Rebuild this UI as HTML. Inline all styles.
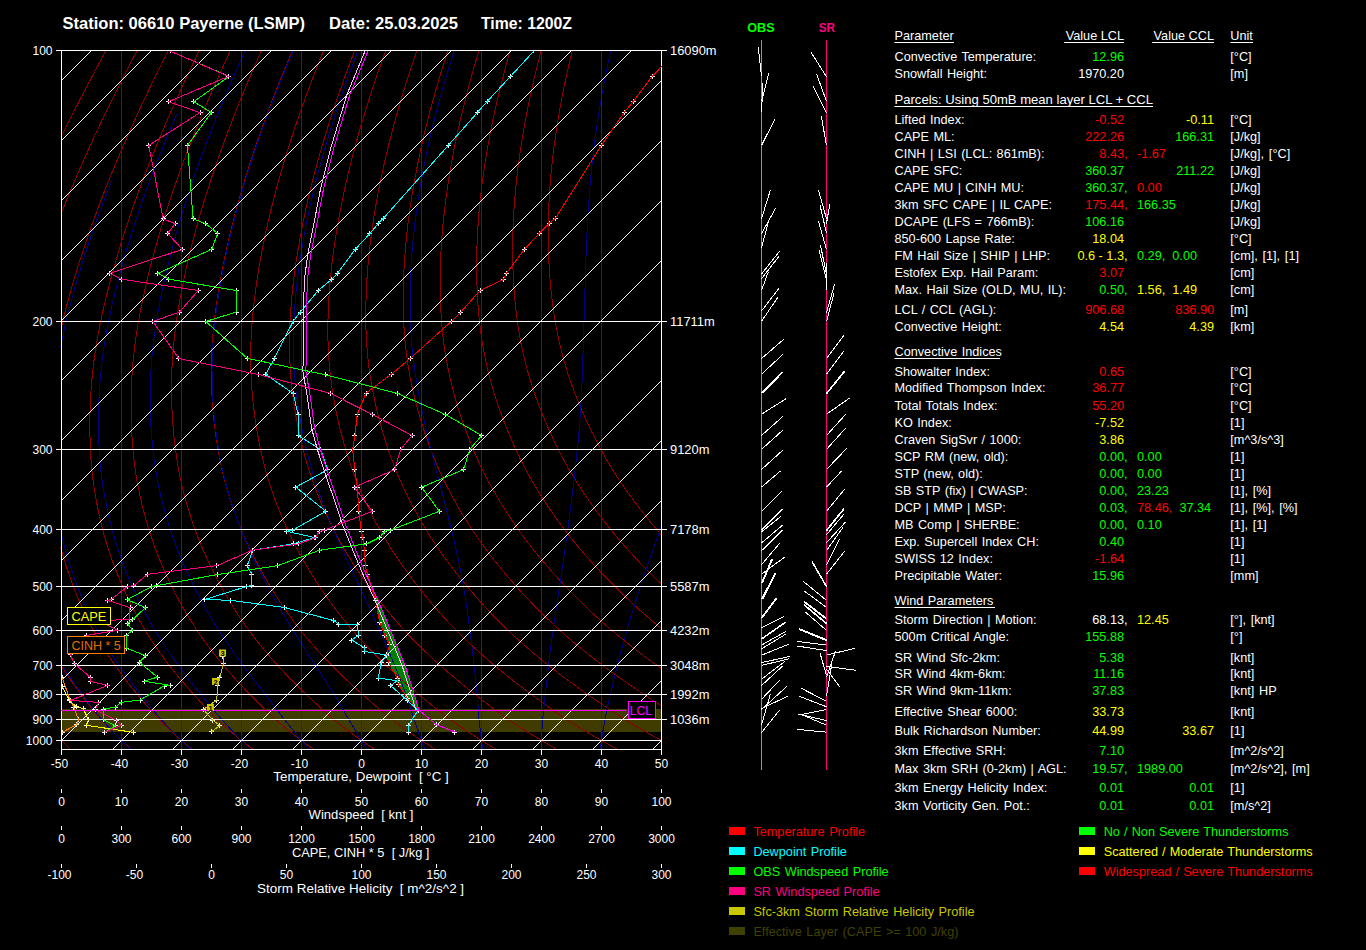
<!DOCTYPE html><html><head><meta charset="utf-8"><style>html,body{margin:0;padding:0;background:#000;width:1366px;height:950px;overflow:hidden}</style></head><body><svg width="1366" height="950" viewBox="0 0 1366 950" style="display:block;font-family:'Liberation Sans', sans-serif"><rect x="62" y="709" width="599" height="23" fill="#403c00"/><polygon points="365.5,571 366.8,576.3 377.9,600 390.6,630.6 404.8,664.7 413.3,691.2 419,710.2 407.7,698.8 398.2,684.6 397.2,678 388.7,662.8 386.8,654.3 389.7,644.8 384.9,635.3 379.6,622 375.5,600.3 366,573.8" fill="#008000"/><g shape-rendering="crispEdges"><polyline points="106.10,50.50 101.38,59.15 96.83,67.59 92.44,75.80 88.20,83.82 84.11,91.64 80.15,99.27 76.33,106.72 72.64,114.00 69.07,121.12 65.61,128.07 62.27,134.87" fill="none" stroke="#8b0000" stroke-width="1" /><polyline points="60.74,739.72 61.12,740.11 61.50,740.50 61.88,740.89 62.26,741.27 62.64,741.65 63.02,742.04 63.39,742.42 63.77,742.80 64.15,743.17 64.53,743.55 64.91,743.93 65.29,744.30 65.67,744.68 66.05,745.05 66.43,745.42 66.81,745.79 67.19,746.16 67.57,746.53 67.96,746.90 68.34,747.26 68.72,747.63 69.10,747.99 69.48,748.35 69.86,748.71 70.24,749.07 70.62,749.43" fill="none" stroke="#8b0000" stroke-width="1" /><polyline points="137.18,50.50 132.64,59.15 128.26,67.59 124.04,75.80 119.97,83.82 116.04,91.64 112.25,99.27 108.60,106.72 105.06,114.00 101.65,121.12 98.35,128.07 95.16,134.87 92.08,141.53 89.10,148.04 86.21,154.42 83.42,160.66 80.72,166.78 78.10,172.77 75.57,178.64 73.12,184.40 70.74,190.05 68.44,195.60 66.20,201.03 64.04,206.37 61.94,211.61" fill="none" stroke="#8b0000" stroke-width="1" /><polyline points="60.57,664.86 60.97,665.50 61.37,666.13 61.77,666.76 62.17,667.39 62.57,668.01 62.96,668.64 63.36,669.26 63.77,669.87 64.17,670.49 64.57,671.10 64.97,671.71 65.37,672.32 65.77,672.93 66.17,673.53 66.58,674.13 66.98,674.73 67.38,675.33 67.79,675.92 68.19,676.51 68.59,677.10 69.00,677.69 69.40,678.28 69.81,678.86 70.21,679.44 70.61,680.03 71.02,680.60 71.42,681.18 71.83,681.75 72.23,682.33 72.64,682.90 73.04,683.47 73.44,684.03 73.85,684.60 74.25,685.16 74.66,685.73 75.06,686.29 75.46,686.84 75.87,687.40 76.27,687.96 76.68,688.51 77.08,689.06 77.48,689.61 77.89,690.16 78.29,690.71 78.69,691.26 79.09,691.80 79.49,692.34 79.90,692.88 80.30,693.42 80.70,693.96 81.10,694.50 81.50,695.04 81.90,695.57 82.30,696.10 82.70,696.64 83.10,697.17 83.50,697.70 83.89,698.23 84.29,698.75 84.69,699.28 85.09,699.81 85.48,700.33 85.88,700.85 86.28,701.37 86.67,701.89 87.07,702.41 87.46,702.93 87.86,703.44 88.26,703.95 88.65,704.47 89.05,704.98 89.44,705.49 89.84,705.99 90.24,706.50 90.63,707.00 91.03,707.50 91.42,708.01 91.82,708.50 92.22,709.00 92.61,709.50 93.01,709.99 93.41,710.48 93.80,710.98 94.20,711.46 94.60,711.95 95.00,712.44 95.40,712.92 95.79,713.40 96.19,713.88 96.59,714.36 96.99,714.84 97.39,715.31 97.79,715.79 98.20,716.26 98.60,716.73 99.00,717.19 99.40,717.66 99.81,718.12 100.21,718.58 100.61,719.04 101.02,719.50 101.42,719.96 101.83,720.41 102.24,720.86 102.64,721.31 103.05,721.76 103.45,722.21 103.86,722.66 104.27,723.10 104.67,723.55 105.08,723.99 105.49,724.43 105.90,724.87 106.30,725.30 106.71,725.74 107.12,726.17 107.53,726.61 107.94,727.04 108.35,727.47 108.75,727.90 109.16,728.32 109.57,728.75 109.98,729.17 110.39,729.60 110.80,730.02 111.21,730.44 111.62,730.86 112.03,731.27 112.44,731.69 112.85,732.10 113.26,732.52 113.67,732.93 114.08,733.34 114.50,733.75 114.91,734.16 115.32,734.56 115.73,734.97 116.14,735.37 116.55,735.77 116.96,736.17 117.38,736.57 117.79,736.97 118.20,737.37 118.61,737.76 119.02,738.16 119.44,738.55 119.85,738.94 120.26,739.34 120.67,739.72 121.09,740.11 121.50,740.50 121.91,740.89 122.33,741.27 122.74,741.65 123.15,742.04 123.57,742.42 123.98,742.80 124.39,743.17 124.81,743.55 125.22,743.93 125.63,744.30 126.05,744.68 126.46,745.05 126.87,745.42 127.29,745.79 127.70,746.16 128.12,746.53 128.53,746.90 128.95,747.26 129.36,747.63 129.77,747.99 130.19,748.35 130.60,748.71 131.02,749.07 131.43,749.43" fill="none" stroke="#8b0000" stroke-width="1" /><polyline points="168.26,50.50 163.89,59.15 159.69,67.59 155.64,75.80 151.74,83.82 147.98,91.64 144.36,99.27 140.86,106.72 137.49,114.00 134.23,121.12 131.09,128.07 128.06,134.87 125.13,141.53 122.30,148.04 119.56,154.42 116.92,160.66 114.36,166.78 111.89,172.77 109.50,178.64 107.19,184.40 104.95,190.05 102.79,195.60 100.69,201.03 98.67,206.37 96.71,211.61 94.81,216.76 92.97,221.81 91.19,226.78 89.47,231.66 87.80,236.46 86.18,241.17 84.62,245.81 83.10,250.37 81.63,254.86 80.21,259.27 78.84,263.62 77.50,267.90 76.21,272.10 74.96,276.25 73.75,280.33 72.58,284.35 71.45,288.31 70.35,292.21 69.29,296.06 68.26,299.85 67.26,303.59 66.30,307.27 65.37,310.90 64.46,314.48 63.59,318.02 62.75,321.50 61.94,324.93 61.16,328.32" fill="none" stroke="#8b0000" stroke-width="1" /><polyline points="60.67,547.23 60.99,548.43 61.31,549.63 61.64,550.82 61.97,552.00 62.30,553.18 62.63,554.35 62.97,555.51 63.31,556.66 63.65,557.81 63.99,558.95 64.33,560.08 64.68,561.21 65.02,562.33 65.37,563.44 65.72,564.55 66.08,565.65 66.43,566.74 66.79,567.83 67.14,568.92 67.50,569.99 67.86,571.07 68.22,572.13 68.59,573.19 68.95,574.25 69.32,575.30 69.68,576.34 70.05,577.38 70.42,578.41 70.79,579.44 71.16,580.46 71.53,581.48 71.90,582.50 72.27,583.50 72.65,584.51 73.02,585.51 73.40,586.50 73.78,587.49 74.15,588.47 74.53,589.45 74.91,590.43 75.29,591.40 75.67,592.36 76.06,593.32 76.44,594.28 76.82,595.23 77.21,596.18 77.60,597.12 77.98,598.05 78.37,598.99 78.76,599.91 79.15,600.84 79.54,601.76 79.94,602.67 80.33,603.58 80.73,604.48 81.12,605.39 81.52,606.28 81.91,607.17 82.31,608.06 82.71,608.95 83.11,609.82 83.51,610.70 83.91,611.57 84.32,612.44 84.72,613.30 85.12,614.16 85.53,615.01 85.94,615.86 86.34,616.71 86.75,617.55 87.16,618.39 87.57,619.22 87.98,620.05 88.39,620.88 88.80,621.70 89.22,622.52 89.63,623.34 90.05,624.15 90.46,624.96 90.88,625.76 91.29,626.56 91.71,627.35 92.13,628.15 92.55,628.93 92.97,629.72 93.39,630.50 93.81,631.28 94.24,632.05 94.66,632.82 95.08,633.59 95.51,634.35 95.94,635.11 96.36,635.86 96.79,636.62 97.22,637.36 97.65,638.11 98.08,638.85 98.51,639.59 98.94,640.33 99.37,641.06 99.80,641.79 100.24,642.51 100.67,643.23 101.10,643.95 101.54,644.67 101.97,645.38 102.41,646.09 102.84,646.80 103.28,647.50 103.72,648.20 104.15,648.90 104.59,649.60 105.03,650.29 105.47,650.98 105.91,651.67 106.35,652.35 106.78,653.03 107.22,653.71 107.66,654.39 108.10,655.06 108.54,655.73 108.98,656.40 109.42,657.06 109.86,657.73 110.30,658.39 110.75,659.05 111.19,659.70 111.63,660.36 112.07,661.01 112.51,661.66 112.95,662.30 113.39,662.95 113.83,663.59 114.28,664.23 114.72,664.86 115.16,665.50 115.60,666.13 116.04,666.76 116.49,667.39 116.93,668.01 117.37,668.64 117.82,669.26 118.26,669.87 118.70,670.49 119.15,671.10 119.59,671.71 120.04,672.32 120.48,672.93 120.93,673.53 121.37,674.13 121.82,674.73 122.27,675.33 122.71,675.92 123.16,676.51 123.61,677.10 124.05,677.69 124.50,678.28 124.94,678.86 125.39,679.44 125.84,680.03 126.28,680.60 126.73,681.18 127.18,681.75 127.62,682.33 128.07,682.90 128.52,683.47 128.96,684.03 129.41,684.60 129.85,685.16 130.30,685.73 130.74,686.29 131.19,686.84 131.63,687.40 132.08,687.96 132.52,688.51 132.97,689.06 133.41,689.61 133.86,690.16 134.30,690.71 134.74,691.26 135.19,691.80 135.63,692.34 136.07,692.88 136.51,693.42 136.95,693.96 137.39,694.50 137.84,695.04 138.28,695.57 138.72,696.10 139.15,696.64 139.59,697.17 140.03,697.70 140.47,698.23 140.91,698.75 141.34,699.28 141.78,699.81 142.22,700.33 142.65,700.85 143.09,701.37 143.52,701.89 143.96,702.41 144.39,702.93 144.83,703.44 145.26,703.95 145.70,704.47 146.13,704.98 146.57,705.49 147.00,705.99 147.44,706.50 147.87,707.00 148.30,707.50 148.74,708.01 149.17,708.50 149.61,709.00 150.04,709.50 150.48,709.99 150.91,710.48 151.35,710.98 151.78,711.46 152.22,711.95 152.66,712.44 153.09,712.92 153.53,713.40 153.97,713.88 154.40,714.36 154.84,714.84 155.28,715.31 155.72,715.79 156.16,716.26 156.60,716.73 157.03,717.19 157.47,717.66 157.92,718.12 158.36,718.58 158.80,719.04 159.24,719.50 159.68,719.96 160.12,720.41 160.57,720.86 161.01,721.31 161.45,721.76 161.90,722.21 162.34,722.66 162.78,723.10 163.23,723.55 163.67,723.99 164.11,724.43 164.56,724.87 165.00,725.30 165.45,725.74 165.89,726.17 166.33,726.61 166.78,727.04 167.22,727.47 167.67,727.90 168.11,728.32 168.56,728.75 169.00,729.17 169.45,729.60 169.89,730.02 170.34,730.44 170.78,730.86 171.23,731.27 171.68,731.69 172.12,732.10 172.57,732.52 173.01,732.93 173.46,733.34 173.91,733.75 174.35,734.16 174.80,734.56 175.24,734.97 175.69,735.37 176.14,735.77 176.58,736.17 177.03,736.57 177.48,736.97 177.92,737.37 178.37,737.76 178.82,738.16 179.26,738.55 179.71,738.94 180.16,739.34 180.61,739.72 181.05,740.11 181.50,740.50 181.95,740.89 182.39,741.27 182.84,741.65 183.29,742.04 183.74,742.42 184.18,742.80 184.63,743.17 185.08,743.55 185.53,743.93 185.97,744.30 186.42,744.68 186.87,745.05 187.32,745.42 187.76,745.79 188.21,746.16 188.66,746.53 189.11,746.90 189.55,747.26 190.00,747.63 190.45,747.99 190.90,748.35 191.35,748.71 191.79,749.07 192.24,749.43" fill="none" stroke="#8b0000" stroke-width="1" /><polyline points="199.34,50.50 195.15,59.15 191.12,67.59 187.24,75.80 183.51,83.82 179.92,91.64 176.46,99.27 173.12,106.72 169.91,114.00 166.82,121.12 163.83,128.07 160.95,134.87 158.18,141.53 155.50,148.04 152.91,154.42 150.42,160.66 148.01,166.78 145.68,172.77 143.43,178.64 141.26,184.40 139.17,190.05 137.14,195.60 135.18,201.03 133.29,206.37 131.47,211.61 129.70,216.76 128.00,221.81 126.35,226.78 124.75,231.66 123.21,236.46 121.73,241.17 120.29,245.81 118.90,250.37 117.55,254.86 116.26,259.27 115.00,263.62 113.79,267.90 112.62,272.10 111.49,276.25 110.40,280.33 109.34,284.35 108.32,288.31 107.34,292.21 106.39,296.06 105.48,299.85 104.59,303.59 103.74,307.27 102.92,310.90 102.13,314.48 101.37,318.02 100.63,321.50 99.93,324.93 99.26,328.32 98.62,331.65 98.01,334.93 97.44,338.16 96.89,341.35 96.37,344.49 95.87,347.58 95.40,350.63 94.96,353.64 94.54,356.62 94.15,359.55 93.77,362.44 93.42,365.29 93.09,368.11 92.78,370.89 92.49,373.64 92.22,376.36 91.96,379.04 91.73,381.69 91.51,384.30 91.30,386.89 91.12,389.45 90.94,391.98 90.79,394.48 90.64,396.95 90.51,399.40 90.40,401.82 90.29,404.21 90.20,406.58 90.12,408.92 90.06,411.25 90.00,413.54 89.95,415.82 89.92,418.07 89.89,420.30 89.88,422.51 89.87,424.70 89.87,426.87 89.89,429.02 89.91,431.15 89.93,433.26 89.97,435.35 90.01,437.42 90.06,439.48 90.12,441.51 90.19,443.54 90.26,445.54 90.34,447.53 90.42,449.50 90.51,451.45 90.61,453.39 90.72,455.31 90.84,457.20 90.97,459.09 91.11,460.95 91.25,462.79 91.40,464.62 91.56,466.43 91.73,468.23 91.91,470.01 92.09,471.77 92.28,473.52 92.47,475.25 92.67,476.97 92.88,478.67 93.10,480.36 93.32,482.04 93.55,483.70 93.78,485.34 94.01,486.98 94.26,488.60 94.50,490.21 94.76,491.80 95.02,493.39 95.28,494.96 95.54,496.52 95.82,498.06 96.09,499.60 96.37,501.13 96.65,502.64 96.94,504.14 97.23,505.63 97.53,507.11 97.83,508.58 98.13,510.04 98.43,511.49 98.74,512.93 99.05,514.36 99.37,515.79 99.69,517.20 100.01,518.60 100.33,519.99 100.66,521.38 100.99,522.75 101.32,524.12 101.65,525.48 101.98,526.83 102.32,528.17 102.66,529.50 103.01,530.82 103.35,532.14 103.70,533.44 104.05,534.74 104.41,536.03 104.77,537.31 105.13,538.58 105.50,539.84 105.87,541.09 106.24,542.33 106.61,543.57 106.99,544.80 107.37,546.02 107.75,547.23 108.13,548.43 108.52,549.63 108.91,550.82 109.30,552.00 109.69,553.18 110.09,554.35 110.49,555.51 110.88,556.66 111.29,557.81 111.69,558.95 112.09,560.08 112.50,561.21 112.91,562.33 113.32,563.44 113.73,564.55 114.14,565.65 114.55,566.74 114.97,567.83 115.38,568.92 115.80,569.99 116.22,571.07 116.64,572.13 117.06,573.19 117.48,574.25 117.91,575.30 118.33,576.34 118.76,577.38 119.18,578.41 119.61,579.44 120.04,580.46 120.47,581.48 120.90,582.50 121.33,583.50 121.76,584.51 122.19,585.51 122.62,586.50 123.05,587.49 123.49,588.47 123.92,589.45 124.36,590.43 124.79,591.40 125.23,592.36 125.67,593.32 126.11,594.28 126.54,595.23 126.99,596.18 127.43,597.12 127.87,598.05 128.31,598.99 128.76,599.91 129.20,600.84 129.65,601.76 130.09,602.67 130.54,603.58 130.99,604.48 131.44,605.39 131.88,606.28 132.33,607.17 132.79,608.06 133.24,608.95 133.69,609.82 134.14,610.70 134.60,611.57 135.05,612.44 135.51,613.30 135.96,614.16 136.42,615.01 136.88,615.86 137.34,616.71 137.80,617.55 138.26,618.39 138.72,619.22 139.18,620.05 139.64,620.88 140.11,621.70 140.57,622.52 141.03,623.34 141.50,624.15 141.96,624.96 142.43,625.76 142.90,626.56 143.37,627.35 143.83,628.15 144.30,628.93 144.77,629.72 145.24,630.50 145.72,631.28 146.19,632.05 146.66,632.82 147.13,633.59 147.61,634.35 148.08,635.11 148.56,635.86 149.03,636.62 149.51,637.36 149.99,638.11 150.47,638.85 150.95,639.59 151.42,640.33 151.90,641.06 152.38,641.79 152.86,642.51 153.35,643.23 153.83,643.95 154.31,644.67 154.79,645.38 155.27,646.09 155.76,646.80 156.24,647.50 156.72,648.20 157.21,648.90 157.69,649.60 158.17,650.29 158.66,650.98 159.14,651.67 159.63,652.35 160.11,653.03 160.60,653.71 161.08,654.39 161.57,655.06 162.06,655.73 162.54,656.40 163.03,657.06 163.51,657.73 164.00,658.39 164.49,659.05 164.97,659.70 165.46,660.36 165.94,661.01 166.43,661.66 166.92,662.30 167.40,662.95 167.89,663.59 168.37,664.23 168.86,664.86 169.35,665.50 169.83,666.13 170.32,666.76 170.80,667.39 171.29,668.01 171.78,668.64 172.27,669.26 172.75,669.87 173.24,670.49 173.73,671.10 174.22,671.71 174.71,672.32 175.20,672.93 175.68,673.53 176.17,674.13 176.66,674.73 177.15,675.33 177.64,675.92 178.13,676.51 178.62,677.10 179.11,677.69 179.59,678.28 180.08,678.86 180.57,679.44 181.06,680.03 181.55,680.60 182.04,681.18 182.53,681.75 183.01,682.33 183.50,682.90 183.99,683.47 184.48,684.03 184.97,684.60 185.45,685.16 185.94,685.73 186.43,686.29 186.91,686.84 187.40,687.40 187.89,687.96 188.37,688.51 188.86,689.06 189.34,689.61 189.83,690.16 190.31,690.71 190.79,691.26 191.28,691.80 191.76,692.34 192.24,692.88 192.73,693.42 193.21,693.96 193.69,694.50 194.17,695.04 194.65,695.57 195.13,696.10 195.61,696.64 196.09,697.17 196.57,697.70 197.04,698.23 197.52,698.75 198.00,699.28 198.47,699.81 198.95,700.33 199.42,700.85 199.90,701.37 200.37,701.89 200.85,702.41 201.32,702.93 201.80,703.44 202.27,703.95 202.74,704.47 203.22,704.98 203.69,705.49 204.16,705.99 204.64,706.50 205.11,707.00 205.58,707.50 206.06,708.01 206.53,708.50 207.00,709.00 207.47,709.50 207.95,709.99 208.42,710.48 208.89,710.98 209.37,711.46 209.84,711.95 210.32,712.44 210.79,712.92 211.26,713.40 211.74,713.88 212.21,714.36 212.69,714.84 213.16,715.31 213.64,715.79 214.12,716.26 214.59,716.73 215.07,717.19 215.55,717.66 216.02,718.12 216.50,718.58 216.98,719.04 217.46,719.50 217.94,719.96 218.42,720.41 218.90,720.86 219.38,721.31 219.86,721.76 220.34,722.21 220.82,722.66 221.30,723.10 221.78,723.55 222.26,723.99 222.74,724.43 223.22,724.87 223.70,725.30 224.18,725.74 224.66,726.17 225.14,726.61 225.62,727.04 226.10,727.47 226.58,727.90 227.06,728.32 227.54,728.75 228.02,729.17 228.50,729.60 228.98,730.02 229.47,730.44 229.95,730.86 230.43,731.27 230.91,731.69 231.39,732.10 231.87,732.52 232.35,732.93 232.83,733.34 233.32,733.75 233.80,734.16 234.28,734.56 234.76,734.97 235.24,735.37 235.72,735.77 236.20,736.17 236.69,736.57 237.17,736.97 237.65,737.37 238.13,737.76 238.61,738.16 239.09,738.55 239.57,738.94 240.06,739.34 240.54,739.72 241.02,740.11 241.50,740.50 241.98,740.89 242.46,741.27 242.94,741.65 243.43,742.04 243.91,742.42 244.39,742.80 244.87,743.17 245.35,743.55 245.83,743.93 246.31,744.30 246.80,744.68 247.28,745.05 247.76,745.42 248.24,745.79 248.72,746.16 249.20,746.53 249.68,746.90 250.16,747.26 250.65,747.63 251.13,747.99 251.61,748.35 252.09,748.71 252.57,749.07 253.05,749.43" fill="none" stroke="#8b0000" stroke-width="1" /><polyline points="230.41,50.50 226.40,59.15 222.54,67.59 218.84,75.80 215.28,83.82 211.85,91.64 208.56,99.27 205.39,106.72 202.34,114.00 199.40,121.12 196.57,128.07 193.85,134.87 191.22,141.53 188.70,148.04 186.26,154.42 183.91,160.66 181.65,166.78 179.47,172.77 177.36,178.64 175.34,184.40 173.38,190.05 171.49,195.60 169.67,201.03 167.92,206.37 166.23,211.61 164.60,216.76 163.02,221.81 161.51,226.78 160.04,231.66 158.63,236.46 157.27,241.17 155.96,245.81 154.69,250.37 153.47,254.86 152.30,259.27 151.17,263.62 150.08,267.90 149.03,272.10 148.01,276.25 147.04,280.33 146.10,284.35 145.20,288.31 144.33,292.21 143.50,296.06 142.70,299.85 141.93,303.59 141.19,307.27 140.48,310.90 139.80,314.48 139.14,318.02 138.52,321.50 137.92,324.93 137.36,328.32 136.83,331.65 136.32,334.93 135.85,338.16 135.41,341.35 134.99,344.49 134.60,347.58 134.23,350.63 133.89,353.64 133.57,356.62 133.28,359.55 133.00,362.44 132.75,365.29 132.52,368.11 132.31,370.89 132.11,373.64 131.94,376.36 131.78,379.04 131.64,381.69 131.51,384.30 131.40,386.89 131.31,389.45 131.23,391.98 131.16,394.48 131.11,396.95 131.07,399.40 131.05,401.82 131.04,404.21 131.04,406.58 131.05,408.92 131.07,411.25 131.10,413.54 131.14,415.82 131.19,418.07 131.26,420.30 131.33,422.51 131.41,424.70 131.49,426.87 131.59,429.02 131.70,431.15 131.81,433.26 131.93,435.35 132.06,437.42 132.19,439.48 132.33,441.51 132.48,443.54 132.63,445.54 132.79,447.53 132.96,449.50 133.13,451.45 133.31,453.39 133.50,455.31 133.70,457.20 133.91,459.09 134.12,460.95 134.34,462.79 134.58,464.62 134.81,466.43 135.06,468.23 135.31,470.01 135.57,471.77 135.84,473.52 136.11,475.25 136.39,476.97 136.67,478.67 136.96,480.36 137.26,482.04 137.56,483.70 137.86,485.34 138.17,486.98 138.49,488.60 138.81,490.21 139.14,491.80 139.47,493.39 139.80,494.96 140.14,496.52 140.48,498.06 140.83,499.60 141.18,501.13 141.54,502.64 141.90,504.14 142.26,505.63 142.62,507.11 142.99,508.58 143.36,510.04 143.74,511.49 144.11,512.93 144.50,514.36 144.88,515.79 145.26,517.20 145.65,518.60 146.04,519.99 146.44,521.38 146.83,522.75 147.23,524.12 147.63,525.48 148.03,526.83 148.44,528.17 148.84,529.50 149.25,530.82 149.66,532.14 150.08,533.44 150.50,534.74 150.92,536.03 151.34,537.31 151.77,538.58 152.20,539.84 152.63,541.09 153.07,542.33 153.50,543.57 153.94,544.80 154.39,546.02 154.83,547.23 155.28,548.43 155.73,549.63 156.18,550.82 156.63,552.00 157.09,553.18 157.54,554.35 158.00,555.51 158.46,556.66 158.92,557.81 159.39,558.95 159.85,560.08 160.32,561.21 160.79,562.33 161.26,563.44 161.73,564.55 162.20,565.65 162.67,566.74 163.15,567.83 163.62,568.92 164.10,569.99 164.58,571.07 165.06,572.13 165.54,573.19 166.02,574.25 166.50,575.30 166.98,576.34 167.47,577.38 167.95,578.41 168.43,579.44 168.92,580.46 169.40,581.48 169.89,582.50 170.38,583.50 170.86,584.51 171.35,585.51 171.84,586.50 172.33,587.49 172.82,588.47 173.31,589.45 173.80,590.43 174.29,591.40 174.78,592.36 175.28,593.32 175.77,594.28 176.27,595.23 176.76,596.18 177.26,597.12 177.75,598.05 178.25,598.99 178.75,599.91 179.25,600.84 179.75,601.76 180.25,602.67 180.75,603.58 181.25,604.48 181.75,605.39 182.25,606.28 182.76,607.17 183.26,608.06 183.76,608.95 184.27,609.82 184.78,610.70 185.28,611.57 185.79,612.44 186.30,613.30 186.81,614.16 187.31,615.01 187.82,615.86 188.33,616.71 188.84,617.55 189.36,618.39 189.87,619.22 190.38,620.05 190.89,620.88 191.41,621.70 191.92,622.52 192.44,623.34 192.95,624.15 193.47,624.96 193.99,625.76 194.50,626.56 195.02,627.35 195.54,628.15 196.06,628.93 196.58,629.72 197.10,630.50 197.62,631.28 198.14,632.05 198.66,632.82 199.18,633.59 199.71,634.35 200.23,635.11 200.75,635.86 201.28,636.62 201.80,637.36 202.33,638.11 202.86,638.85 203.38,639.59 203.91,640.33 204.44,641.06 204.96,641.79 205.49,642.51 206.02,643.23 206.55,643.95 207.08,644.67 207.61,645.38 208.14,646.09 208.67,646.80 209.20,647.50 209.73,648.20 210.26,648.90 210.79,649.60 211.32,650.29 211.85,650.98 212.38,651.67 212.91,652.35 213.44,653.03 213.98,653.71 214.51,654.39 215.04,655.06 215.57,655.73 216.10,656.40 216.63,657.06 217.16,657.73 217.69,658.39 218.23,659.05 218.76,659.70 219.29,660.36 219.82,661.01 220.35,661.66 220.88,662.30 221.41,662.95 221.94,663.59 222.47,664.23 223.00,664.86 223.53,665.50 224.06,666.13 224.59,666.76 225.12,667.39 225.66,668.01 226.19,668.64 226.72,669.26 227.25,669.87 227.78,670.49 228.31,671.10 228.84,671.71 229.37,672.32 229.91,672.93 230.44,673.53 230.97,674.13 231.50,674.73 232.03,675.33 232.57,675.92 233.10,676.51 233.63,677.10 234.16,677.69 234.69,678.28 235.22,678.86 235.75,679.44 236.28,680.03 236.82,680.60 237.35,681.18 237.88,681.75 238.41,682.33 238.94,682.90 239.47,683.47 240.00,684.03 240.52,684.60 241.05,685.16 241.58,685.73 242.11,686.29 242.64,686.84 243.16,687.40 243.69,687.96 244.22,688.51 244.74,689.06 245.27,689.61 245.80,690.16 246.32,690.71 246.85,691.26 247.37,691.80 247.89,692.34 248.42,692.88 248.94,693.42 249.46,693.96 249.98,694.50 250.50,695.04 251.02,695.57 251.54,696.10 252.06,696.64 252.58,697.17 253.10,697.70 253.62,698.23 254.13,698.75 254.65,699.28 255.17,699.81 255.68,700.33 256.20,700.85 256.71,701.37 257.22,701.89 257.74,702.41 258.25,702.93 258.76,703.44 259.28,703.95 259.79,704.47 260.30,704.98 260.81,705.49 261.33,705.99 261.84,706.50 262.35,707.00 262.86,707.50 263.37,708.01 263.88,708.50 264.39,709.00 264.91,709.50 265.42,709.99 265.93,710.48 266.44,710.98 266.95,711.46 267.46,711.95 267.98,712.44 268.49,712.92 269.00,713.40 269.51,713.88 270.02,714.36 270.54,714.84 271.05,715.31 271.56,715.79 272.08,716.26 272.59,716.73 273.11,717.19 273.62,717.66 274.13,718.12 274.65,718.58 275.17,719.04 275.68,719.50 276.20,719.96 276.71,720.41 277.23,720.86 277.75,721.31 278.26,721.76 278.78,722.21 279.29,722.66 279.81,723.10 280.33,723.55 280.84,723.99 281.36,724.43 281.88,724.87 282.39,725.30 282.91,725.74 283.43,726.17 283.94,726.61 284.46,727.04 284.98,727.47 285.49,727.90 286.01,728.32 286.53,728.75 287.04,729.17 287.56,729.60 288.08,730.02 288.59,730.44 289.11,730.86 289.63,731.27 290.14,731.69 290.66,732.10 291.18,732.52 291.69,732.93 292.21,733.34 292.73,733.75 293.24,734.16 293.76,734.56 294.27,734.97 294.79,735.37 295.31,735.77 295.82,736.17 296.34,736.57 296.86,736.97 297.37,737.37 297.89,737.76 298.40,738.16 298.92,738.55 299.44,738.94 299.95,739.34 300.47,739.72 300.98,740.11 301.50,740.50 302.02,740.89 302.53,741.27 303.05,741.65 303.56,742.04 304.08,742.42 304.59,742.80 305.11,743.17 305.62,743.55 306.14,743.93 306.65,744.30 307.17,744.68 307.68,745.05 308.20,745.42 308.71,745.79 309.23,746.16 309.74,746.53 310.26,746.90 310.77,747.26 311.29,747.63 311.80,747.99 312.32,748.35 312.83,748.71 313.35,749.07 313.86,749.43" fill="none" stroke="#8b0000" stroke-width="1" /><polyline points="261.49,50.50 257.65,59.15 253.97,67.59 250.44,75.80 247.04,83.82 243.79,91.64 240.66,99.27 237.65,106.72 234.76,114.00 231.98,121.12 229.31,128.07 226.74,134.87 224.27,141.53 221.89,148.04 219.61,154.42 217.41,160.66 215.29,166.78 213.26,172.77 211.30,178.64 209.41,184.40 207.59,190.05 205.85,195.60 204.16,201.03 202.55,206.37 200.99,211.61 199.49,216.76 198.05,221.81 196.66,226.78 195.33,231.66 194.05,236.46 192.81,241.17 191.63,245.81 190.49,250.37 189.39,254.86 188.34,259.27 187.33,263.62 186.36,267.90 185.43,272.10 184.54,276.25 183.68,280.33 182.86,284.35 182.08,288.31 181.33,292.21 180.61,296.06 179.92,299.85 179.26,303.59 178.63,307.27 178.03,310.90 177.46,314.48 176.92,318.02 176.40,321.50 175.91,324.93 175.46,328.32 175.03,331.65 174.63,334.93 174.27,338.16 173.93,341.35 173.61,344.49 173.32,347.58 173.06,350.63 172.82,353.64 172.60,356.62 172.41,359.55 172.23,362.44 172.08,365.29 171.95,368.11 171.83,370.89 171.73,373.64 171.65,376.36 171.59,379.04 171.55,381.69 171.52,384.30 171.50,386.89 171.50,389.45 171.51,391.98 171.54,394.48 171.58,396.95 171.64,399.40 171.70,401.82 171.78,404.21 171.87,406.58 171.97,408.92 172.08,411.25 172.20,413.54 172.33,415.82 172.47,418.07 172.62,420.30 172.78,422.51 172.94,424.70 173.12,426.87 173.30,429.02 173.49,431.15 173.69,433.26 173.89,435.35 174.10,437.42 174.32,439.48 174.54,441.51 174.77,443.54 175.01,445.54 175.25,447.53 175.49,449.50 175.75,451.45 176.01,453.39 176.28,455.31 176.56,457.20 176.84,459.09 177.14,460.95 177.44,462.79 177.75,464.62 178.06,466.43 178.39,468.23 178.72,470.01 179.05,471.77 179.39,473.52 179.74,475.25 180.10,476.97 180.46,478.67 180.82,480.36 181.19,482.04 181.57,483.70 181.95,485.34 182.33,486.98 182.72,488.60 183.12,490.21 183.52,491.80 183.92,493.39 184.33,494.96 184.74,496.52 185.15,498.06 185.57,499.60 185.99,501.13 186.42,502.64 186.85,504.14 187.28,505.63 187.72,507.11 188.15,508.58 188.60,510.04 189.04,511.49 189.49,512.93 189.94,514.36 190.39,515.79 190.84,517.20 191.30,518.60 191.76,519.99 192.22,521.38 192.68,522.75 193.15,524.12 193.61,525.48 194.08,526.83 194.55,528.17 195.02,529.50 195.50,530.82 195.98,532.14 196.46,533.44 196.94,534.74 197.43,536.03 197.91,537.31 198.41,538.58 198.90,539.84 199.40,541.09 199.90,542.33 200.40,543.57 200.90,544.80 201.41,546.02 201.91,547.23 202.42,548.43 202.94,549.63 203.45,550.82 203.96,552.00 204.48,553.18 205.00,554.35 205.52,555.51 206.04,556.66 206.56,557.81 207.09,558.95 207.61,560.08 208.14,561.21 208.67,562.33 209.20,563.44 209.73,564.55 210.26,565.65 210.80,566.74 211.33,567.83 211.87,568.92 212.40,569.99 212.94,571.07 213.47,572.13 214.01,573.19 214.55,574.25 215.09,575.30 215.63,576.34 216.17,577.38 216.71,578.41 217.26,579.44 217.80,580.46 218.34,581.48 218.88,582.50 219.43,583.50 219.97,584.51 220.52,585.51 221.06,586.50 221.61,587.49 222.15,588.47 222.70,589.45 223.24,590.43 223.79,591.40 224.34,592.36 224.89,593.32 225.44,594.28 225.99,595.23 226.54,596.18 227.09,597.12 227.64,598.05 228.19,598.99 228.74,599.91 229.29,600.84 229.85,601.76 230.40,602.67 230.95,603.58 231.51,604.48 232.06,605.39 232.62,606.28 233.18,607.17 233.73,608.06 234.29,608.95 234.85,609.82 235.41,610.70 235.97,611.57 236.53,612.44 237.09,613.30 237.65,614.16 238.21,615.01 238.77,615.86 239.33,616.71 239.89,617.55 240.45,618.39 241.02,619.22 241.58,620.05 242.15,620.88 242.71,621.70 243.27,622.52 243.84,623.34 244.41,624.15 244.97,624.96 245.54,625.76 246.11,626.56 246.67,627.35 247.24,628.15 247.81,628.93 248.38,629.72 248.95,630.50 249.52,631.28 250.09,632.05 250.66,632.82 251.23,633.59 251.80,634.35 252.38,635.11 252.95,635.86 253.52,636.62 254.10,637.36 254.67,638.11 255.24,638.85 255.82,639.59 256.39,640.33 256.97,641.06 257.54,641.79 258.12,642.51 258.70,643.23 259.27,643.95 259.85,644.67 260.43,645.38 261.00,646.09 261.58,646.80 262.16,647.50 262.73,648.20 263.31,648.90 263.89,649.60 264.46,650.29 265.04,650.98 265.62,651.67 266.20,652.35 266.77,653.03 267.35,653.71 267.93,654.39 268.51,655.06 269.08,655.73 269.66,656.40 270.24,657.06 270.81,657.73 271.39,658.39 271.97,659.05 272.54,659.70 273.12,660.36 273.69,661.01 274.27,661.66 274.85,662.30 275.42,662.95 276.00,663.59 276.57,664.23 277.15,664.86 277.72,665.50 278.29,666.13 278.87,666.76 279.44,667.39 280.02,668.01 280.59,668.64 281.17,669.26 281.74,669.87 282.32,670.49 282.89,671.10 283.47,671.71 284.04,672.32 284.62,672.93 285.19,673.53 285.77,674.13 286.34,674.73 286.92,675.33 287.49,675.92 288.07,676.51 288.64,677.10 289.21,677.69 289.79,678.28 290.36,678.86 290.94,679.44 291.51,680.03 292.08,680.60 292.65,681.18 293.23,681.75 293.80,682.33 294.37,682.90 294.94,683.47 295.51,684.03 296.08,684.60 296.65,685.16 297.22,685.73 297.79,686.29 298.36,686.84 298.93,687.40 299.50,687.96 300.07,688.51 300.63,689.06 301.20,689.61 301.77,690.16 302.33,690.71 302.90,691.26 303.46,691.80 304.03,692.34 304.59,692.88 305.15,693.42 305.72,693.96 306.28,694.50 306.84,695.04 307.40,695.57 307.96,696.10 308.52,696.64 309.08,697.17 309.63,697.70 310.19,698.23 310.75,698.75 311.30,699.28 311.86,699.81 312.41,700.33 312.97,700.85 313.52,701.37 314.07,701.89 314.63,702.41 315.18,702.93 315.73,703.44 316.28,703.95 316.83,704.47 317.39,704.98 317.94,705.49 318.49,705.99 319.04,706.50 319.59,707.00 320.14,707.50 320.69,708.01 321.24,708.50 321.79,709.00 322.34,709.50 322.89,709.99 323.44,710.48 323.99,710.98 324.54,711.46 325.09,711.95 325.64,712.44 326.19,712.92 326.74,713.40 327.29,713.88 327.84,714.36 328.39,714.84 328.94,715.31 329.49,715.79 330.04,716.26 330.59,716.73 331.14,717.19 331.69,717.66 332.24,718.12 332.80,718.58 333.35,719.04 333.90,719.50 334.45,719.96 335.01,720.41 335.56,720.86 336.11,721.31 336.67,721.76 337.22,722.21 337.77,722.66 338.33,723.10 338.88,723.55 339.43,723.99 339.98,724.43 340.54,724.87 341.09,725.30 341.64,725.74 342.20,726.17 342.75,726.61 343.30,727.04 343.85,727.47 344.41,727.90 344.96,728.32 345.51,728.75 346.06,729.17 346.62,729.60 347.17,730.02 347.72,730.44 348.27,730.86 348.82,731.27 349.38,731.69 349.93,732.10 350.48,732.52 351.03,732.93 351.58,733.34 352.14,733.75 352.69,734.16 353.24,734.56 353.79,734.97 354.34,735.37 354.89,735.77 355.44,736.17 355.99,736.57 356.55,736.97 357.10,737.37 357.65,737.76 358.20,738.16 358.75,738.55 359.30,738.94 359.85,739.34 360.40,739.72 360.95,740.11 361.50,740.50 362.05,740.89 362.60,741.27 363.15,741.65 363.70,742.04 364.25,742.42 364.80,742.80 365.35,743.17 365.90,743.55 366.45,743.93 367.00,744.30 367.54,744.68 368.09,745.05 368.64,745.42 369.19,745.79 369.74,746.16 370.29,746.53 370.83,746.90 371.38,747.26 371.93,747.63 372.48,747.99 373.03,748.35 373.57,748.71 374.12,749.07 374.67,749.43" fill="none" stroke="#8b0000" stroke-width="1" /><polyline points="292.57,50.50 288.91,59.15 285.40,67.59 282.04,75.80 278.81,83.82 275.72,91.64 272.76,99.27 269.91,106.72 267.18,114.00 264.56,121.12 262.05,128.07 259.64,134.87 257.32,141.53 255.09,148.04 252.96,154.42 250.91,160.66 248.94,166.78 247.04,172.77 245.23,178.64 243.48,184.40 241.81,190.05 240.20,195.60 238.66,201.03 237.17,206.37 235.75,211.61 234.39,216.76 233.08,221.81 231.82,226.78 230.62,231.66 229.46,236.46 228.36,241.17 227.30,245.81 226.28,250.37 225.31,254.86 224.39,259.27 223.50,263.62 222.65,267.90 221.84,272.10 221.07,276.25 220.33,280.33 219.62,284.35 218.96,288.31 218.32,292.21 217.71,296.06 217.14,299.85 216.59,303.59 216.08,307.27 215.59,310.90 215.13,314.48 214.69,318.02 214.28,321.50 213.90,324.93 213.56,328.32 213.24,331.65 212.95,334.93 212.68,338.16 212.45,341.35 212.24,344.49 212.05,347.58 211.89,350.63 211.75,353.64 211.63,356.62 211.54,359.55 211.46,362.44 211.41,365.29 211.37,368.11 211.36,370.89 211.36,373.64 211.37,376.36 211.41,379.04 211.46,381.69 211.52,384.30 211.60,386.89 211.69,389.45 211.80,391.98 211.92,394.48 212.05,396.95 212.20,399.40 212.35,401.82 212.52,404.21 212.70,406.58 212.89,408.92 213.09,411.25 213.30,413.54 213.52,415.82 213.74,418.07 213.98,420.30 214.22,422.51 214.48,424.70 214.74,426.87 215.00,429.02 215.28,431.15 215.56,433.26 215.85,435.35 216.14,437.42 216.44,439.48 216.75,441.51 217.06,443.54 217.38,445.54 217.70,447.53 218.03,449.50 218.36,451.45 218.71,453.39 219.06,455.31 219.41,457.20 219.78,459.09 220.15,460.95 220.53,462.79 220.92,464.62 221.32,466.43 221.72,468.23 222.12,470.01 222.54,471.77 222.95,473.52 223.38,475.25 223.81,476.97 224.24,478.67 224.68,480.36 225.13,482.04 225.58,483.70 226.03,485.34 226.49,486.98 226.96,488.60 227.42,490.21 227.90,491.80 228.37,493.39 228.85,494.96 229.33,496.52 229.82,498.06 230.31,499.60 230.80,501.13 231.30,502.64 231.80,504.14 232.30,505.63 232.81,507.11 233.32,508.58 233.83,510.04 234.34,511.49 234.86,512.93 235.38,514.36 235.90,515.79 236.42,517.20 236.94,518.60 237.47,519.99 238.00,521.38 238.53,522.75 239.06,524.12 239.59,525.48 240.13,526.83 240.67,528.17 241.20,529.50 241.74,530.82 242.29,532.14 242.83,533.44 243.38,534.74 243.93,536.03 244.49,537.31 245.04,538.58 245.60,539.84 246.16,541.09 246.72,542.33 247.29,543.57 247.86,544.80 248.43,546.02 249.00,547.23 249.57,548.43 250.14,549.63 250.72,550.82 251.30,552.00 251.87,553.18 252.45,554.35 253.04,555.51 253.62,556.66 254.20,557.81 254.79,558.95 255.38,560.08 255.96,561.21 256.55,562.33 257.14,563.44 257.73,564.55 258.33,565.65 258.92,566.74 259.51,567.83 260.11,568.92 260.70,569.99 261.30,571.07 261.89,572.13 262.49,573.19 263.09,574.25 263.68,575.30 264.28,576.34 264.88,577.38 265.48,578.41 266.08,579.44 266.68,580.46 267.28,581.48 267.88,582.50 268.48,583.50 269.08,584.51 269.68,585.51 270.28,586.50 270.88,587.49 271.48,588.47 272.09,589.45 272.69,590.43 273.29,591.40 273.89,592.36 274.50,593.32 275.10,594.28 275.71,595.23 276.31,596.18 276.92,597.12 277.52,598.05 278.13,598.99 278.73,599.91 279.34,600.84 279.95,601.76 280.56,602.67 281.16,603.58 281.77,604.48 282.38,605.39 282.99,606.28 283.60,607.17 284.21,608.06 284.82,608.95 285.43,609.82 286.04,610.70 286.65,611.57 287.26,612.44 287.87,613.30 288.49,614.16 289.10,615.01 289.71,615.86 290.32,616.71 290.94,617.55 291.55,618.39 292.17,619.22 292.78,620.05 293.40,620.88 294.01,621.70 294.63,622.52 295.24,623.34 295.86,624.15 296.48,624.96 297.09,625.76 297.71,626.56 298.33,627.35 298.95,628.15 299.56,628.93 300.18,629.72 300.80,630.50 301.42,631.28 302.04,632.05 302.66,632.82 303.28,633.59 303.90,634.35 304.52,635.11 305.14,635.86 305.77,636.62 306.39,637.36 307.01,638.11 307.63,638.85 308.26,639.59 308.88,640.33 309.50,641.06 310.12,641.79 310.75,642.51 311.37,643.23 312.00,643.95 312.62,644.67 313.24,645.38 313.87,646.09 314.49,646.80 315.11,647.50 315.74,648.20 316.36,648.90 316.99,649.60 317.61,650.29 318.23,650.98 318.86,651.67 319.48,652.35 320.10,653.03 320.73,653.71 321.35,654.39 321.97,655.06 322.60,655.73 323.22,656.40 323.84,657.06 324.46,657.73 325.08,658.39 325.71,659.05 326.33,659.70 326.95,660.36 327.57,661.01 328.19,661.66 328.81,662.30 329.43,662.95 330.05,663.59 330.67,664.23 331.29,664.86 331.91,665.50 332.53,666.13 333.14,666.76 333.76,667.39 334.38,668.01 335.00,668.64 335.62,669.26 336.24,669.87 336.86,670.49 337.47,671.10 338.09,671.71 338.71,672.32 339.33,672.93 339.95,673.53 340.57,674.13 341.18,674.73 341.80,675.33 342.42,675.92 343.04,676.51 343.65,677.10 344.27,677.69 344.88,678.28 345.50,678.86 346.12,679.44 346.73,680.03 347.35,680.60 347.96,681.18 348.58,681.75 349.19,682.33 349.80,682.90 350.42,683.47 351.03,684.03 351.64,684.60 352.25,685.16 352.86,685.73 353.48,686.29 354.09,686.84 354.70,687.40 355.30,687.96 355.91,688.51 356.52,689.06 357.13,689.61 357.74,690.16 358.34,690.71 358.95,691.26 359.55,691.80 360.16,692.34 360.76,692.88 361.37,693.42 361.97,693.96 362.57,694.50 363.17,695.04 363.77,695.57 364.37,696.10 364.97,696.64 365.57,697.17 366.17,697.70 366.76,698.23 367.36,698.75 367.96,699.28 368.55,699.81 369.14,700.33 369.74,700.85 370.33,701.37 370.92,701.89 371.52,702.41 372.11,702.93 372.70,703.44 373.29,703.95 373.88,704.47 374.47,704.98 375.06,705.49 375.65,705.99 376.24,706.50 376.83,707.00 377.42,707.50 378.00,708.01 378.59,708.50 379.18,709.00 379.77,709.50 380.36,709.99 380.94,710.48 381.53,710.98 382.12,711.46 382.71,711.95 383.30,712.44 383.88,712.92 384.47,713.40 385.06,713.88 385.65,714.36 386.23,714.84 386.82,715.31 387.41,715.79 388.00,716.26 388.59,716.73 389.18,717.19 389.76,717.66 390.35,718.12 390.94,718.58 391.53,719.04 392.12,719.50 392.71,719.96 393.30,720.41 393.89,720.86 394.48,721.31 395.07,721.76 395.66,722.21 396.25,722.66 396.84,723.10 397.43,723.55 398.02,723.99 398.61,724.43 399.20,724.87 399.79,725.30 400.38,725.74 400.96,726.17 401.55,726.61 402.14,727.04 402.73,727.47 403.32,727.90 403.91,728.32 404.50,728.75 405.08,729.17 405.67,729.60 406.26,730.02 406.85,730.44 407.43,730.86 408.02,731.27 408.61,731.69 409.20,732.10 409.78,732.52 410.37,732.93 410.96,733.34 411.55,733.75 412.13,734.16 412.72,734.56 413.30,734.97 413.89,735.37 414.48,735.77 415.06,736.17 415.65,736.57 416.23,736.97 416.82,737.37 417.41,737.76 417.99,738.16 418.58,738.55 419.16,738.94 419.75,739.34 420.33,739.72 420.92,740.11 421.50,740.50 422.08,740.89 422.67,741.27 423.25,741.65 423.84,742.04 424.42,742.42 425.00,742.80 425.59,743.17 426.17,743.55 426.75,743.93 427.34,744.30 427.92,744.68 428.50,745.05 429.08,745.42 429.67,745.79 430.25,746.16 430.83,746.53 431.41,746.90 431.99,747.26 432.57,747.63 433.15,747.99 433.74,748.35 434.32,748.71 434.90,749.07 435.48,749.43" fill="none" stroke="#8b0000" stroke-width="1" /><polyline points="323.65,50.50 320.16,59.15 316.83,67.59 313.64,75.80 310.58,83.82 307.66,91.64 304.86,99.27 302.18,106.72 299.61,114.00 297.15,121.12 294.79,128.07 292.53,134.87 290.37,141.53 288.29,148.04 286.31,154.42 284.40,160.66 282.58,166.78 280.83,172.77 279.16,178.64 277.56,184.40 276.02,190.05 274.55,195.60 273.15,201.03 271.80,206.37 270.51,211.61 269.28,216.76 268.10,221.81 266.98,226.78 265.91,231.66 264.88,236.46 263.90,241.17 262.97,245.81 262.08,250.37 261.23,254.86 260.43,259.27 259.66,263.62 258.94,267.90 258.25,272.10 257.59,276.25 256.97,280.33 256.39,284.35 255.83,288.31 255.31,292.21 254.82,296.06 254.36,299.85 253.93,303.59 253.52,307.27 253.14,310.90 252.79,314.48 252.47,318.02 252.17,321.50 251.90,324.93 251.65,328.32 251.44,331.65 251.26,334.93 251.10,338.16 250.97,341.35 250.86,344.49 250.78,347.58 250.72,350.63 250.68,353.64 250.66,356.62 250.67,359.55 250.69,362.44 250.74,365.29 250.80,368.11 250.88,370.89 250.98,373.64 251.09,376.36 251.22,379.04 251.36,381.69 251.52,384.30 251.70,386.89 251.88,389.45 252.08,391.98 252.30,394.48 252.52,396.95 252.76,399.40 253.01,401.82 253.26,404.21 253.53,406.58 253.81,408.92 254.10,411.25 254.40,413.54 254.70,415.82 255.02,418.07 255.34,420.30 255.67,422.51 256.01,424.70 256.36,426.87 256.71,429.02 257.07,431.15 257.44,433.26 257.81,435.35 258.19,437.42 258.57,439.48 258.96,441.51 259.35,443.54 259.75,445.54 260.16,447.53 260.57,449.50 260.98,451.45 261.40,453.39 261.83,455.31 262.27,457.20 262.72,459.09 263.17,460.95 263.63,462.79 264.09,464.62 264.57,466.43 265.04,468.23 265.53,470.01 266.02,471.77 266.51,473.52 267.01,475.25 267.52,476.97 268.03,478.67 268.54,480.36 269.06,482.04 269.59,483.70 270.12,485.34 270.65,486.98 271.19,488.60 271.73,490.21 272.27,491.80 272.82,493.39 273.38,494.96 273.93,496.52 274.49,498.06 275.05,499.60 275.62,501.13 276.18,502.64 276.75,504.14 277.33,505.63 277.90,507.11 278.48,508.58 279.06,510.04 279.64,511.49 280.23,512.93 280.82,514.36 281.40,515.79 282.00,517.20 282.59,518.60 283.18,519.99 283.78,521.38 284.38,522.75 284.98,524.12 285.58,525.48 286.18,526.83 286.78,528.17 287.38,529.50 287.99,530.82 288.60,532.14 289.21,533.44 289.83,534.74 290.44,536.03 291.06,537.31 291.68,538.58 292.30,539.84 292.93,541.09 293.55,542.33 294.18,543.57 294.81,544.80 295.44,546.02 296.08,547.23 296.71,548.43 297.35,549.63 297.99,550.82 298.63,552.00 299.27,553.18 299.91,554.35 300.55,555.51 301.20,556.66 301.84,557.81 302.49,558.95 303.14,560.08 303.79,561.21 304.43,562.33 305.08,563.44 305.74,564.55 306.39,565.65 307.04,566.74 307.69,567.83 308.35,568.92 309.00,569.99 309.65,571.07 310.31,572.13 310.96,573.19 311.62,574.25 312.28,575.30 312.93,576.34 313.59,577.38 314.24,578.41 314.90,579.44 315.56,580.46 316.22,581.48 316.87,582.50 317.53,583.50 318.19,584.51 318.84,585.51 319.50,586.50 320.16,587.49 320.82,588.47 321.47,589.45 322.13,590.43 322.79,591.40 323.45,592.36 324.11,593.32 324.77,594.28 325.43,595.23 326.09,596.18 326.75,597.12 327.41,598.05 328.07,598.99 328.73,599.91 329.39,600.84 330.05,601.76 330.71,602.67 331.37,603.58 332.03,604.48 332.69,605.39 333.36,606.28 334.02,607.17 334.68,608.06 335.34,608.95 336.01,609.82 336.67,610.70 337.33,611.57 338.00,612.44 338.66,613.30 339.33,614.16 339.99,615.01 340.66,615.86 341.32,616.71 341.99,617.55 342.65,618.39 343.32,619.22 343.98,620.05 344.65,620.88 345.31,621.70 345.98,622.52 346.65,623.34 347.31,624.15 347.98,624.96 348.65,625.76 349.31,626.56 349.98,627.35 350.65,628.15 351.32,628.93 351.99,629.72 352.65,630.50 353.32,631.28 353.99,632.05 354.66,632.82 355.33,633.59 356.00,634.35 356.67,635.11 357.34,635.86 358.01,636.62 358.68,637.36 359.35,638.11 360.02,638.85 360.69,639.59 361.36,640.33 362.03,641.06 362.71,641.79 363.38,642.51 364.05,643.23 364.72,643.95 365.39,644.67 366.06,645.38 366.73,646.09 367.40,646.80 368.07,647.50 368.74,648.20 369.41,648.90 370.08,649.60 370.75,650.29 371.42,650.98 372.09,651.67 372.76,652.35 373.43,653.03 374.10,653.71 374.77,654.39 375.44,655.06 376.11,655.73 376.78,656.40 377.44,657.06 378.11,657.73 378.78,658.39 379.45,659.05 380.11,659.70 380.78,660.36 381.44,661.01 382.11,661.66 382.78,662.30 383.44,662.95 384.10,663.59 384.77,664.23 385.43,664.86 386.09,665.50 386.76,666.13 387.42,666.76 388.08,667.39 388.74,668.01 389.41,668.64 390.07,669.26 390.73,669.87 391.39,670.49 392.06,671.10 392.72,671.71 393.38,672.32 394.04,672.93 394.70,673.53 395.36,674.13 396.02,674.73 396.68,675.33 397.34,675.92 398.00,676.51 398.66,677.10 399.32,677.69 399.98,678.28 400.64,678.86 401.30,679.44 401.96,680.03 402.61,680.60 403.27,681.18 403.93,681.75 404.58,682.33 405.24,682.90 405.89,683.47 406.55,684.03 407.20,684.60 407.85,685.16 408.51,685.73 409.16,686.29 409.81,686.84 410.46,687.40 411.11,687.96 411.76,688.51 412.41,689.06 413.06,689.61 413.71,690.16 414.35,690.71 415.00,691.26 415.65,691.80 416.29,692.34 416.94,692.88 417.58,693.42 418.22,693.96 418.87,694.50 419.51,695.04 420.15,695.57 420.79,696.10 421.43,696.64 422.07,697.17 422.70,697.70 423.34,698.23 423.97,698.75 424.61,699.28 425.24,699.81 425.88,700.33 426.51,700.85 427.14,701.37 427.77,701.89 428.41,702.41 429.04,702.93 429.67,703.44 430.30,703.95 430.93,704.47 431.55,704.98 432.18,705.49 432.81,705.99 433.44,706.50 434.07,707.00 434.69,707.50 435.32,708.01 435.95,708.50 436.57,709.00 437.20,709.50 437.83,709.99 438.45,710.48 439.08,710.98 439.70,711.46 440.33,711.95 440.95,712.44 441.58,712.92 442.21,713.40 442.83,713.88 443.46,714.36 444.08,714.84 444.71,715.31 445.33,715.79 445.96,716.26 446.58,716.73 447.21,717.19 447.84,717.66 448.46,718.12 449.09,718.58 449.72,719.04 450.34,719.50 450.97,719.96 451.60,720.41 452.22,720.86 452.85,721.31 453.48,721.76 454.10,722.21 454.73,722.66 455.36,723.10 455.98,723.55 456.61,723.99 457.23,724.43 457.86,724.87 458.48,725.30 459.11,725.74 459.73,726.17 460.36,726.61 460.98,727.04 461.61,727.47 462.23,727.90 462.86,728.32 463.48,728.75 464.10,729.17 464.73,729.60 465.35,730.02 465.97,730.44 466.60,730.86 467.22,731.27 467.84,731.69 468.47,732.10 469.09,732.52 469.71,732.93 470.33,733.34 470.96,733.75 471.58,734.16 472.20,734.56 472.82,734.97 473.44,735.37 474.06,735.77 474.68,736.17 475.30,736.57 475.92,736.97 476.54,737.37 477.16,737.76 477.78,738.16 478.40,738.55 479.02,738.94 479.64,739.34 480.26,739.72 480.88,740.11 481.50,740.50 482.12,740.89 482.74,741.27 483.35,741.65 483.97,742.04 484.59,742.42 485.21,742.80 485.83,743.17 486.44,743.55 487.06,743.93 487.68,744.30 488.29,744.68 488.91,745.05 489.52,745.42 490.14,745.79 490.76,746.16 491.37,746.53 491.99,746.90 492.60,747.26 493.22,747.63 493.83,747.99 494.44,748.35 495.06,748.71 495.67,749.07 496.29,749.43" fill="none" stroke="#8b0000" stroke-width="1" /><polyline points="354.73,50.50 351.42,59.15 348.26,67.59 345.24,75.80 342.35,83.82 339.59,91.64 336.96,99.27 334.44,106.72 332.03,114.00 329.73,121.12 327.53,128.07 325.43,134.87 323.41,141.53 321.49,148.04 319.66,154.42 317.90,160.66 316.22,166.78 314.62,172.77 313.09,178.64 311.63,184.40 310.23,190.05 308.90,195.60 307.64,201.03 306.43,206.37 305.27,211.61 304.18,216.76 303.13,221.81 302.14,226.78 301.19,231.66 300.30,236.46 299.45,241.17 298.64,245.81 297.88,250.37 297.15,254.86 296.47,259.27 295.83,263.62 295.22,267.90 294.65,272.10 294.12,276.25 293.61,280.33 293.15,284.35 292.71,288.31 292.30,292.21 291.93,296.06 291.58,299.85 291.26,303.59 290.97,307.27 290.70,310.90 290.46,314.48 290.24,318.02 290.05,321.50 289.89,324.93 289.75,328.32 289.65,331.65 289.57,334.93 289.51,338.16 289.49,341.35 289.48,344.49 289.50,347.58 289.55,350.63 289.61,353.64 289.69,356.62 289.80,359.55 289.92,362.44 290.07,365.29 290.23,368.11 290.41,370.89 290.60,373.64 290.81,376.36 291.03,379.04 291.27,381.69 291.53,384.30 291.80,386.89 292.08,389.45 292.37,391.98 292.68,394.48 292.99,396.95 293.32,399.40 293.66,401.82 294.01,404.21 294.37,406.58 294.73,408.92 295.11,411.25 295.50,413.54 295.89,415.82 296.30,418.07 296.71,420.30 297.12,422.51 297.55,424.70 297.98,426.87 298.42,429.02 298.86,431.15 299.31,433.26 299.77,435.35 300.23,437.42 300.70,439.48 301.17,441.51 301.65,443.54 302.13,445.54 302.61,447.53 303.10,449.50 303.60,451.45 304.10,453.39 304.61,455.31 305.13,457.20 305.65,459.09 306.19,460.95 306.72,462.79 307.27,464.62 307.82,466.43 308.37,468.23 308.93,470.01 309.50,471.77 310.07,473.52 310.65,475.25 311.23,476.97 311.82,478.67 312.41,480.36 313.00,482.04 313.60,483.70 314.20,485.34 314.81,486.98 315.42,488.60 316.04,490.21 316.65,491.80 317.28,493.39 317.90,494.96 318.53,496.52 319.16,498.06 319.79,499.60 320.43,501.13 321.07,502.64 321.71,504.14 322.35,505.63 323.00,507.11 323.64,508.58 324.29,510.04 324.95,511.49 325.60,512.93 326.26,514.36 326.91,515.79 327.57,517.20 328.23,518.60 328.90,519.99 329.56,521.38 330.22,522.75 330.89,524.12 331.56,525.48 332.23,526.83 332.90,528.17 333.57,529.50 334.24,530.82 334.91,532.14 335.59,533.44 336.27,534.74 336.95,536.03 337.63,537.31 338.32,538.58 339.00,539.84 339.69,541.09 340.38,542.33 341.07,543.57 341.77,544.80 342.46,546.02 343.16,547.23 343.86,548.43 344.56,549.63 345.26,550.82 345.96,552.00 346.66,553.18 347.37,554.35 348.07,555.51 348.78,556.66 349.48,557.81 350.19,558.95 350.90,560.08 351.61,561.21 352.32,562.33 353.03,563.44 353.74,564.55 354.45,565.65 355.16,566.74 355.87,567.83 356.59,568.92 357.30,569.99 358.01,571.07 358.73,572.13 359.44,573.19 360.15,574.25 360.87,575.30 361.58,576.34 362.30,577.38 363.01,578.41 363.72,579.44 364.44,580.46 365.15,581.48 365.87,582.50 366.58,583.50 367.30,584.51 368.01,585.51 368.72,586.50 369.44,587.49 370.15,588.47 370.86,589.45 371.58,590.43 372.29,591.40 373.00,592.36 373.72,593.32 374.43,594.28 375.15,595.23 375.86,596.18 376.58,597.12 377.29,598.05 378.00,598.99 378.72,599.91 379.43,600.84 380.15,601.76 380.86,602.67 381.58,603.58 382.29,604.48 383.01,605.39 383.72,606.28 384.44,607.17 385.16,608.06 385.87,608.95 386.59,609.82 387.30,610.70 388.02,611.57 388.73,612.44 389.45,613.30 390.17,614.16 390.88,615.01 391.60,615.86 392.32,616.71 393.03,617.55 393.75,618.39 394.47,619.22 395.18,620.05 395.90,620.88 396.62,621.70 397.33,622.52 398.05,623.34 398.77,624.15 399.48,624.96 400.20,625.76 400.92,626.56 401.64,627.35 402.35,628.15 403.07,628.93 403.79,629.72 404.51,630.50 405.22,631.28 405.94,632.05 406.66,632.82 407.38,633.59 408.10,634.35 408.82,635.11 409.53,635.86 410.25,636.62 410.97,637.36 411.69,638.11 412.41,638.85 413.13,639.59 413.85,640.33 414.57,641.06 415.29,641.79 416.00,642.51 416.72,643.23 417.44,643.95 418.16,644.67 418.88,645.38 419.60,646.09 420.31,646.80 421.03,647.50 421.75,648.20 422.47,648.90 423.18,649.60 423.90,650.29 424.62,650.98 425.33,651.67 426.05,652.35 426.76,653.03 427.48,653.71 428.19,654.39 428.91,655.06 429.62,655.73 430.34,656.40 431.05,657.06 431.76,657.73 432.47,658.39 433.19,659.05 433.90,659.70 434.61,660.36 435.32,661.01 436.03,661.66 436.74,662.30 437.45,662.95 438.16,663.59 438.87,664.23 439.57,664.86 440.28,665.50 440.99,666.13 441.70,666.76 442.40,667.39 443.11,668.01 443.81,668.64 444.52,669.26 445.23,669.87 445.93,670.49 446.64,671.10 447.34,671.71 448.05,672.32 448.75,672.93 449.46,673.53 450.16,674.13 450.86,674.73 451.57,675.33 452.27,675.92 452.97,676.51 453.68,677.10 454.38,677.69 455.08,678.28 455.78,678.86 456.48,679.44 457.18,680.03 457.88,680.60 458.58,681.18 459.28,681.75 459.97,682.33 460.67,682.90 461.37,683.47 462.06,684.03 462.76,684.60 463.45,685.16 464.15,685.73 464.84,686.29 465.53,686.84 466.23,687.40 466.92,687.96 467.61,688.51 468.30,689.06 468.99,689.61 469.68,690.16 470.36,690.71 471.05,691.26 471.74,691.80 472.42,692.34 473.11,692.88 473.79,693.42 474.48,693.96 475.16,694.50 475.84,695.04 476.52,695.57 477.20,696.10 477.88,696.64 478.56,697.17 479.24,697.70 479.91,698.23 480.59,698.75 481.26,699.28 481.94,699.81 482.61,700.33 483.28,700.85 483.95,701.37 484.62,701.89 485.30,702.41 485.96,702.93 486.63,703.44 487.30,703.95 487.97,704.47 488.64,704.98 489.31,705.49 489.97,705.99 490.64,706.50 491.31,707.00 491.97,707.50 492.64,708.01 493.30,708.50 493.97,709.00 494.63,709.50 495.30,709.99 495.96,710.48 496.62,710.98 497.29,711.46 497.95,711.95 498.61,712.44 499.28,712.92 499.94,713.40 500.60,713.88 501.27,714.36 501.93,714.84 502.59,715.31 503.26,715.79 503.92,716.26 504.58,716.73 505.25,717.19 505.91,717.66 506.57,718.12 507.24,718.58 507.90,719.04 508.56,719.50 509.23,719.96 509.89,720.41 510.56,720.86 511.22,721.31 511.88,721.76 512.54,722.21 513.21,722.66 513.87,723.10 514.53,723.55 515.19,723.99 515.86,724.43 516.52,724.87 517.18,725.30 517.84,725.74 518.50,726.17 519.16,726.61 519.82,727.04 520.48,727.47 521.14,727.90 521.80,728.32 522.46,728.75 523.12,729.17 523.78,729.60 524.44,730.02 525.10,730.44 525.76,730.86 526.42,731.27 527.08,731.69 527.74,732.10 528.39,732.52 529.05,732.93 529.71,733.34 530.37,733.75 531.02,734.16 531.68,734.56 532.34,734.97 532.99,735.37 533.65,735.77 534.30,736.17 534.96,736.57 535.61,736.97 536.27,737.37 536.92,737.76 537.58,738.16 538.23,738.55 538.89,738.94 539.54,739.34 540.19,739.72 540.85,740.11 541.50,740.50 542.15,740.89 542.81,741.27 543.46,741.65 544.11,742.04 544.76,742.42 545.41,742.80 546.06,743.17 546.72,743.55 547.37,743.93 548.02,744.30 548.67,744.68 549.32,745.05 549.97,745.42 550.62,745.79 551.26,746.16 551.91,746.53 552.56,746.90 553.21,747.26 553.86,747.63 554.51,747.99 555.15,748.35 555.80,748.71 556.45,749.07 557.10,749.43" fill="none" stroke="#8b0000" stroke-width="1" /><polyline points="385.80,50.50 382.67,59.15 379.68,67.59 376.84,75.80 374.12,83.82 371.53,91.64 369.06,99.27 366.70,106.72 364.46,114.00 362.31,121.12 360.27,128.07 358.32,134.87 356.46,141.53 354.69,148.04 353.00,154.42 351.40,160.66 349.87,166.78 348.41,172.77 347.02,178.64 345.70,184.40 344.45,190.05 343.26,195.60 342.13,201.03 341.05,206.37 340.03,211.61 339.07,216.76 338.16,221.81 337.30,226.78 336.48,231.66 335.71,236.46 334.99,241.17 334.31,245.81 333.67,250.37 333.07,254.86 332.51,259.27 331.99,263.62 331.51,267.90 331.06,272.10 330.64,276.25 330.26,280.33 329.91,284.35 329.59,288.31 329.29,292.21 329.03,296.06 328.80,299.85 328.59,303.59 328.41,307.27 328.26,310.90 328.13,314.48 328.02,318.02 327.94,321.50 327.88,324.93 327.85,328.32 327.85,331.65 327.88,334.93 327.93,338.16 328.01,341.35 328.11,344.49 328.23,347.58 328.37,350.63 328.54,353.64 328.73,356.62 328.93,359.55 329.15,362.44 329.40,365.29 329.65,368.11 329.93,370.89 330.22,373.64 330.53,376.36 330.85,379.04 331.18,381.69 331.53,384.30 331.89,386.89 332.27,389.45 332.66,391.98 333.05,394.48 333.46,396.95 333.88,399.40 334.31,401.82 334.75,404.21 335.20,406.58 335.66,408.92 336.12,411.25 336.60,413.54 337.08,415.82 337.57,418.07 338.07,420.30 338.57,422.51 339.08,424.70 339.60,426.87 340.12,429.02 340.65,431.15 341.19,433.26 341.73,435.35 342.27,437.42 342.82,439.48 343.38,441.51 343.94,443.54 344.50,445.54 345.07,447.53 345.64,449.50 346.22,451.45 346.80,453.39 347.39,455.31 347.99,457.20 348.59,459.09 349.20,460.95 349.82,462.79 350.44,464.62 351.07,466.43 351.70,468.23 352.34,470.01 352.98,471.77 353.63,473.52 354.28,475.25 354.94,476.97 355.60,478.67 356.27,480.36 356.94,482.04 357.61,483.70 358.29,485.34 358.97,486.98 359.65,488.60 360.34,490.21 361.03,491.80 361.73,493.39 362.42,494.96 363.12,496.52 363.83,498.06 364.53,499.60 365.24,501.13 365.95,502.64 366.66,504.14 367.37,505.63 368.09,507.11 368.81,508.58 369.53,510.04 370.25,511.49 370.97,512.93 371.70,514.36 372.42,515.79 373.15,517.20 373.88,518.60 374.61,519.99 375.34,521.38 376.07,522.75 376.81,524.12 377.54,525.48 378.27,526.83 379.01,528.17 379.75,529.50 380.48,530.82 381.22,532.14 381.97,533.44 382.71,534.74 383.46,536.03 384.20,537.31 384.95,538.58 385.70,539.84 386.46,541.09 387.21,542.33 387.97,543.57 388.72,544.80 389.48,546.02 390.24,547.23 391.00,548.43 391.76,549.63 392.53,550.82 393.29,552.00 394.06,553.18 394.82,554.35 395.59,555.51 396.35,556.66 397.12,557.81 397.89,558.95 398.66,560.08 399.43,561.21 400.20,562.33 400.97,563.44 401.74,564.55 402.51,565.65 403.28,566.74 404.05,567.83 404.83,568.92 405.60,569.99 406.37,571.07 407.14,572.13 407.91,573.19 408.69,574.25 409.46,575.30 410.23,576.34 411.00,577.38 411.78,578.41 412.55,579.44 413.32,580.46 414.09,581.48 414.86,582.50 415.63,583.50 416.40,584.51 417.17,585.51 417.94,586.50 418.71,587.49 419.48,588.47 420.25,589.45 421.02,590.43 421.79,591.40 422.56,592.36 423.33,593.32 424.10,594.28 424.87,595.23 425.64,596.18 426.41,597.12 427.17,598.05 427.94,598.99 428.71,599.91 429.48,600.84 430.25,601.76 431.02,602.67 431.79,603.58 432.56,604.48 433.32,605.39 434.09,606.28 434.86,607.17 435.63,608.06 436.40,608.95 437.17,609.82 437.93,610.70 438.70,611.57 439.47,612.44 440.24,613.30 441.01,614.16 441.78,615.01 442.54,615.86 443.31,616.71 444.08,617.55 444.85,618.39 445.61,619.22 446.38,620.05 447.15,620.88 447.92,621.70 448.69,622.52 449.45,623.34 450.22,624.15 450.99,624.96 451.76,625.76 452.52,626.56 453.29,627.35 454.06,628.15 454.82,628.93 455.59,629.72 456.36,630.50 457.13,631.28 457.89,632.05 458.66,632.82 459.43,633.59 460.20,634.35 460.96,635.11 461.73,635.86 462.50,636.62 463.26,637.36 464.03,638.11 464.80,638.85 465.57,639.59 466.33,640.33 467.10,641.06 467.87,641.79 468.63,642.51 469.40,643.23 470.16,643.95 470.93,644.67 471.70,645.38 472.46,646.09 473.22,646.80 473.99,647.50 474.75,648.20 475.52,648.90 476.28,649.60 477.04,650.29 477.81,650.98 478.57,651.67 479.33,652.35 480.09,653.03 480.85,653.71 481.61,654.39 482.38,655.06 483.14,655.73 483.89,656.40 484.65,657.06 485.41,657.73 486.17,658.39 486.93,659.05 487.68,659.70 488.44,660.36 489.20,661.01 489.95,661.66 490.70,662.30 491.46,662.95 492.21,663.59 492.96,664.23 493.72,664.86 494.47,665.50 495.22,666.13 495.97,666.76 496.72,667.39 497.47,668.01 498.22,668.64 498.97,669.26 499.72,669.87 500.47,670.49 501.22,671.10 501.97,671.71 502.72,672.32 503.46,672.93 504.21,673.53 504.96,674.13 505.71,674.73 506.45,675.33 507.20,675.92 507.94,676.51 508.69,677.10 509.43,677.69 510.18,678.28 510.92,678.86 511.66,679.44 512.40,680.03 513.14,680.60 513.89,681.18 514.63,681.75 515.37,682.33 516.10,682.90 516.84,683.47 517.58,684.03 518.32,684.60 519.05,685.16 519.79,685.73 520.52,686.29 521.26,686.84 521.99,687.40 522.72,687.96 523.46,688.51 524.19,689.06 524.92,689.61 525.65,690.16 526.38,690.71 527.10,691.26 527.83,691.80 528.56,692.34 529.28,692.88 530.01,693.42 530.73,693.96 531.45,694.50 532.18,695.04 532.90,695.57 533.62,696.10 534.34,696.64 535.05,697.17 535.77,697.70 536.49,698.23 537.20,698.75 537.92,699.28 538.63,699.81 539.34,700.33 540.05,700.85 540.76,701.37 541.47,701.89 542.18,702.41 542.89,702.93 543.60,703.44 544.31,703.95 545.02,704.47 545.72,704.98 546.43,705.49 547.14,705.99 547.84,706.50 548.54,707.00 549.25,707.50 549.95,708.01 550.66,708.50 551.36,709.00 552.06,709.50 552.77,709.99 553.47,710.48 554.17,710.98 554.87,711.46 555.57,711.95 556.27,712.44 556.98,712.92 557.68,713.40 558.38,713.88 559.08,714.36 559.78,714.84 560.48,715.31 561.18,715.79 561.88,716.26 562.58,716.73 563.28,717.19 563.98,717.66 564.68,718.12 565.38,718.58 566.08,719.04 566.79,719.50 567.49,719.96 568.19,720.41 568.89,720.86 569.59,721.31 570.29,721.76 570.99,722.21 571.69,722.66 572.38,723.10 573.08,723.55 573.78,723.99 574.48,724.43 575.18,724.87 575.88,725.30 576.57,725.74 577.27,726.17 577.97,726.61 578.66,727.04 579.36,727.47 580.06,727.90 580.75,728.32 581.45,728.75 582.14,729.17 582.84,729.60 583.53,730.02 584.23,730.44 584.92,730.86 585.62,731.27 586.31,731.69 587.00,732.10 587.70,732.52 588.39,732.93 589.08,733.34 589.78,733.75 590.47,734.16 591.16,734.56 591.85,734.97 592.54,735.37 593.23,735.77 593.92,736.17 594.61,736.57 595.30,736.97 595.99,737.37 596.68,737.76 597.37,738.16 598.06,738.55 598.75,738.94 599.44,739.34 600.13,739.72 600.81,740.11 601.50,740.50 602.19,740.89 602.87,741.27 603.56,741.65 604.25,742.04 604.93,742.42 605.62,742.80 606.30,743.17 606.99,743.55 607.67,743.93 608.36,744.30 609.04,744.68 609.72,745.05 610.41,745.42 611.09,745.79 611.77,746.16 612.46,746.53 613.14,746.90 613.82,747.26 614.50,747.63 615.18,747.99 615.86,748.35 616.54,748.71 617.22,749.07 617.90,749.43" fill="none" stroke="#8b0000" stroke-width="1" /><polyline points="416.88,50.50 413.92,59.15 411.11,67.59 408.44,75.80 405.89,83.82 403.47,91.64 401.16,99.27 398.97,106.72 396.88,114.00 394.90,121.12 393.01,128.07 391.21,134.87 389.51,141.53 387.89,148.04 386.35,154.42 384.89,160.66 383.51,166.78 382.20,172.77 380.95,178.64 379.78,184.40 378.66,190.05 377.61,195.60 376.62,201.03 375.68,206.37 374.80,211.61 373.97,216.76 373.19,221.81 372.45,226.78 371.77,231.66 371.13,236.46 370.54,241.17 369.98,245.81 369.47,250.37 368.99,254.86 368.56,259.27 368.16,263.62 367.79,267.90 367.46,272.10 367.17,276.25 366.90,280.33 366.67,284.35 366.46,288.31 366.29,292.21 366.14,296.06 366.02,299.85 365.92,303.59 365.86,307.27 365.81,310.90 365.79,314.48 365.80,318.02 365.82,321.50 365.87,324.93 365.95,328.32 366.06,331.65 366.19,334.93 366.35,338.16 366.53,341.35 366.73,344.49 366.96,347.58 367.20,350.63 367.47,353.64 367.76,356.62 368.06,359.55 368.38,362.44 368.72,365.29 369.08,368.11 369.45,370.89 369.84,373.64 370.25,376.36 370.66,379.04 371.09,381.69 371.54,384.30 371.99,386.89 372.46,389.45 372.94,391.98 373.43,394.48 373.93,396.95 374.44,399.40 374.96,401.82 375.49,404.21 376.03,406.58 376.58,408.92 377.13,411.25 377.70,413.54 378.27,415.82 378.85,418.07 379.43,420.30 380.02,422.51 380.62,424.70 381.22,426.87 381.83,429.02 382.45,431.15 383.06,433.26 383.69,435.35 384.32,437.42 384.95,439.48 385.59,441.51 386.23,443.54 386.88,445.54 387.52,447.53 388.18,449.50 388.83,451.45 389.50,453.39 390.17,455.31 390.85,457.20 391.53,459.09 392.22,460.95 392.91,462.79 393.61,464.62 394.32,466.43 395.03,468.23 395.74,470.01 396.46,471.77 397.19,473.52 397.92,475.25 398.65,476.97 399.39,478.67 400.13,480.36 400.87,482.04 401.62,483.70 402.37,485.34 403.13,486.98 403.89,488.60 404.65,490.21 405.41,491.80 406.18,493.39 406.95,494.96 407.72,496.52 408.49,498.06 409.27,499.60 410.05,501.13 410.83,502.64 411.61,504.14 412.40,505.63 413.18,507.11 413.97,508.58 414.76,510.04 415.55,511.49 416.34,512.93 417.14,514.36 417.93,515.79 418.73,517.20 419.52,518.60 420.32,519.99 421.12,521.38 421.92,522.75 422.72,524.12 423.52,525.48 424.32,526.83 425.12,528.17 425.93,529.50 426.73,530.82 427.54,532.14 428.34,533.44 429.15,534.74 429.96,536.03 430.78,537.31 431.59,538.58 432.41,539.84 433.22,541.09 434.04,542.33 434.86,543.57 435.68,544.80 436.50,546.02 437.32,547.23 438.15,548.43 438.97,549.63 439.80,550.82 440.62,552.00 441.45,553.18 442.28,554.35 443.10,555.51 443.93,556.66 444.76,557.81 445.59,558.95 446.42,560.08 447.25,561.21 448.08,562.33 448.91,563.44 449.74,564.55 450.57,565.65 451.40,566.74 452.23,567.83 453.07,568.92 453.90,569.99 454.73,571.07 455.56,572.13 456.39,573.19 457.22,574.25 458.05,575.30 458.88,576.34 459.71,577.38 460.54,578.41 461.37,579.44 462.20,580.46 463.03,581.48 463.86,582.50 464.68,583.50 465.51,584.51 466.34,585.51 467.16,586.50 467.99,587.49 468.82,588.47 469.64,589.45 470.47,590.43 471.29,591.40 472.12,592.36 472.94,593.32 473.76,594.28 474.59,595.23 475.41,596.18 476.24,597.12 477.06,598.05 477.88,598.99 478.71,599.91 479.53,600.84 480.35,601.76 481.17,602.67 482.00,603.58 482.82,604.48 483.64,605.39 484.46,606.28 485.28,607.17 486.10,608.06 486.92,608.95 487.75,609.82 488.57,610.70 489.39,611.57 490.21,612.44 491.03,613.30 491.85,614.16 492.67,615.01 493.49,615.86 494.31,616.71 495.13,617.55 495.94,618.39 496.76,619.22 497.58,620.05 498.40,620.88 499.22,621.70 500.04,622.52 500.86,623.34 501.67,624.15 502.49,624.96 503.31,625.76 504.13,626.56 504.94,627.35 505.76,628.15 506.58,628.93 507.39,629.72 508.21,630.50 509.03,631.28 509.84,632.05 510.66,632.82 511.48,633.59 512.29,634.35 513.11,635.11 513.93,635.86 514.74,636.62 515.56,637.36 516.37,638.11 517.19,638.85 518.00,639.59 518.82,640.33 519.63,641.06 520.45,641.79 521.26,642.51 522.07,643.23 522.89,643.95 523.70,644.67 524.51,645.38 525.32,646.09 526.14,646.80 526.95,647.50 527.76,648.20 528.57,648.90 529.38,649.60 530.19,650.29 531.00,650.98 531.81,651.67 532.62,652.35 533.42,653.03 534.23,653.71 535.04,654.39 535.84,655.06 536.65,655.73 537.45,656.40 538.26,657.06 539.06,657.73 539.86,658.39 540.67,659.05 541.47,659.70 542.27,660.36 543.07,661.01 543.87,661.66 544.67,662.30 545.47,662.95 546.27,663.59 547.06,664.23 547.86,664.86 548.66,665.50 549.45,666.13 550.25,666.76 551.04,667.39 551.83,668.01 552.63,668.64 553.42,669.26 554.22,669.87 555.01,670.49 555.80,671.10 556.59,671.71 557.38,672.32 558.18,672.93 558.97,673.53 559.76,674.13 560.55,674.73 561.34,675.33 562.12,675.92 562.91,676.51 563.70,677.10 564.49,677.69 565.27,678.28 566.06,678.86 566.84,679.44 567.63,680.03 568.41,680.60 569.19,681.18 569.98,681.75 570.76,682.33 571.54,682.90 572.32,683.47 573.10,684.03 573.88,684.60 574.65,685.16 575.43,685.73 576.21,686.29 576.98,686.84 577.76,687.40 578.53,687.96 579.30,688.51 580.08,689.06 580.85,689.61 581.62,690.16 582.39,690.71 583.16,691.26 583.92,691.80 584.69,692.34 585.46,692.88 586.22,693.42 586.99,693.96 587.75,694.50 588.51,695.04 589.27,695.57 590.03,696.10 590.79,696.64 591.55,697.17 592.30,697.70 593.06,698.23 593.82,698.75 594.57,699.28 595.32,699.81 596.07,700.33 596.83,700.85 597.58,701.37 598.33,701.89 599.07,702.41 599.82,702.93 600.57,703.44 601.32,703.95 602.06,704.47 602.81,704.98 603.55,705.49 604.30,705.99 605.04,706.50 605.78,707.00 606.53,707.50 607.27,708.01 608.01,708.50 608.75,709.00 609.49,709.50 610.23,709.99 610.97,710.48 611.72,710.98 612.45,711.46 613.19,711.95 613.93,712.44 614.67,712.92 615.41,713.40 616.15,713.88 616.89,714.36 617.63,714.84 618.36,715.31 619.10,715.79 619.84,716.26 620.58,716.73 621.32,717.19 622.05,717.66 622.79,718.12 623.53,718.58 624.27,719.04 625.01,719.50 625.74,719.96 626.48,720.41 627.22,720.86 627.96,721.31 628.69,721.76 629.43,722.21 630.16,722.66 630.90,723.10 631.63,723.55 632.37,723.99 633.10,724.43 633.84,724.87 634.57,725.30 635.31,725.74 636.04,726.17 636.77,726.61 637.51,727.04 638.24,727.47 638.97,727.90 639.70,728.32 640.43,728.75 641.16,729.17 641.90,729.60 642.63,730.02 643.36,730.44 644.09,730.86 644.82,731.27 645.54,731.69 646.27,732.10 647.00,732.52 647.73,732.93 648.46,733.34 649.19,733.75 649.91,734.16 650.64,734.56 651.37,734.97 652.09,735.37 652.82,735.77 653.54,736.17 654.27,736.57 654.99,736.97 655.72,737.37 656.44,737.76 657.16,738.16 657.89,738.55 658.61,738.94 659.33,739.34 660.06,739.72 660.78,740.11 661.50,740.50" fill="none" stroke="#8b0000" stroke-width="1" /><polyline points="447.96,50.50 445.18,59.15 442.54,67.59 440.03,75.80 437.66,83.82 435.40,91.64 433.26,99.27 431.23,106.72 429.30,114.00 427.48,121.12 425.75,128.07 424.11,134.87 422.56,141.53 421.09,148.04 419.70,154.42 418.39,160.66 417.15,166.78 415.98,172.77 414.88,178.64 413.85,184.40 412.88,190.05 411.96,195.60 411.11,201.03 410.31,206.37 409.56,211.61 408.86,216.76 408.21,221.81 407.61,226.78 407.06,231.66 406.55,236.46 406.08,241.17 405.65,245.81 405.26,250.37 404.91,254.86 404.60,259.27 404.32,263.62 404.08,267.90 403.87,272.10 403.69,276.25 403.54,280.33 403.43,284.35 403.34,288.31 403.28,292.21 403.25,296.06 403.24,299.85 403.26,303.59 403.30,307.27 403.37,310.90 403.46,314.48 403.57,318.02 403.70,321.50 403.86,324.93 404.05,328.32 404.26,331.65 404.50,334.93 404.76,338.16 405.05,341.35 405.35,344.49 405.68,347.58 406.03,350.63 406.40,353.64 406.79,356.62 407.19,359.55 407.61,362.44 408.05,365.29 408.51,368.11 408.98,370.89 409.47,373.64 409.96,376.36 410.48,379.04 411.00,381.69 411.54,384.30 412.09,386.89 412.65,389.45 413.23,391.98 413.81,394.48 414.40,396.95 415.00,399.40 415.62,401.82 416.24,404.21 416.86,406.58 417.50,408.92 418.15,411.25 418.80,413.54 419.46,415.82 420.12,418.07 420.79,420.30 421.47,422.51 422.15,424.70 422.84,426.87 423.54,429.02 424.24,431.15 424.94,433.26 425.65,435.35 426.36,437.42 427.08,439.48 427.80,441.51 428.52,443.54 429.25,445.54 429.98,447.53 430.71,449.50 431.45,451.45 432.20,453.39 432.95,455.31 433.70,457.20 434.47,459.09 435.23,460.95 436.01,462.79 436.79,464.62 437.57,466.43 438.36,468.23 439.15,470.01 439.95,471.77 440.75,473.52 441.55,475.25 442.36,476.97 443.18,478.67 443.99,480.36 444.81,482.04 445.63,483.70 446.46,485.34 447.29,486.98 448.12,488.60 448.96,490.21 449.79,491.80 450.63,493.39 451.47,494.96 452.32,496.52 453.16,498.06 454.01,499.60 454.86,501.13 455.71,502.64 456.57,504.14 457.42,505.63 458.28,507.11 459.13,508.58 459.99,510.04 460.85,511.49 461.71,512.93 462.58,514.36 463.44,515.79 464.30,517.20 465.17,518.60 466.03,519.99 466.90,521.38 467.77,522.75 468.63,524.12 469.50,525.48 470.37,526.83 471.24,528.17 472.11,529.50 472.98,530.82 473.85,532.14 474.72,533.44 475.60,534.74 476.47,536.03 477.35,537.31 478.23,538.58 479.11,539.84 479.99,541.09 480.87,542.33 481.75,543.57 482.64,544.80 483.52,546.02 484.41,547.23 485.29,548.43 486.18,549.63 487.07,550.82 487.95,552.00 488.84,553.18 489.73,554.35 490.62,555.51 491.51,556.66 492.40,557.81 493.29,558.95 494.18,560.08 495.07,561.21 495.96,562.33 496.85,563.44 497.74,564.55 498.63,565.65 499.53,566.74 500.42,567.83 501.31,568.92 502.20,569.99 503.09,571.07 503.98,572.13 504.87,573.19 505.75,574.25 506.64,575.30 507.53,576.34 508.42,577.38 509.31,578.41 510.19,579.44 511.08,580.46 511.97,581.48 512.85,582.50 513.73,583.50 514.62,584.51 515.50,585.51 516.38,586.50 517.27,587.49 518.15,588.47 519.03,589.45 519.91,590.43 520.79,591.40 521.67,592.36 522.55,593.32 523.43,594.28 524.31,595.23 525.19,596.18 526.07,597.12 526.94,598.05 527.82,598.99 528.70,599.91 529.57,600.84 530.45,601.76 531.33,602.67 532.20,603.58 533.08,604.48 533.95,605.39 534.83,606.28 535.70,607.17 536.58,608.06 537.45,608.95 538.32,609.82 539.20,610.70 540.07,611.57 540.94,612.44 541.82,613.30 542.69,614.16 543.56,615.01 544.43,615.86 545.30,616.71 546.17,617.55 547.04,618.39 547.91,619.22 548.78,620.05 549.65,620.88 550.52,621.70 551.39,622.52 552.26,623.34 553.13,624.15 554.00,624.96 554.86,625.76 555.73,626.56 556.60,627.35 557.46,628.15 558.33,628.93 559.20,629.72 560.06,630.50 560.93,631.28 561.79,632.05 562.66,632.82 563.53,633.59 564.39,634.35 565.26,635.11 566.12,635.86 566.98,636.62 567.85,637.36 568.71,638.11 569.58,638.85 570.44,639.59 571.30,640.33 572.16,641.06 573.03,641.79 573.89,642.51 574.75,643.23 575.61,643.95 576.47,644.67 577.33,645.38 578.19,646.09 579.05,646.80 579.91,647.50 580.76,648.20 581.62,648.90 582.48,649.60 583.33,650.29 584.19,650.98 585.04,651.67 585.90,652.35 586.75,653.03 587.61,653.71 588.46,654.39 589.31,655.06 590.16,655.73 591.01,656.40 591.86,657.06 592.71,657.73 593.56,658.39 594.41,659.05 595.25,659.70 596.10,660.36 596.95,661.01 597.79,661.66 598.63,662.30 599.48,662.95 600.32,663.59 601.16,664.23 602.00,664.86 602.84,665.50 603.68,666.13 604.52,666.76 605.36,667.39 606.20,668.01 607.04,668.64 607.87,669.26 608.71,669.87 609.55,670.49 610.38,671.10 611.22,671.71 612.05,672.32 612.89,672.93 613.72,673.53 614.55,674.13 615.39,674.73 616.22,675.33 617.05,675.92 617.88,676.51 618.71,677.10 619.54,677.69 620.37,678.28 621.20,678.86 622.02,679.44 622.85,680.03 623.68,680.60 624.50,681.18 625.33,681.75 626.15,682.33 626.97,682.90 627.79,683.47 628.61,684.03 629.43,684.60 630.25,685.16 631.07,685.73 631.89,686.29 632.71,686.84 633.52,687.40 634.34,687.96 635.15,688.51 635.96,689.06 636.78,689.61 637.59,690.16 638.40,690.71 639.21,691.26 640.02,691.80 640.82,692.34 641.63,692.88 642.44,693.42 643.24,693.96 644.04,694.50 644.85,695.04 645.65,695.57 646.45,696.10 647.25,696.64 648.04,697.17 648.84,697.70 649.63,698.23 650.43,698.75 651.22,699.28 652.01,699.81 652.81,700.33 653.60,700.85 654.39,701.37 655.18,701.89 655.96,702.41 656.75,702.93 657.54,703.44 658.32,703.95 659.11,704.47 659.89,704.98 660.68,705.49 661.46,705.99" fill="none" stroke="#8b0000" stroke-width="1" /><polyline points="479.04,50.50 476.43,59.15 473.97,67.59 471.63,75.80 469.43,83.82 467.34,91.64 465.36,99.27 463.49,106.72 461.73,114.00 460.06,121.12 458.49,128.07 457.00,134.87 455.61,141.53 454.29,148.04 453.05,154.42 451.89,160.66 450.80,166.78 449.77,172.77 448.82,178.64 447.92,184.40 447.09,190.05 446.31,195.60 445.60,201.03 444.93,206.37 444.32,211.61 443.76,216.76 443.24,221.81 442.77,226.78 442.35,231.66 441.96,236.46 441.62,241.17 441.32,245.81 441.06,250.37 440.83,254.86 440.64,259.27 440.49,263.62 440.37,267.90 440.28,272.10 440.22,276.25 440.19,280.33 440.19,284.35 440.22,288.31 440.27,292.21 440.35,296.06 440.46,299.85 440.59,303.59 440.75,307.27 440.92,310.90 441.12,314.48 441.35,318.02 441.59,321.50 441.86,324.93 442.15,328.32 442.47,331.65 442.81,334.93 443.18,338.16 443.57,341.35 443.98,344.49 444.41,347.58 444.86,350.63 445.33,353.64 445.82,356.62 446.32,359.55 446.84,362.44 447.38,365.29 447.94,368.11 448.50,370.89 449.09,373.64 449.68,376.36 450.29,379.04 450.91,381.69 451.55,384.30 452.19,386.89 452.85,389.45 453.51,391.98 454.19,394.48 454.87,396.95 455.57,399.40 456.27,401.82 456.98,404.21 457.70,406.58 458.42,408.92 459.16,411.25 459.90,413.54 460.64,415.82 461.40,418.07 462.16,420.30 462.92,422.51 463.69,424.70 464.46,426.87 465.24,429.02 466.03,431.15 466.82,433.26 467.61,435.35 468.41,437.42 469.20,439.48 470.01,441.51 470.81,443.54 471.62,445.54 472.44,447.53 473.25,449.50 474.07,451.45 474.89,453.39 475.73,455.31 476.56,457.20 477.40,459.09 478.25,460.95 479.10,462.79 479.96,464.62 480.82,466.43 481.69,468.23 482.56,470.01 483.43,471.77 484.31,473.52 485.19,475.25 486.07,476.97 486.96,478.67 487.85,480.36 488.75,482.04 489.65,483.70 490.55,485.34 491.45,486.98 492.35,488.60 493.26,490.21 494.17,491.80 495.08,493.39 496.00,494.96 496.91,496.52 497.83,498.06 498.75,499.60 499.67,501.13 500.59,502.64 501.52,504.14 502.44,505.63 503.37,507.11 504.30,508.58 505.23,510.04 506.16,511.49 507.09,512.93 508.02,514.36 508.95,515.79 509.88,517.20 510.81,518.60 511.75,519.99 512.68,521.38 513.62,522.75 514.55,524.12 515.48,525.48 516.42,526.83 517.35,528.17 518.29,529.50 519.22,530.82 520.16,532.14 521.10,533.44 522.04,534.74 522.98,536.03 523.92,537.31 524.86,538.58 525.81,539.84 526.75,541.09 527.70,542.33 528.64,543.57 529.59,544.80 530.54,546.02 531.49,547.23 532.44,548.43 533.39,549.63 534.34,550.82 535.29,552.00 536.24,553.18 537.19,554.35 538.14,555.51 539.09,556.66 540.04,557.81 540.99,558.95 541.94,560.08 542.89,561.21 543.84,562.33 544.80,563.44 545.75,564.55 546.70,565.65 547.65,566.74 548.60,567.83 549.55,568.92 550.50,569.99 551.44,571.07 552.39,572.13 553.34,573.19 554.29,574.25 555.23,575.30 556.18,576.34 557.13,577.38 558.07,578.41 559.02,579.44 559.96,580.46 560.90,581.48 561.84,582.50 562.79,583.50 563.73,584.51 564.67,585.51 565.61,586.50 566.54,587.49 567.48,588.47 568.42,589.45 569.35,590.43 570.29,591.40 571.23,592.36 572.16,593.32 573.10,594.28 574.03,595.23 574.96,596.18 575.90,597.12 576.83,598.05 577.76,598.99 578.69,599.91 579.62,600.84 580.55,601.76 581.48,602.67 582.41,603.58 583.34,604.48 584.27,605.39 585.20,606.28 586.12,607.17 587.05,608.06 587.98,608.95 588.90,609.82 589.83,610.70 590.76,611.57 591.68,612.44 592.60,613.30 593.53,614.16 594.45,615.01 595.37,615.86 596.30,616.71 597.22,617.55 598.14,618.39 599.06,619.22 599.98,620.05 600.90,620.88 601.82,621.70 602.74,622.52 603.66,623.34 604.58,624.15 605.50,624.96 606.42,625.76 607.33,626.56 608.25,627.35 609.17,628.15 610.08,628.93 611.00,629.72 611.92,630.50 612.83,631.28 613.75,632.05 614.66,632.82 615.57,633.59 616.49,634.35 617.40,635.11 618.32,635.86 619.23,636.62 620.14,637.36 621.05,638.11 621.96,638.85 622.88,639.59 623.79,640.33 624.70,641.06 625.61,641.79 626.52,642.51 627.42,643.23 628.33,643.95 629.24,644.67 630.15,645.38 631.05,646.09 631.96,646.80 632.86,647.50 633.77,648.20 634.67,648.90 635.58,649.60 636.48,650.29 637.38,650.98 638.28,651.67 639.18,652.35 640.08,653.03 640.98,653.71 641.88,654.39 642.78,655.06 643.67,655.73 644.57,656.40 645.47,657.06 646.36,657.73 647.25,658.39 648.15,659.05 649.04,659.70 649.93,660.36 650.82,661.01 651.71,661.66 652.60,662.30 653.49,662.95 654.37,663.59 655.26,664.23 656.15,664.86 657.03,665.50 657.91,666.13 658.80,666.76 659.68,667.39 660.56,668.01 661.44,668.64" fill="none" stroke="#8b0000" stroke-width="1" /><polyline points="510.11,50.50 507.69,59.15 505.40,67.59 503.23,75.80 501.19,83.82 499.27,91.64 497.46,99.27 495.76,106.72 494.15,114.00 492.64,121.12 491.23,128.07 489.90,134.87 488.65,141.53 487.49,148.04 486.40,154.42 485.38,160.66 484.44,166.78 483.56,172.77 482.75,178.64 482.00,184.40 481.30,190.05 480.67,195.60 480.09,201.03 479.56,206.37 479.08,211.61 478.65,216.76 478.27,221.81 477.93,226.78 477.63,231.66 477.38,236.46 477.17,241.17 476.99,245.81 476.86,250.37 476.75,254.86 476.69,259.27 476.65,263.62 476.65,267.90 476.68,272.10 476.74,276.25 476.83,280.33 476.95,284.35 477.09,288.31 477.26,292.21 477.46,296.06 477.68,299.85 477.92,303.59 478.19,307.27 478.48,310.90 478.79,314.48 479.12,318.02 479.47,321.50 479.85,324.93 480.25,328.32 480.67,331.65 481.12,334.93 481.59,338.16 482.09,341.35 482.60,344.49 483.13,347.58 483.69,350.63 484.26,353.64 484.85,356.62 485.45,359.55 486.07,362.44 486.71,365.29 487.36,368.11 488.03,370.89 488.71,373.64 489.40,376.36 490.11,379.04 490.82,381.69 491.55,384.30 492.29,386.89 493.04,389.45 493.80,391.98 494.56,394.48 495.34,396.95 496.13,399.40 496.92,401.82 497.72,404.21 498.53,406.58 499.35,408.92 500.17,411.25 501.00,413.54 501.83,415.82 502.67,418.07 503.52,420.30 504.37,422.51 505.23,424.70 506.09,426.87 506.95,429.02 507.82,431.15 508.69,433.26 509.57,435.35 510.45,437.42 511.33,439.48 512.22,441.51 513.11,443.54 514.00,445.54 514.89,447.53 515.79,449.50 516.69,451.45 517.59,453.39 518.50,455.31 519.42,457.20 520.34,459.09 521.27,460.95 522.20,462.79 523.13,464.62 524.07,466.43 525.01,468.23 525.96,470.01 526.91,471.77 527.87,473.52 528.82,475.25 529.78,476.97 530.75,478.67 531.72,480.36 532.68,482.04 533.66,483.70 534.63,485.34 535.61,486.98 536.59,488.60 537.57,490.21 538.55,491.80 539.54,493.39 540.52,494.96 541.51,496.52 542.50,498.06 543.49,499.60 544.48,501.13 545.48,502.64 546.47,504.14 547.47,505.63 548.46,507.11 549.46,508.58 550.46,510.04 551.46,511.49 552.46,512.93 553.46,514.36 554.46,515.79 555.46,517.20 556.46,518.60 557.46,519.99 558.46,521.38 559.46,522.75 560.46,524.12 561.47,525.48 562.47,526.83 563.47,528.17 564.47,529.50 565.47,530.82 566.47,532.14 567.48,533.44 568.48,534.74 569.49,536.03 570.49,537.31 571.50,538.58 572.51,539.84 573.52,541.09 574.53,542.33 575.54,543.57 576.55,544.80 577.56,546.02 578.57,547.23 579.58,548.43 580.59,549.63 581.61,550.82 582.62,552.00 583.63,553.18 584.64,554.35 585.65,555.51 586.67,556.66 587.68,557.81 588.69,558.95 589.70,560.08 590.72,561.21 591.73,562.33 592.74,563.44 593.75,564.55 594.76,565.65 595.77,566.74 596.78,567.83 597.79,568.92 598.79,569.99 599.80,571.07 600.81,572.13 601.82,573.19 602.82,574.25 603.83,575.30 604.83,576.34 605.83,577.38 606.84,578.41 607.84,579.44 608.84,580.46 609.84,581.48 610.84,582.50 611.84,583.50 612.83,584.51 613.83,585.51 614.83,586.50 615.82,587.49 616.81,588.47 617.81,589.45 618.80,590.43 619.79,591.40 620.78,592.36 621.77,593.32 622.76,594.28 623.75,595.23 624.74,596.18 625.73,597.12 626.71,598.05 627.70,598.99 628.68,599.91 629.67,600.84 630.65,601.76 631.64,602.67 632.62,603.58 633.60,604.48 634.58,605.39 635.56,606.28 636.55,607.17 637.53,608.06 638.50,608.95 639.48,609.82 640.46,610.70 641.44,611.57 642.42,612.44 643.39,613.30 644.37,614.16 645.34,615.01 646.32,615.86 647.29,616.71 648.27,617.55 649.24,618.39 650.21,619.22 651.18,620.05 652.15,620.88 653.13,621.70 654.10,622.52 655.07,623.34 656.03,624.15 657.00,624.96 657.97,625.76 658.94,626.56 659.91,627.35 660.87,628.15" fill="none" stroke="#8b0000" stroke-width="1" /><polyline points="541.19,50.50 538.94,59.15 536.82,67.59 534.83,75.80 532.96,83.82 531.21,91.64 529.56,99.27 528.02,106.72 526.58,114.00 525.23,121.12 523.97,128.07 522.79,134.87 521.70,141.53 520.69,148.04 519.75,154.42 518.88,160.66 518.08,166.78 517.35,172.77 516.68,178.64 516.07,184.40 515.52,190.05 515.02,195.60 514.58,201.03 514.18,206.37 513.84,211.61 513.54,216.76 513.29,221.81 513.09,226.78 512.92,231.66 512.80,236.46 512.71,241.17 512.66,245.81 512.65,250.37 512.67,254.86 512.73,259.27 512.82,263.62 512.94,267.90 513.09,272.10 513.27,276.25 513.48,280.33 513.71,284.35 513.97,288.31 514.26,292.21 514.57,296.06 514.90,299.85 515.26,303.59 515.63,307.27 516.03,310.90 516.46,314.48 516.90,318.02 517.36,321.50 517.84,324.93 518.35,328.32 518.88,331.65 519.43,334.93 520.01,338.16 520.61,341.35 521.22,344.49 521.86,347.58 522.52,350.63 523.19,353.64 523.88,356.62 524.58,359.55 525.30,362.44 526.04,365.29 526.79,368.11 527.55,370.89 528.33,373.64 529.12,376.36 529.92,379.04 530.73,381.69 531.55,384.30 532.39,386.89 533.23,389.45 534.08,391.98 534.94,394.48 535.81,396.95 536.69,399.40 537.57,401.82 538.46,404.21 539.36,406.58 540.27,408.92 541.18,411.25 542.10,413.54 543.02,415.82 543.95,418.07 544.88,420.30 545.82,422.51 546.76,424.70 547.71,426.87 548.66,429.02 549.61,431.15 550.57,433.26 551.53,435.35 552.49,437.42 553.46,439.48 554.43,441.51 555.40,443.54 556.37,445.54 557.35,447.53 558.32,449.50 559.30,451.45 560.29,453.39 561.28,455.31 562.28,457.20 563.28,459.09 564.28,460.95 565.29,462.79 566.31,464.62 567.32,466.43 568.34,468.23 569.37,470.01 570.39,471.77 571.43,473.52 572.46,475.25 573.50,476.97 574.54,478.67 575.58,480.36 576.62,482.04 577.67,483.70 578.72,485.34 579.77,486.98 580.82,488.60 581.87,490.21 582.93,491.80 583.99,493.39 585.05,494.96 586.11,496.52 587.17,498.06 588.23,499.60 589.29,501.13 590.36,502.64 591.42,504.14 592.49,505.63 593.56,507.11 594.62,508.58 595.69,510.04 596.76,511.49 597.83,512.93 598.90,514.36 599.97,515.79 601.04,517.20 602.10,518.60 603.17,519.99 604.24,521.38 605.31,522.75 606.38,524.12 607.45,525.48 608.52,526.83 609.58,528.17 610.65,529.50 611.72,530.82 612.78,532.14 613.85,533.44 614.92,534.74 615.99,536.03 617.07,537.31 618.14,538.58 619.21,539.84 620.28,541.09 621.36,542.33 622.43,543.57 623.50,544.80 624.58,546.02 625.65,547.23 626.73,548.43 627.80,549.63 628.88,550.82 629.95,552.00 631.02,553.18 632.10,554.35 633.17,555.51 634.25,556.66 635.32,557.81 636.39,558.95 637.46,560.08 638.54,561.21 639.61,562.33 640.68,563.44 641.75,564.55 642.82,565.65 643.89,566.74 644.96,567.83 646.03,568.92 647.09,569.99 648.16,571.07 649.23,572.13 650.29,573.19 651.36,574.25 652.42,575.30 653.48,576.34 654.54,577.38 655.60,578.41 656.66,579.44 657.72,580.46 658.78,581.48 659.83,582.50 660.89,583.50" fill="none" stroke="#8b0000" stroke-width="1" /><polyline points="572.27,50.50 570.20,59.15 568.25,67.59 566.43,75.80 564.73,83.82 563.14,91.64 561.66,99.27 560.28,106.72 559.00,114.00 557.81,121.12 556.71,128.07 555.69,134.87 554.75,141.53 553.89,148.04 553.10,154.42 552.38,160.66 551.73,166.78 551.14,172.77 550.61,178.64 550.14,184.40 549.73,190.05 549.37,195.60 549.07,201.03 548.81,206.37 548.60,211.61 548.44,216.76 548.32,221.81 548.25,226.78 548.21,231.66 548.21,236.46 548.26,241.17 548.33,245.81 548.45,250.37 548.59,254.86 548.77,259.27 548.98,263.62 549.23,267.90 549.50,272.10 549.79,276.25 550.12,280.33 550.47,284.35 550.85,288.31 551.25,292.21 551.67,296.06 552.12,299.85 552.59,303.59 553.08,307.27 553.59,310.90 554.12,314.48 554.67,318.02 555.24,321.50 555.83,324.93 556.45,328.32 557.08,331.65 557.74,334.93 558.42,338.16 559.13,341.35 559.85,344.49 560.59,347.58 561.34,350.63 562.12,353.64 562.91,356.62 563.71,359.55 564.54,362.44 565.37,365.29 566.22,368.11 567.08,370.89 567.95,373.64 568.84,376.36 569.73,379.04 570.64,381.69 571.56,384.30 572.49,386.89 573.42,389.45 574.37,391.98 575.32,394.48 576.28,396.95 577.25,399.40 578.22,401.82 579.21,404.21 580.20,406.58 581.19,408.92 582.19,411.25 583.20,413.54 584.21,415.82 585.22,418.07 586.24,420.30 587.27,422.51 588.30,424.70 589.33,426.87 590.36,429.02 591.40,431.15 592.44,433.26 593.49,435.35 594.54,437.42 595.59,439.48 596.64,441.51 597.69,443.54 598.75,445.54 599.80,447.53 600.86,449.50 601.92,451.45 602.99,453.39 604.06,455.31 605.14,457.20 606.21,459.09 607.30,460.95 608.39,462.79 609.48,464.62 610.57,466.43 611.67,468.23 612.77,470.01 613.88,471.77 614.98,473.52 616.09,475.25 617.21,476.97 618.32,478.67 619.44,480.36 620.56,482.04 621.68,483.70 622.80,485.34 623.93,486.98 625.05,488.60 626.18,490.21 627.31,491.80 628.44,493.39 629.57,494.96 630.70,496.52 631.84,498.06 632.97,499.60 634.11,501.13 635.24,502.64 636.38,504.14 637.51,505.63 638.65,507.11 639.79,508.58 640.93,510.04 642.06,511.49 643.20,512.93 644.34,514.36 645.48,515.79 646.61,517.20 647.75,518.60 648.89,519.99 650.02,521.38 651.16,522.75 652.29,524.12 653.43,525.48 654.56,526.83 655.70,528.17 656.83,529.50 657.96,530.82 659.10,532.14 660.23,533.44 661.37,534.74" fill="none" stroke="#8b0000" stroke-width="1" /><polyline points="130.91,749.43 130.52,749.07 130.13,748.71 129.74,748.35 129.35,747.99 128.96,747.63 128.57,747.26 128.18,746.90 127.78,746.53 127.39,746.16 127.00,745.79 126.61,745.42 126.22,745.05 125.82,744.68 125.43,744.30 125.04,743.93 124.65,743.55 124.25,743.17 123.86,742.80 123.47,742.42 123.07,742.04 122.68,741.65 122.29,741.27 121.89,740.89 121.50,740.50 121.11,740.11 120.71,739.72 120.32,739.34 119.93,738.94 119.53,738.55 119.14,738.16 118.75,737.76 118.35,737.37 117.96,736.97 117.57,736.57 117.17,736.17 116.78,735.77 116.39,735.37 115.99,734.97 115.60,734.56 115.21,734.16 114.81,733.75 114.42,733.34 114.02,732.93 113.63,732.52 113.24,732.10 112.84,731.69 112.45,731.27 112.05,730.86 111.66,730.44 111.27,730.02 110.87,729.60 110.48,729.17 110.08,728.75 109.69,728.32 109.30,727.90 108.90,727.47 108.51,727.04 108.12,726.61 107.72,726.17 107.33,725.74 106.93,725.30 106.54,724.87 106.15,724.43 105.75,723.99 105.36,723.55 104.97,723.10 104.57,722.66 104.18,722.21 103.79,721.76 103.39,721.31 103.00,720.86 102.61,720.41 102.21,719.96 101.82,719.50 101.43,719.04 101.04,718.58 100.64,718.12 100.25,717.66 99.86,717.19 99.47,716.73 99.08,716.26 98.69,715.79 98.30,715.31 97.91,714.84 97.52,714.36 97.13,713.88 96.75,713.40 96.36,712.92 95.97,712.44 95.58,711.95 95.20,711.46 94.81,710.98 94.42,710.48 94.03,709.99 93.65,709.50 93.26,709.00 92.87,708.50 92.49,708.01 92.10,707.50 91.71,707.00 91.33,706.50 90.94,705.99 90.55,705.49 90.17,704.98 89.78,704.47 89.39,703.95 89.00,703.44 88.62,702.93 88.23,702.41 87.84,701.89 87.45,701.37 87.07,700.85 86.68,700.33 86.29,699.81 85.90,699.28 85.51,698.75 85.12,698.23 84.73,697.70 84.34,697.17 83.95,696.64 83.55,696.10 83.16,695.57 82.77,695.04 82.37,694.50 81.98,693.96 81.59,693.42 81.19,692.88 80.80,692.34 80.40,691.80 80.00,691.26 79.61,690.71 79.21,690.16 78.81,689.61 78.42,689.06 78.02,688.51 77.62,687.96 77.22,687.40 76.83,686.84 76.43,686.29 76.03,685.73 75.63,685.16 75.23,684.60 74.83,684.03 74.43,683.47 74.03,682.90 73.63,682.33 73.23,681.75 72.84,681.18 72.44,680.60 72.04,680.03 71.64,679.44 71.24,678.86 70.84,678.28 70.44,677.69 70.04,677.10 69.64,676.51 69.24,675.92 68.84,675.33 68.44,674.73 68.04,674.13 67.64,673.53 67.25,672.93 66.85,672.32 66.45,671.71 66.05,671.10 65.65,670.49 65.26,669.87 64.86,669.26 64.46,668.64 64.07,668.01 63.67,667.39 63.28,666.76 62.88,666.13 62.49,665.50 62.09,664.86 61.70,664.23 61.30,663.59 60.91,662.95 60.52,662.30" fill="none" stroke="#000080" stroke-width="1" /><polyline points="191.00,749.43 190.60,749.07 190.21,748.71 189.82,748.35 189.43,747.99 189.03,747.63 188.64,747.26 188.25,746.90 187.85,746.53 187.46,746.16 187.06,745.79 186.67,745.42 186.27,745.05 185.88,744.68 185.48,744.30 185.08,743.93 184.69,743.55 184.29,743.17 183.89,742.80 183.49,742.42 183.10,742.04 182.70,741.65 182.30,741.27 181.90,740.89 181.50,740.50 181.10,740.11 180.70,739.72 180.30,739.34 179.90,738.94 179.50,738.55 179.10,738.16 178.70,737.76 178.30,737.37 177.90,736.97 177.49,736.57 177.09,736.17 176.69,735.77 176.29,735.37 175.88,734.97 175.48,734.56 175.08,734.16 174.67,733.75 174.27,733.34 173.86,732.93 173.46,732.52 173.06,732.10 172.65,731.69 172.24,731.27 171.84,730.86 171.43,730.44 171.03,730.02 170.62,729.60 170.21,729.17 169.81,728.75 169.40,728.32 168.99,727.90 168.59,727.47 168.18,727.04 167.77,726.61 167.36,726.17 166.95,725.74 166.54,725.30 166.14,724.87 165.73,724.43 165.32,723.99 164.91,723.55 164.50,723.10 164.09,722.66 163.68,722.21 163.27,721.76 162.86,721.31 162.45,720.86 162.04,720.41 161.63,719.96 161.22,719.50 160.81,719.04 160.40,718.58 159.99,718.12 159.58,717.66 159.17,717.19 158.76,716.73 158.35,716.26 157.94,715.79 157.53,715.31 157.12,714.84 156.71,714.36 156.30,713.88 155.89,713.40 155.48,712.92 155.07,712.44 154.66,711.95 154.25,711.46 153.85,710.98 153.44,710.48 153.03,709.99 152.62,709.50 152.21,709.00 151.80,708.50 151.39,708.01 150.98,707.50 150.57,707.00 150.16,706.50 149.75,705.99 149.33,705.49 148.92,704.98 148.51,704.47 148.10,703.95 147.69,703.44 147.27,702.93 146.86,702.41 146.45,701.89 146.03,701.37 145.62,700.85 145.20,700.33 144.79,699.81 144.37,699.28 143.95,698.75 143.53,698.23 143.12,697.70 142.70,697.17 142.28,696.64 141.86,696.10 141.44,695.57 141.01,695.04 140.59,694.50 140.17,693.96 139.74,693.42 139.32,692.88 138.89,692.34 138.47,691.80 138.04,691.26 137.62,690.71 137.19,690.16 136.76,689.61 136.33,689.06 135.90,688.51 135.47,687.96 135.05,687.40 134.62,686.84 134.18,686.29 133.75,685.73 133.32,685.16 132.89,684.60 132.46,684.03 132.03,683.47 131.59,682.90 131.16,682.33 130.73,681.75 130.29,681.18 129.86,680.60 129.43,680.03 128.99,679.44 128.56,678.86 128.12,678.28 127.69,677.69 127.25,677.10 126.82,676.51 126.38,675.92 125.95,675.33 125.51,674.73 125.08,674.13 124.64,673.53 124.21,672.93 123.77,672.32 123.34,671.71 122.90,671.10 122.47,670.49 122.03,669.87 121.60,669.26 121.16,668.64 120.73,668.01 120.29,667.39 119.86,666.76 119.43,666.13 118.99,665.50 118.56,664.86 118.13,664.23 117.69,663.59 117.26,662.95 116.82,662.30 116.39,661.66 115.96,661.01 115.52,660.36 115.09,659.70 114.65,659.05 114.22,658.39 113.78,657.73 113.35,657.06 112.92,656.40 112.48,655.73 112.05,655.06 111.61,654.39 111.18,653.71 110.75,653.03 110.31,652.35 109.88,651.67 109.45,650.98 109.01,650.29 108.58,649.60 108.15,648.90 107.71,648.20 107.28,647.50 106.85,646.80 106.42,646.09 105.99,645.38 105.56,644.67 105.13,643.95 104.70,643.23 104.27,642.51 103.84,641.79 103.41,641.06 102.98,640.33 102.55,639.59 102.12,638.85 101.70,638.11 101.27,637.36 100.84,636.62 100.42,635.86 99.99,635.11 99.57,634.35 99.15,633.59 98.73,632.82 98.30,632.05 97.88,631.28 97.46,630.50 97.04,629.72 96.63,628.93 96.21,628.15 95.79,627.35 95.37,626.56 94.96,625.76 94.54,624.96 94.13,624.15 93.72,623.34 93.30,622.52 92.89,621.70 92.48,620.88 92.07,620.05 91.66,619.22 91.25,618.39 90.84,617.55 90.43,616.71 90.03,615.86 89.62,615.01 89.22,614.16 88.81,613.30 88.41,612.44 88.01,611.57 87.60,610.70 87.20,609.82 86.80,608.95 86.40,608.06 86.00,607.17 85.61,606.28 85.21,605.39 84.81,604.48 84.42,603.58 84.03,602.67 83.63,601.76 83.24,600.84 82.85,599.91 82.46,598.99 82.07,598.05 81.68,597.12 81.29,596.18 80.90,595.23 80.52,594.28 80.13,593.32 79.75,592.36 79.37,591.40 78.98,590.43 78.60,589.45 78.22,588.47 77.84,587.49 77.47,586.50 77.09,585.51 76.71,584.51 76.34,583.50 75.96,582.50 75.59,581.48 75.21,580.46 74.84,579.44 74.47,578.41 74.10,577.38 73.73,576.34 73.36,575.30 72.99,574.25 72.63,573.19 72.26,572.13 71.90,571.07 71.54,569.99 71.18,568.92 70.82,567.83 70.46,566.74 70.10,565.65 69.75,564.55 69.39,563.44 69.04,562.33 68.69,561.21 68.34,560.08 68.00,558.95 67.65,557.81 67.31,556.66 66.97,555.51 66.63,554.35 66.29,553.18 65.96,552.00 65.63,550.82 65.30,549.63 64.97,548.43 64.65,547.23 64.32,546.02 64.00,544.80 63.69,543.57 63.37,542.33 63.06,541.09 62.76,539.84 62.45,538.58 62.15,537.31 61.85,536.03 61.56,534.74 61.26,533.44 60.98,532.14 60.69,530.82" fill="none" stroke="#000080" stroke-width="1" /><polyline points="60.62,347.58 61.21,344.49 61.82,341.35 62.47,338.16 63.15,334.93 63.85,331.65 64.59,328.32 65.36,324.93 66.16,321.50 67.00,318.02 67.87,314.48 68.76,310.90 69.69,307.27 70.64,303.59 71.63,299.85 72.65,296.06 73.71,292.21 74.80,288.31 75.92,284.35 77.09,280.33 78.29,276.25 79.53,272.10 80.81,267.90 82.14,263.62 83.51,259.27 84.92,254.86 86.38,250.37 87.89,245.81 89.44,241.17 91.05,236.46 92.71,231.66 94.42,226.78 96.19,221.81 98.02,216.76 99.91,211.61 101.87,206.37 103.88,201.03 105.97,195.60 108.12,190.05 110.35,184.40 112.65,178.64" fill="none" stroke="#000080" stroke-width="1" /><polyline points="250.42,749.43 250.06,749.07 249.69,748.71 249.33,748.35 248.96,747.99 248.59,747.63 248.22,747.26 247.86,746.90 247.49,746.53 247.12,746.16 246.75,745.79 246.38,745.42 246.01,745.05 245.63,744.68 245.26,744.30 244.89,743.93 244.51,743.55 244.14,743.17 243.76,742.80 243.39,742.42 243.01,742.04 242.63,741.65 242.26,741.27 241.88,740.89 241.50,740.50 241.12,740.11 240.74,739.72 240.36,739.34 239.98,738.94 239.60,738.55 239.22,738.16 238.84,737.76 238.46,737.37 238.07,736.97 237.69,736.57 237.30,736.17 236.92,735.77 236.53,735.37 236.15,734.97 235.76,734.56 235.37,734.16 234.99,733.75 234.60,733.34 234.21,732.93 233.82,732.52 233.43,732.10 233.04,731.69 232.65,731.27 232.25,730.86 231.86,730.44 231.47,730.02 231.08,729.60 230.68,729.17 230.29,728.75 229.89,728.32 229.50,727.90 229.10,727.47 228.70,727.04 228.31,726.61 227.91,726.17 227.51,725.74 227.11,725.30 226.71,724.87 226.31,724.43 225.91,723.99 225.51,723.55 225.11,723.10 224.71,722.66 224.30,722.21 223.90,721.76 223.50,721.31 223.09,720.86 222.69,720.41 222.28,719.96 221.88,719.50 221.47,719.04 221.07,718.58 220.66,718.12 220.25,717.66 219.85,717.19 219.44,716.73 219.04,716.26 218.63,715.79 218.22,715.31 217.81,714.84 217.41,714.36 217.00,713.88 216.59,713.40 216.18,712.92 215.77,712.44 215.36,711.95 214.95,711.46 214.54,710.98 214.13,710.48 213.72,709.99 213.31,709.50 212.90,709.00 212.48,708.50 212.07,708.01 211.66,707.50 211.24,707.00 210.83,706.50 210.41,705.99 210.00,705.49 209.58,704.98 209.16,704.47 208.75,703.95 208.33,703.44 207.91,702.93 207.49,702.41 207.07,701.89 206.64,701.37 206.22,700.85 205.80,700.33 205.37,699.81 204.95,699.28 204.52,698.75 204.09,698.23 203.67,697.70 203.24,697.17 202.81,696.64 202.38,696.10 201.94,695.57 201.51,695.04 201.07,694.50 200.64,693.96 200.20,693.42 199.76,692.88 199.32,692.34 198.88,691.80 198.44,691.26 198.00,690.71 197.56,690.16 197.12,689.61 196.67,689.06 196.23,688.51 195.78,687.96 195.34,687.40 194.89,686.84 194.44,686.29 193.99,685.73 193.54,685.16 193.09,684.60 192.64,684.03 192.19,683.47 191.74,682.90 191.28,682.33 190.83,681.75 190.38,681.18 189.92,680.60 189.47,680.03 189.01,679.44 188.55,678.86 188.10,678.28 187.64,677.69 187.18,677.10 186.72,676.51 186.27,675.92 185.81,675.33 185.35,674.73 184.89,674.13 184.43,673.53 183.96,672.93 183.50,672.32 183.04,671.71 182.58,671.10 182.12,670.49 181.66,669.87 181.19,669.26 180.73,668.64 180.27,668.01 179.81,667.39 179.34,666.76 178.88,666.13 178.42,665.50 177.95,664.86 177.49,664.23 177.03,663.59 176.56,662.95 176.10,662.30 175.63,661.66 175.17,661.01 174.70,660.36 174.23,659.70 173.77,659.05 173.30,658.39 172.83,657.73 172.36,657.06 171.89,656.40 171.43,655.73 170.96,655.06 170.49,654.39 170.02,653.71 169.55,653.03 169.08,652.35 168.61,651.67 168.14,650.98 167.67,650.29 167.20,649.60 166.73,648.90 166.26,648.20 165.79,647.50 165.32,646.80 164.85,646.09 164.38,645.38 163.91,644.67 163.44,643.95 162.97,643.23 162.50,642.51 162.03,641.79 161.56,641.06 161.09,640.33 160.62,639.59 160.15,638.85 159.68,638.11 159.21,637.36 158.74,636.62 158.27,635.86 157.81,635.11 157.34,634.35 156.87,633.59 156.41,632.82 155.94,632.05 155.47,631.28 155.01,630.50 154.54,629.72 154.08,628.93 153.62,628.15 153.15,627.35 152.69,626.56 152.23,625.76 151.77,624.96 151.30,624.15 150.84,623.34 150.38,622.52 149.92,621.70 149.46,620.88 149.00,620.05 148.54,619.22 148.09,618.39 147.63,617.55 147.17,616.71 146.71,615.86 146.26,615.01 145.80,614.16 145.35,613.30 144.89,612.44 144.44,611.57 143.98,610.70 143.53,609.82 143.08,608.95 142.63,608.06 142.17,607.17 141.72,606.28 141.27,605.39 140.82,604.48 140.38,603.58 139.93,602.67 139.48,601.76 139.03,600.84 138.59,599.91 138.14,598.99 137.69,598.05 137.25,597.12 136.81,596.18 136.36,595.23 135.92,594.28 135.48,593.32 135.04,592.36 134.60,591.40 134.16,590.43 133.72,589.45 133.28,588.47 132.84,587.49 132.41,586.50 131.97,585.51 131.53,584.51 131.10,583.50 130.66,582.50 130.23,581.48 129.79,580.46 129.36,579.44 128.93,578.41 128.50,577.38 128.07,576.34 127.64,575.30 127.21,574.25 126.78,573.19 126.35,572.13 125.93,571.07 125.50,569.99 125.08,568.92 124.65,567.83 124.23,566.74 123.81,565.65 123.39,564.55 122.97,563.44 122.55,562.33 122.14,561.21 121.73,560.08 121.31,558.95 120.90,557.81 120.49,556.66 120.09,555.51 119.68,554.35 119.28,553.18 118.88,552.00 118.48,550.82 118.08,549.63 117.68,548.43 117.29,547.23 116.90,546.02 116.51,544.80 116.13,543.57 115.74,542.33 115.36,541.09 114.98,539.84 114.61,538.58 114.24,537.31 113.87,536.03 113.50,534.74 113.14,533.44 112.78,532.14 112.42,530.82 112.07,529.50 111.72,528.17 111.37,526.83 111.02,525.48 110.68,524.12 110.34,522.75 110.00,521.38 109.66,519.99 109.33,518.60 109.00,517.20 108.67,515.79 108.34,514.36 108.02,512.93 107.70,511.49 107.38,510.04 107.07,508.58 106.76,507.11 106.45,505.63 106.15,504.14 105.85,502.64 105.55,501.13 105.26,499.60 104.97,498.06 104.69,496.52 104.41,494.96 104.14,493.39 103.87,491.80 103.60,490.21 103.34,488.60 103.09,486.98 102.83,485.34 102.59,483.70 102.35,482.04 102.12,480.36 101.89,478.67 101.67,476.97 101.45,475.25 101.24,473.52 101.04,471.77 100.84,470.01 100.66,468.23 100.47,466.43 100.30,464.62 100.13,462.79 99.98,460.95 99.83,459.09 99.68,457.20 99.55,455.31 99.43,453.39 99.31,451.45 99.20,449.50 99.11,447.53 99.01,445.54 98.93,443.54 98.85,441.51 98.78,439.48 98.71,437.42 98.65,435.35 98.60,433.26 98.56,431.15 98.52,429.02 98.49,426.87 98.48,424.70 98.47,422.51 98.47,420.30 98.48,418.07 98.50,415.82 98.53,413.54 98.57,411.25 98.62,408.92 98.68,406.58 98.76,404.21 98.84,401.82 98.94,399.40 99.06,396.95 99.18,394.48 99.32,391.98 99.48,389.45 99.65,386.89 99.83,384.30 100.04,381.69 100.26,379.04 100.49,376.36 100.75,373.64 101.02,370.89 101.31,368.11 101.63,365.29 101.96,362.44 102.32,359.55 102.69,356.62 103.09,353.64 103.52,350.63 103.97,347.58 104.44,344.49 104.94,341.35 105.47,338.16 106.03,334.93 106.62,331.65 107.24,328.32 107.89,324.93 108.57,321.50 109.29,318.02 110.03,314.48 110.80,310.90 111.60,307.27 112.43,303.59 113.30,299.85 114.19,296.06 115.12,292.21 116.08,288.31 117.08,284.35 118.11,280.33 119.18,276.25 120.29,272.10 121.44,267.90 122.63,263.62 123.86,259.27 125.13,254.86 126.45,250.37 127.82,245.81 129.23,241.17 130.70,236.46 132.21,231.66 133.78,226.78 135.41,221.81 137.09,216.76 138.83,211.61 140.63,206.37 142.50,201.03 144.43,195.60 146.43,190.05 148.50,184.40 150.64,178.64 152.86,172.77 155.16,166.78 157.54,160.66 160.01,154.42 162.57,148.04 165.22,141.53 167.97,134.87 170.82,128.07 173.77,121.12 176.84,114.00" fill="none" stroke="#000080" stroke-width="1" /><polyline points="309.04,749.43 308.73,749.07 308.43,748.71 308.12,748.35 307.81,747.99 307.50,747.63 307.19,747.26 306.88,746.90 306.57,746.53 306.26,746.16 305.95,745.79 305.64,745.42 305.32,745.05 305.01,744.68 304.69,744.30 304.38,743.93 304.06,743.55 303.74,743.17 303.42,742.80 303.11,742.42 302.79,742.04 302.47,741.65 302.14,741.27 301.82,740.89 301.50,740.50 301.18,740.11 300.85,739.72 300.53,739.34 300.21,738.94 299.88,738.55 299.55,738.16 299.23,737.76 298.90,737.37 298.57,736.97 298.24,736.57 297.91,736.17 297.58,735.77 297.25,735.37 296.91,734.97 296.58,734.56 296.25,734.16 295.91,733.75 295.58,733.34 295.24,732.93 294.90,732.52 294.56,732.10 294.23,731.69 293.89,731.27 293.54,730.86 293.20,730.44 292.86,730.02 292.52,729.60 292.17,729.17 291.83,728.75 291.48,728.32 291.14,727.90 290.79,727.47 290.44,727.04 290.10,726.61 289.75,726.17 289.40,725.74 289.05,725.30 288.69,724.87 288.34,724.43 287.99,723.99 287.63,723.55 287.28,723.10 286.92,722.66 286.57,722.21 286.21,721.76 285.85,721.31 285.49,720.86 285.13,720.41 284.77,719.96 284.41,719.50 284.05,719.04 283.68,718.58 283.32,718.12 282.96,717.66 282.59,717.19 282.23,716.73 281.86,716.26 281.50,715.79 281.13,715.31 280.76,714.84 280.40,714.36 280.03,713.88 279.66,713.40 279.29,712.92 278.92,712.44 278.55,711.95 278.18,711.46 277.80,710.98 277.43,710.48 277.06,709.99 276.68,709.50 276.30,709.00 275.93,708.50 275.55,708.01 275.17,707.50 274.79,707.00 274.41,706.50 274.03,705.99 273.65,705.49 273.26,704.98 272.88,704.47 272.49,703.95 272.10,703.44 271.71,702.93 271.32,702.41 270.93,701.89 270.54,701.37 270.15,700.85 269.75,700.33 269.36,699.81 268.96,699.28 268.56,698.75 268.16,698.23 267.76,697.70 267.35,697.17 266.95,696.64 266.54,696.10 266.13,695.57 265.72,695.04 265.31,694.50 264.90,693.96 264.48,693.42 264.07,692.88 263.65,692.34 263.23,691.80 262.81,691.26 262.39,690.71 261.97,690.16 261.54,689.61 261.12,689.06 260.69,688.51 260.26,687.96 259.83,687.40 259.40,686.84 258.97,686.29 258.53,685.73 258.10,685.16 257.66,684.60 257.23,684.03 256.79,683.47 256.35,682.90 255.91,682.33 255.47,681.75 255.02,681.18 254.58,680.60 254.13,680.03 253.69,679.44 253.24,678.86 252.79,678.28 252.34,677.69 251.89,677.10 251.44,676.51 250.99,675.92 250.53,675.33 250.08,674.73 249.62,674.13 249.17,673.53 248.71,672.93 248.25,672.32 247.79,671.71 247.33,671.10 246.87,670.49 246.41,669.87 245.95,669.26 245.48,668.64 245.02,668.01 244.56,667.39 244.09,666.76 243.62,666.13 243.16,665.50 242.69,664.86 242.22,664.23 241.75,663.59 241.28,662.95 240.81,662.30 240.34,661.66 239.87,661.01 239.39,660.36 238.92,659.70 238.44,659.05 237.96,658.39 237.49,657.73 237.01,657.06 236.53,656.40 236.05,655.73 235.56,655.06 235.08,654.39 234.60,653.71 234.12,653.03 233.63,652.35 233.15,651.67 232.66,650.98 232.17,650.29 231.69,649.60 231.20,648.90 230.71,648.20 230.22,647.50 229.73,646.80 229.24,646.09 228.75,645.38 228.26,644.67 227.77,643.95 227.27,643.23 226.78,642.51 226.29,641.79 225.79,641.06 225.30,640.33 224.81,639.59 224.31,638.85 223.82,638.11 223.32,637.36 222.82,636.62 222.33,635.86 221.83,635.11 221.34,634.35 220.84,633.59 220.34,632.82 219.85,632.05 219.35,631.28 218.85,630.50 218.36,629.72 217.86,628.93 217.36,628.15 216.87,627.35 216.37,626.56 215.87,625.76 215.37,624.96 214.88,624.15 214.38,623.34 213.88,622.52 213.38,621.70 212.88,620.88 212.39,620.05 211.89,619.22 211.39,618.39 210.89,617.55 210.39,616.71 209.90,615.86 209.40,615.01 208.90,614.16 208.40,613.30 207.90,612.44 207.41,611.57 206.91,610.70 206.41,609.82 205.91,608.95 205.41,608.06 204.92,607.17 204.42,606.28 203.92,605.39 203.42,604.48 202.93,603.58 202.43,602.67 201.93,601.76 201.43,600.84 200.94,599.91 200.44,598.99 199.94,598.05 199.45,597.12 198.95,596.18 198.46,595.23 197.96,594.28 197.46,593.32 196.97,592.36 196.47,591.40 195.98,590.43 195.48,589.45 194.99,588.47 194.50,587.49 194.00,586.50 193.51,585.51 193.01,584.51 192.52,583.50 192.03,582.50 191.53,581.48 191.04,580.46 190.55,579.44 190.05,578.41 189.56,577.38 189.07,576.34 188.58,575.30 188.08,574.25 187.59,573.19 187.10,572.13 186.61,571.07 186.12,569.99 185.63,568.92 185.14,567.83 184.66,566.74 184.17,565.65 183.68,564.55 183.20,563.44 182.72,562.33 182.23,561.21 181.75,560.08 181.27,558.95 180.79,557.81 180.31,556.66 179.83,555.51 179.36,554.35 178.88,553.18 178.41,552.00 177.94,550.82 177.47,549.63 177.00,548.43 176.54,547.23 176.07,546.02 175.61,544.80 175.15,543.57 174.69,542.33 174.24,541.09 173.79,539.84 173.33,538.58 172.89,537.31 172.44,536.03 172.00,534.74 171.56,533.44 171.12,532.14 170.68,530.82 170.25,529.50 169.82,528.17 169.40,526.83 168.97,525.48 168.54,524.12 168.12,522.75 167.70,521.38 167.28,519.99 166.87,518.60 166.45,517.20 166.04,515.79 165.63,514.36 165.23,512.93 164.82,511.49 164.42,510.04 164.02,508.58 163.63,507.11 163.23,505.63 162.84,504.14 162.46,502.64 162.08,501.13 161.70,499.60 161.32,498.06 160.95,496.52 160.58,494.96 160.22,493.39 159.86,491.80 159.50,490.21 159.15,488.60 158.80,486.98 158.46,485.34 158.12,483.70 157.79,482.04 157.47,480.36 157.14,478.67 156.83,476.97 156.52,475.25 156.22,473.52 155.92,471.77 155.63,470.01 155.34,468.23 155.06,466.43 154.79,464.62 154.53,462.79 154.27,460.95 154.02,459.09 153.78,457.20 153.55,455.31 153.32,453.39 153.11,451.45 152.90,449.50 152.70,447.53 152.51,445.54 152.32,443.54 152.13,441.51 151.96,439.48 151.79,437.42 151.62,435.35 151.47,433.26 151.32,431.15 151.18,429.02 151.04,426.87 150.92,424.70 150.80,422.51 150.69,420.30 150.59,418.07 150.50,415.82 150.42,413.54 150.35,411.25 150.29,408.92 150.24,406.58 150.20,404.21 150.17,401.82 150.16,399.40 150.16,396.95 150.17,394.48 150.19,391.98 150.23,389.45 150.28,386.89 150.35,384.30 150.43,381.69 150.53,379.04 150.65,376.36 150.78,373.64 150.93,370.89 151.10,368.11 151.29,365.29 151.50,362.44 151.73,359.55 151.98,356.62 152.25,353.64 152.55,350.63 152.87,347.58 153.21,344.49 153.59,341.35 153.98,338.16 154.41,334.93 154.86,331.65 155.35,328.32 155.87,324.93 156.41,321.50 156.99,318.02 157.60,314.48 158.23,310.90 158.89,307.27 159.58,303.59 160.30,299.85 161.05,296.06 161.83,292.21 162.65,288.31 163.50,284.35 164.38,280.33 165.31,276.25 166.26,272.10 167.26,267.90 168.30,263.62 169.37,259.27 170.49,254.86 171.66,250.37 172.87,245.81 174.12,241.17 175.43,236.46 176.78,231.66 178.19,226.78 179.64,221.81 181.16,216.76 182.73,211.61 184.36,206.37 186.06,201.03 187.81,195.60 189.64,190.05 191.53,184.40 193.49,178.64 195.53,172.77 197.65,166.78 199.85,160.66 202.13,154.42 204.50,148.04 206.96,141.53 209.51,134.87 212.17,128.07 214.92,121.12 217.79,114.00 220.77,106.72 223.86,99.27 227.09,91.64 230.44,83.82 233.92,75.80 237.55,67.59 241.33,59.15 245.26,50.50" fill="none" stroke="#000080" stroke-width="1" /><polyline points="367.00,749.43 366.78,749.07 366.55,748.71 366.33,748.35 366.11,747.99 365.88,747.63 365.66,747.26 365.43,746.90 365.20,746.53 364.98,746.16 364.75,745.79 364.52,745.42 364.29,745.05 364.06,744.68 363.83,744.30 363.60,743.93 363.37,743.55 363.14,743.17 362.91,742.80 362.67,742.42 362.44,742.04 362.21,741.65 361.97,741.27 361.74,740.89 361.50,740.50 361.26,740.11 361.03,739.72 360.79,739.34 360.55,738.94 360.31,738.55 360.08,738.16 359.84,737.76 359.60,737.37 359.35,736.97 359.11,736.57 358.87,736.17 358.63,735.77 358.38,735.37 358.14,734.97 357.89,734.56 357.65,734.16 357.40,733.75 357.15,733.34 356.91,732.93 356.66,732.52 356.41,732.10 356.16,731.69 355.91,731.27 355.66,730.86 355.41,730.44 355.15,730.02 354.90,729.60 354.64,729.17 354.39,728.75 354.13,728.32 353.88,727.90 353.62,727.47 353.36,727.04 353.10,726.61 352.84,726.17 352.58,725.74 352.32,725.30 352.06,724.87 351.80,724.43 351.53,723.99 351.27,723.55 351.00,723.10 350.74,722.66 350.47,722.21 350.20,721.76 349.94,721.31 349.67,720.86 349.40,720.41 349.13,719.96 348.86,719.50 348.58,719.04 348.31,718.58 348.04,718.12 347.76,717.66 347.49,717.19 347.22,716.73 346.94,716.26 346.66,715.79 346.39,715.31 346.11,714.84 345.83,714.36 345.55,713.88 345.27,713.40 344.99,712.92 344.71,712.44 344.43,711.95 344.15,711.46 343.86,710.98 343.58,710.48 343.29,709.99 343.01,709.50 342.72,709.00 342.43,708.50 342.14,708.01 341.85,707.50 341.56,707.00 341.26,706.50 340.97,705.99 340.67,705.49 340.38,704.98 340.08,704.47 339.78,703.95 339.48,703.44 339.18,702.93 338.87,702.41 338.57,701.89 338.26,701.37 337.95,700.85 337.65,700.33 337.33,699.81 337.02,699.28 336.71,698.75 336.39,698.23 336.07,697.70 335.75,697.17 335.43,696.64 335.11,696.10 334.78,695.57 334.46,695.04 334.13,694.50 333.80,693.96 333.47,693.42 333.13,692.88 332.80,692.34 332.46,691.80 332.12,691.26 331.78,690.71 331.43,690.16 331.09,689.61 330.74,689.06 330.40,688.51 330.05,687.96 329.69,687.40 329.34,686.84 328.99,686.29 328.63,685.73 328.27,685.16 327.91,684.60 327.55,684.03 327.19,683.47 326.82,682.90 326.46,682.33 326.09,681.75 325.72,681.18 325.35,680.60 324.97,680.03 324.60,679.44 324.22,678.86 323.85,678.28 323.47,677.69 323.09,677.10 322.70,676.51 322.32,675.92 321.93,675.33 321.55,674.73 321.16,674.13 320.77,673.53 320.38,672.93 319.98,672.32 319.59,671.71 319.19,671.10 318.80,670.49 318.40,669.87 318.00,669.26 317.60,668.64 317.19,668.01 316.79,667.39 316.38,666.76 315.98,666.13 315.57,665.50 315.16,664.86 314.75,664.23 314.33,663.59 313.92,662.95 313.50,662.30 313.08,661.66 312.66,661.01 312.24,660.36 311.82,659.70 311.39,659.05 310.97,658.39 310.54,657.73 310.11,657.06 309.68,656.40 309.24,655.73 308.81,655.06 308.37,654.39 307.93,653.71 307.49,653.03 307.05,652.35 306.61,651.67 306.16,650.98 305.72,650.29 305.27,649.60 304.82,648.90 304.37,648.20 303.92,647.50 303.47,646.80 303.01,646.09 302.55,645.38 302.10,644.67 301.64,643.95 301.18,643.23 300.71,642.51 300.25,641.79 299.79,641.06 299.32,640.33 298.85,639.59 298.38,638.85 297.92,638.11 297.44,637.36 296.97,636.62 296.50,635.86 296.02,635.11 295.55,634.35 295.07,633.59 294.59,632.82 294.11,632.05 293.63,631.28 293.15,630.50 292.67,629.72 292.19,628.93 291.70,628.15 291.22,627.35 290.73,626.56 290.24,625.76 289.75,624.96 289.26,624.15 288.77,623.34 288.28,622.52 287.79,621.70 287.29,620.88 286.80,620.05 286.30,619.22 285.80,618.39 285.30,617.55 284.80,616.71 284.30,615.86 283.80,615.01 283.30,614.16 282.80,613.30 282.29,612.44 281.78,611.57 281.28,610.70 280.77,609.82 280.26,608.95 279.75,608.06 279.24,607.17 278.73,606.28 278.22,605.39 277.70,604.48 277.19,603.58 276.67,602.67 276.15,601.76 275.64,600.84 275.12,599.91 274.60,598.99 274.08,598.05 273.56,597.12 273.04,596.18 272.51,595.23 271.99,594.28 271.47,593.32 270.94,592.36 270.42,591.40 269.89,590.43 269.36,589.45 268.83,588.47 268.30,587.49 267.78,586.50 267.24,585.51 266.71,584.51 266.18,583.50 265.65,582.50 265.11,581.48 264.58,580.46 264.04,579.44 263.50,578.41 262.97,577.38 262.43,576.34 261.89,575.30 261.35,574.25 260.81,573.19 260.27,572.13 259.73,571.07 259.19,569.99 258.64,568.92 258.10,567.83 257.56,566.74 257.02,565.65 256.47,564.55 255.93,563.44 255.39,562.33 254.85,561.21 254.30,560.08 253.76,558.95 253.22,557.81 252.68,556.66 252.14,555.51 251.60,554.35 251.06,553.18 250.52,552.00 249.98,550.82 249.44,549.63 248.90,548.43 248.37,547.23 247.83,546.02 247.30,544.80 246.77,543.57 246.23,542.33 245.70,541.09 245.18,539.84 244.65,538.58 244.12,537.31 243.60,536.03 243.08,534.74 242.56,533.44 242.04,532.14 241.52,530.82 241.01,529.50 240.50,528.17 239.98,526.83 239.47,525.48 238.96,524.12 238.45,522.75 237.95,521.38 237.44,519.99 236.94,518.60 236.43,517.20 235.93,515.79 235.43,514.36 234.93,512.93 234.43,511.49 233.94,510.04 233.45,508.58 232.95,507.11 232.47,505.63 231.98,504.14 231.50,502.64 231.02,501.13 230.54,499.60 230.06,498.06 229.59,496.52 229.12,494.96 228.65,493.39 228.19,491.80 227.73,490.21 227.28,488.60 226.83,486.98 226.38,485.34 225.93,483.70 225.50,482.04 225.06,480.36 224.63,478.67 224.21,476.97 223.79,475.25 223.37,473.52 222.96,471.77 222.56,470.01 222.16,468.23 221.77,466.43 221.38,464.62 221.00,462.79 220.63,460.95 220.26,459.09 219.91,457.20 219.55,455.31 219.21,453.39 218.87,451.45 218.55,449.50 218.23,447.53 217.91,445.54 217.60,443.54 217.29,441.51 216.99,439.48 216.69,437.42 216.40,435.35 216.12,433.26 215.84,431.15 215.57,429.02 215.31,426.87 215.06,424.70 214.81,422.51 214.57,420.30 214.33,418.07 214.11,415.82 213.90,413.54 213.69,411.25 213.49,408.92 213.31,406.58 213.13,404.21 212.97,401.82 212.81,399.40 212.67,396.95 212.54,394.48 212.42,391.98 212.32,389.45 212.23,386.89 212.15,384.30 212.09,381.69 212.04,379.04 212.01,376.36 212.00,373.64 212.00,370.89 212.02,368.11 212.06,365.29 212.11,362.44 212.19,359.55 212.29,356.62 212.41,353.64 212.55,350.63 212.71,347.58 212.90,344.49 213.11,341.35 213.35,338.16 213.61,334.93 213.90,331.65 214.22,328.32 214.57,324.93 214.96,321.50 215.37,318.02 215.80,314.48 216.26,310.90 216.75,307.27 217.27,303.59 217.82,299.85 218.39,296.06 219.00,292.21 219.64,288.31 220.31,284.35 221.01,280.33 221.75,276.25 222.53,272.10 223.34,267.90 224.19,263.62 225.08,259.27 226.01,254.86 226.98,250.37 228.00,245.81 229.06,241.17 230.16,236.46 231.32,231.66 232.52,226.78 233.78,221.81 235.09,216.76 236.46,211.61 237.88,206.37 239.36,201.03 240.91,195.60 242.52,190.05 244.19,184.40 245.94,178.64 247.76,172.77 249.65,166.78 251.62,160.66 253.67,154.42 255.81,148.04 258.04,141.53 260.35,134.87 262.77,128.07 265.28,121.12 267.91,114.00 270.64,106.72 273.48,99.27 276.45,91.64 279.54,83.82 282.76,75.80 286.13,67.59 289.64,59.15 293.30,50.50" fill="none" stroke="#000080" stroke-width="1" /><polyline points="424.76,749.43 424.63,749.07 424.50,748.71 424.36,748.35 424.23,747.99 424.09,747.63 423.96,747.26 423.82,746.90 423.69,746.53 423.56,746.16 423.42,745.79 423.28,745.42 423.15,745.05 423.01,744.68 422.88,744.30 422.74,743.93 422.60,743.55 422.47,743.17 422.33,742.80 422.19,742.42 422.05,742.04 421.92,741.65 421.78,741.27 421.64,740.89 421.50,740.50 421.36,740.11 421.22,739.72 421.08,739.34 420.95,738.94 420.81,738.55 420.67,738.16 420.53,737.76 420.39,737.37 420.25,736.97 420.11,736.57 419.96,736.17 419.82,735.77 419.68,735.37 419.54,734.97 419.40,734.56 419.26,734.16 419.11,733.75 418.97,733.34 418.83,732.93 418.68,732.52 418.54,732.10 418.40,731.69 418.25,731.27 418.11,730.86 417.96,730.44 417.82,730.02 417.67,729.60 417.52,729.17 417.38,728.75 417.23,728.32 417.08,727.90 416.94,727.47 416.79,727.04 416.64,726.61 416.49,726.17 416.34,725.74 416.20,725.30 416.05,724.87 415.90,724.43 415.75,723.99 415.60,723.55 415.45,723.10 415.29,722.66 415.14,722.21 414.99,721.76 414.84,721.31 414.69,720.86 414.53,720.41 414.38,719.96 414.22,719.50 414.07,719.04 413.92,718.58 413.76,718.12 413.61,717.66 413.45,717.19 413.30,716.73 413.14,716.26 412.99,715.79 412.83,715.31 412.68,714.84 412.52,714.36 412.37,713.88 412.21,713.40 412.05,712.92 411.90,712.44 411.74,711.95 411.58,711.46 411.42,710.98 411.26,710.48 411.10,709.99 410.94,709.50 410.78,709.00 410.62,708.50 410.46,708.01 410.30,707.50 410.13,707.00 409.97,706.50 409.80,705.99 409.64,705.49 409.47,704.98 409.31,704.47 409.14,703.95 408.97,703.44 408.80,702.93 408.63,702.41 408.46,701.89 408.28,701.37 408.11,700.85 407.93,700.33 407.76,699.81 407.58,699.28 407.40,698.75 407.22,698.23 407.04,697.70 406.85,697.17 406.67,696.64 406.48,696.10 406.30,695.57 406.11,695.04 405.92,694.50 405.72,693.96 405.53,693.42 405.34,692.88 405.14,692.34 404.94,691.80 404.74,691.26 404.54,690.71 404.34,690.16 404.14,689.61 403.93,689.06 403.73,688.51 403.52,687.96 403.31,687.40 403.10,686.84 402.89,686.29 402.68,685.73 402.46,685.16 402.25,684.60 402.03,684.03 401.81,683.47 401.59,682.90 401.37,682.33 401.15,681.75 400.93,681.18 400.70,680.60 400.48,680.03 400.25,679.44 400.02,678.86 399.79,678.28 399.56,677.69 399.32,677.10 399.09,676.51 398.85,675.92 398.62,675.33 398.38,674.73 398.14,674.13 397.90,673.53 397.66,672.93 397.41,672.32 397.17,671.71 396.92,671.10 396.67,670.49 396.42,669.87 396.17,669.26 395.92,668.64 395.67,668.01 395.42,667.39 395.16,666.76 394.90,666.13 394.65,665.50 394.39,664.86 394.13,664.23 393.86,663.59 393.60,662.95 393.33,662.30 393.07,661.66 392.80,661.01 392.53,660.36 392.25,659.70 391.98,659.05 391.70,658.39 391.42,657.73 391.14,657.06 390.86,656.40 390.58,655.73 390.29,655.06 390.00,654.39 389.72,653.71 389.42,653.03 389.13,652.35 388.84,651.67 388.54,650.98 388.24,650.29 387.94,649.60 387.64,648.90 387.34,648.20 387.03,647.50 386.73,646.80 386.42,646.09 386.11,645.38 385.80,644.67 385.48,643.95 385.17,643.23 384.85,642.51 384.53,641.79 384.21,641.06 383.88,640.33 383.56,639.59 383.23,638.85 382.90,638.11 382.57,637.36 382.24,636.62 381.91,635.86 381.57,635.11 381.24,634.35 380.90,633.59 380.56,632.82 380.21,632.05 379.87,631.28 379.52,630.50 379.17,629.72 378.82,628.93 378.47,628.15 378.12,627.35 377.76,626.56 377.40,625.76 377.04,624.96 376.68,624.15 376.32,623.34 375.95,622.52 375.58,621.70 375.21,620.88 374.84,620.05 374.47,619.22 374.09,618.39 373.71,617.55 373.33,616.71 372.95,615.86 372.56,615.01 372.18,614.16 371.79,613.30 371.39,612.44 371.00,611.57 370.60,610.70 370.20,609.82 369.80,608.95 369.40,608.06 368.99,607.17 368.59,606.28 368.18,605.39 367.76,604.48 367.35,603.58 366.93,602.67 366.51,601.76 366.09,600.84 365.66,599.91 365.24,598.99 364.81,598.05 364.37,597.12 363.94,596.18 363.50,595.23 363.06,594.28 362.62,593.32 362.18,592.36 361.73,591.40 361.28,590.43 360.83,589.45 360.37,588.47 359.92,587.49 359.46,586.50 358.99,585.51 358.53,584.51 358.06,583.50 357.59,582.50 357.11,581.48 356.64,580.46 356.16,579.44 355.67,578.41 355.19,577.38 354.70,576.34 354.21,575.30 353.72,574.25 353.22,573.19 352.72,572.13 352.22,571.07 351.72,569.99 351.21,568.92 350.71,567.83 350.19,566.74 349.68,565.65 349.17,564.55 348.65,563.44 348.13,562.33 347.61,561.21 347.09,560.08 346.56,558.95 346.03,557.81 345.50,556.66 344.97,555.51 344.44,554.35 343.91,553.18 343.37,552.00 342.83,550.82 342.29,549.63 341.75,548.43 341.21,547.23 340.67,546.02 340.12,544.80 339.58,543.57 339.03,542.33 338.48,541.09 337.94,539.84 337.39,538.58 336.84,537.31 336.29,536.03 335.74,534.74 335.19,533.44 334.64,532.14 334.08,530.82 333.53,529.50 332.98,528.17 332.43,526.83 331.87,525.48 331.32,524.12 330.76,522.75 330.20,521.38 329.64,519.99 329.08,518.60 328.52,517.20 327.96,515.79 327.39,514.36 326.83,512.93 326.27,511.49 325.70,510.04 325.14,508.58 324.58,507.11 324.01,505.63 323.45,504.14 322.89,502.64 322.33,501.13 321.76,499.60 321.20,498.06 320.64,496.52 320.08,494.96 319.53,493.39 318.97,491.80 318.41,490.21 317.86,488.60 317.31,486.98 316.76,485.34 316.21,483.70 315.67,482.04 315.13,480.36 314.59,478.67 314.05,476.97 313.51,475.25 312.98,473.52 312.46,471.77 311.93,470.01 311.41,468.23 310.90,466.43 310.39,464.62 309.88,462.79 309.38,460.95 308.88,459.09 308.39,457.20 307.91,455.31 307.43,453.39 306.95,451.45 306.49,449.50 306.03,447.53 305.57,445.54 305.11,443.54 304.66,441.51 304.21,439.48 303.76,437.42 303.32,435.35 302.89,433.26 302.45,431.15 302.03,429.02 301.61,426.87 301.19,424.70 300.78,422.51 300.38,420.30 299.98,418.07 299.59,415.82 299.21,413.54 298.83,411.25 298.47,408.92 298.11,406.58 297.76,404.21 297.42,401.82 297.08,399.40 296.76,396.95 296.45,394.48 296.15,391.98 295.87,389.45 295.59,386.89 295.33,384.30 295.07,381.69 294.84,379.04 294.61,376.36 294.41,373.64 294.21,370.89 294.04,368.11 293.88,365.29 293.73,362.44 293.61,359.55 293.50,356.62 293.42,353.64 293.35,350.63 293.31,347.58 293.28,344.49 293.29,341.35 293.31,338.16 293.36,334.93 293.44,331.65 293.54,328.32 293.67,324.93 293.83,321.50 294.02,318.02 294.23,314.48 294.46,310.90 294.72,307.27 295.01,303.59 295.32,299.85 295.67,296.06 296.04,292.21 296.44,288.31 296.87,284.35 297.33,280.33 297.82,276.25 298.35,272.10 298.91,267.90 299.51,263.62 300.15,259.27 300.82,254.86 301.54,250.37 302.29,245.81 303.09,241.17 303.93,236.46 304.82,231.66 305.75,226.78 306.74,221.81 307.77,216.76 308.86,211.61 310.01,206.37 311.21,201.03 312.46,195.60 313.78,190.05 315.17,184.40 316.62,178.64 318.14,172.77 319.73,166.78 321.40,160.66 323.14,154.42 324.97,148.04 326.88,141.53 328.88,134.87 330.97,128.07 333.16,121.12 335.45,114.00 337.85,106.72 340.35,99.27 342.98,91.64 345.72,83.82 348.59,75.80 351.60,67.59 354.75,59.15 358.04,50.50" fill="none" stroke="#000080" stroke-width="1" /><polyline points="482.80,749.43 482.75,749.07 482.69,748.71 482.63,748.35 482.58,747.99 482.52,747.63 482.47,747.26 482.41,746.90 482.36,746.53 482.30,746.16 482.25,745.79 482.20,745.42 482.14,745.05 482.09,744.68 482.03,744.30 481.98,743.93 481.92,743.55 481.87,743.17 481.82,742.80 481.76,742.42 481.71,742.04 481.66,741.65 481.61,741.27 481.55,740.89 481.50,740.50 481.45,740.11 481.40,739.72 481.34,739.34 481.29,738.94 481.24,738.55 481.19,738.16 481.14,737.76 481.09,737.37 481.04,736.97 480.99,736.57 480.94,736.17 480.89,735.77 480.84,735.37 480.79,734.97 480.74,734.56 480.69,734.16 480.64,733.75 480.59,733.34 480.54,732.93 480.49,732.52 480.44,732.10 480.39,731.69 480.34,731.27 480.30,730.86 480.25,730.44 480.20,730.02 480.15,729.60 480.10,729.17 480.06,728.75 480.01,728.32 479.96,727.90 479.92,727.47 479.87,727.04 479.82,726.61 479.77,726.17 479.73,725.74 479.68,725.30 479.64,724.87 479.59,724.43 479.54,723.99 479.50,723.55 479.45,723.10 479.41,722.66 479.36,722.21 479.32,721.76 479.27,721.31 479.23,720.86 479.18,720.41 479.14,719.96 479.10,719.50 479.05,719.04 479.01,718.58 478.97,718.12 478.92,717.66 478.88,717.19 478.84,716.73 478.80,716.26 478.76,715.79 478.72,715.31 478.68,714.84 478.64,714.36 478.60,713.88 478.56,713.40 478.52,712.92 478.48,712.44 478.44,711.95 478.41,711.46 478.37,710.98 478.33,710.48 478.29,709.99 478.26,709.50 478.22,709.00 478.18,708.50 478.14,708.01 478.11,707.50 478.07,707.00 478.03,706.50 477.99,705.99 477.95,705.49 477.92,704.98 477.88,704.47 477.84,703.95 477.80,703.44 477.76,702.93 477.72,702.41 477.69,701.89 477.65,701.37 477.61,700.85 477.56,700.33 477.52,699.81 477.48,699.28 477.44,698.75 477.40,698.23 477.35,697.70 477.31,697.17 477.27,696.64 477.22,696.10 477.18,695.57 477.13,695.04 477.08,694.50 477.03,693.96 476.99,693.42 476.94,692.88 476.89,692.34 476.84,691.80 476.79,691.26 476.73,690.71 476.68,690.16 476.63,689.61 476.58,689.06 476.52,688.51 476.47,687.96 476.41,687.40 476.36,686.84 476.30,686.29 476.25,685.73 476.19,685.16 476.13,684.60 476.08,684.03 476.02,683.47 475.96,682.90 475.90,682.33 475.84,681.75 475.78,681.18 475.72,680.60 475.66,680.03 475.60,679.44 475.54,678.86 475.48,678.28 475.41,677.69 475.35,677.10 475.29,676.51 475.23,675.92 475.16,675.33 475.10,674.73 475.03,674.13 474.97,673.53 474.90,672.93 474.84,672.32 474.77,671.71 474.71,671.10 474.64,670.49 474.57,669.87 474.51,669.26 474.44,668.64 474.37,668.01 474.30,667.39 474.24,666.76 474.17,666.13 474.10,665.50 474.03,664.86 473.96,664.23 473.89,663.59 473.82,662.95 473.75,662.30 473.68,661.66 473.61,661.01 473.53,660.36 473.46,659.70 473.39,659.05 473.31,658.39 473.24,657.73 473.16,657.06 473.08,656.40 473.01,655.73 472.93,655.06 472.85,654.39 472.77,653.71 472.69,653.03 472.61,652.35 472.53,651.67 472.44,650.98 472.36,650.29 472.28,649.60 472.20,648.90 472.11,648.20 472.03,647.50 471.94,646.80 471.85,646.09 471.77,645.38 471.68,644.67 471.59,643.95 471.50,643.23 471.41,642.51 471.32,641.79 471.23,641.06 471.14,640.33 471.05,639.59 470.96,638.85 470.86,638.11 470.77,637.36 470.68,636.62 470.58,635.86 470.49,635.11 470.39,634.35 470.29,633.59 470.20,632.82 470.10,632.05 470.00,631.28 469.90,630.50 469.80,629.72 469.70,628.93 469.60,628.15 469.50,627.35 469.39,626.56 469.29,625.76 469.19,624.96 469.08,624.15 468.97,623.34 468.87,622.52 468.76,621.70 468.65,620.88 468.54,620.05 468.43,619.22 468.31,618.39 468.20,617.55 468.09,616.71 467.97,615.86 467.85,615.01 467.74,614.16 467.62,613.30 467.50,612.44 467.37,611.57 467.25,610.70 467.13,609.82 467.00,608.95 466.87,608.06 466.75,607.17 466.62,606.28 466.48,605.39 466.35,604.48 466.22,603.58 466.08,602.67 465.94,601.76 465.80,600.84 465.66,599.91 465.52,598.99 465.38,598.05 465.23,597.12 465.08,596.18 464.93,595.23 464.78,594.28 464.63,593.32 464.47,592.36 464.31,591.40 464.15,590.43 463.99,589.45 463.82,588.47 463.66,587.49 463.49,586.50 463.32,585.51 463.14,584.51 462.97,583.50 462.79,582.50 462.61,581.48 462.42,580.46 462.24,579.44 462.05,578.41 461.85,577.38 461.66,576.34 461.46,575.30 461.26,574.25 461.05,573.19 460.85,572.13 460.64,571.07 460.43,569.99 460.21,568.92 459.99,567.83 459.77,566.74 459.55,565.65 459.32,564.55 459.09,563.44 458.86,562.33 458.62,561.21 458.38,560.08 458.14,558.95 457.90,557.81 457.65,556.66 457.40,555.51 457.15,554.35 456.89,553.18 456.63,552.00 456.37,550.82 456.10,549.63 455.84,548.43 455.56,547.23 455.29,546.02 455.01,544.80 454.73,543.57 454.45,542.33 454.16,541.09 453.87,539.84 453.58,538.58 453.28,537.31 452.99,536.03 452.69,534.74 452.38,533.44 452.07,532.14 451.76,530.82 451.45,529.50 451.13,528.17 450.81,526.83 450.49,525.48 450.16,524.12 449.83,522.75 449.49,521.38 449.14,519.99 448.80,518.60 448.44,517.20 448.09,515.79 447.73,514.36 447.36,512.93 447.00,511.49 446.62,510.04 446.24,508.58 445.86,507.11 445.48,505.63 445.09,504.14 444.69,502.64 444.30,501.13 443.89,499.60 443.49,498.06 443.08,496.52 442.66,494.96 442.25,493.39 441.83,491.80 441.40,490.21 440.97,488.60 440.54,486.98 440.11,485.34 439.67,483.70 439.23,482.04 438.78,480.36 438.34,478.67 437.89,476.97 437.44,475.25 436.98,473.52 436.52,471.77 436.07,470.01 435.60,468.23 435.14,466.43 434.68,464.62 434.21,462.79 433.74,460.95 433.28,459.09 432.81,457.20 432.34,455.31 431.87,453.39 431.40,451.45 430.93,449.50 430.46,447.53 429.98,445.54 429.50,443.54 429.02,441.51 428.54,439.48 428.06,437.42 427.57,435.35 427.08,433.26 426.59,431.15 426.10,429.02 425.60,426.87 425.11,424.70 424.61,422.51 424.12,420.30 423.63,418.07 423.13,415.82 422.64,413.54 422.15,411.25 421.66,408.92 421.18,406.58 420.69,404.21 420.21,401.82 419.73,399.40 419.26,396.95 418.79,394.48 418.33,391.98 417.87,389.45 417.42,386.89 416.98,384.30 416.54,381.69 416.11,379.04 415.69,376.36 415.28,373.64 414.88,370.89 414.49,368.11 414.11,365.29 413.74,362.44 413.38,359.55 413.04,356.62 412.72,353.64 412.41,350.63 412.11,347.58 411.83,344.49 411.57,341.35 411.33,338.16 411.11,334.93 410.91,331.65 410.73,328.32 410.58,324.93 410.45,321.50 410.34,318.02 410.26,314.48 410.19,310.90 410.14,307.27 410.12,303.59 410.11,299.85 410.13,296.06 410.18,292.21 410.25,288.31 410.34,284.35 410.47,280.33 410.62,276.25 410.80,272.10 411.01,267.90 411.25,263.62 411.53,259.27 411.83,254.86 412.18,250.37 412.56,245.81 412.98,241.17 413.44,236.46 413.94,231.66 414.48,226.78 415.07,221.81 415.71,216.76 416.39,211.61 417.12,206.37 417.91,201.03 418.75,195.60 419.64,190.05 420.60,184.40 421.62,178.64 422.70,172.77 423.84,166.78 425.06,160.66 426.35,154.42 427.72,148.04 429.16,141.53 430.69,134.87 432.31,128.07 434.01,121.12 435.81,114.00 437.71,106.72 439.72,99.27 441.83,91.64 444.06,83.82 446.41,75.80 448.89,67.59 451.50,59.15 454.25,50.50" fill="none" stroke="#000080" stroke-width="1" /><polyline points="541.35,749.43 541.35,749.07 541.35,748.71 541.36,748.35 541.36,747.99 541.36,747.63 541.37,747.26 541.37,746.90 541.37,746.53 541.38,746.16 541.38,745.79 541.39,745.42 541.40,745.05 541.40,744.68 541.41,744.30 541.42,743.93 541.42,743.55 541.43,743.17 541.44,742.80 541.45,742.42 541.46,742.04 541.47,741.65 541.48,741.27 541.49,740.89 541.50,740.50 541.51,740.11 541.52,739.72 541.54,739.34 541.55,738.94 541.56,738.55 541.58,738.16 541.59,737.76 541.61,737.37 541.62,736.97 541.64,736.57 541.65,736.17 541.67,735.77 541.69,735.37 541.71,734.97 541.72,734.56 541.74,734.16 541.76,733.75 541.78,733.34 541.80,732.93 541.82,732.52 541.84,732.10 541.86,731.69 541.89,731.27 541.91,730.86 541.93,730.44 541.96,730.02 541.98,729.60 542.00,729.17 542.03,728.75 542.05,728.32 542.08,727.90 542.11,727.47 542.13,727.04 542.16,726.61 542.19,726.17 542.22,725.74 542.25,725.30 542.28,724.87 542.31,724.43 542.34,723.99 542.37,723.55 542.40,723.10 542.43,722.66 542.47,722.21 542.50,721.76 542.54,721.31 542.57,720.86 542.60,720.41 542.64,719.96 542.68,719.50 542.71,719.04 542.75,718.58 542.79,718.12 542.83,717.66 542.87,717.19 542.91,716.73 542.96,716.26 543.00,715.79 543.04,715.31 543.09,714.84 543.13,714.36 543.18,713.88 543.23,713.40 543.27,712.92 543.32,712.44 543.37,711.95 543.42,711.46 543.47,710.98 543.52,710.48 543.58,709.99 543.63,709.50 543.68,709.00 543.73,708.50 543.79,708.01 543.84,707.50 543.90,707.00 543.95,706.50 544.01,705.99 544.06,705.49 544.12,704.98 544.18,704.47 544.23,703.95 544.29,703.44 544.35,702.93 544.41,702.41 544.46,701.89 544.52,701.37 544.58,700.85 544.64,700.33 544.70,699.81 544.76,699.28 544.82,698.75 544.88,698.23 544.93,697.70 544.99,697.17 545.05,696.64 545.11,696.10 545.17,695.57 545.23,695.04 545.29,694.50 545.35,693.96 545.40,693.42 545.46,692.88 545.52,692.34 545.58,691.80 545.64,691.26 545.70,690.71 545.75,690.16 545.81,689.61 545.87,689.06 545.93,688.51 545.99,687.96 546.05,687.40 546.11,686.84 546.17,686.29 546.23,685.73 546.29,685.16 546.35,684.60 546.41,684.03 546.47,683.47 546.53,682.90 546.60,682.33 546.66,681.75 546.72,681.18 546.78,680.60 546.85,680.03 546.91,679.44 546.97,678.86 547.04,678.28 547.10,677.69 547.17,677.10 547.23,676.51 547.30,675.92 547.36,675.33 547.43,674.73 547.50,674.13 547.57,673.53 547.63,672.93 547.70,672.32 547.77,671.71 547.84,671.10 547.91,670.49 547.98,669.87 548.06,669.26 548.13,668.64 548.20,668.01 548.28,667.39 548.35,666.76 548.43,666.13 548.50,665.50 548.58,664.86 548.66,664.23 548.73,663.59 548.81,662.95 548.89,662.30 548.97,661.66 549.05,661.01 549.13,660.36 549.21,659.70 549.29,659.05 549.37,658.39 549.45,657.73 549.53,657.06 549.62,656.40 549.70,655.73 549.78,655.06 549.87,654.39 549.95,653.71 550.04,653.03 550.12,652.35 550.21,651.67 550.29,650.98 550.38,650.29 550.47,649.60 550.56,648.90 550.65,648.20 550.74,647.50 550.83,646.80 550.92,646.09 551.01,645.38 551.10,644.67 551.19,643.95 551.29,643.23 551.38,642.51 551.48,641.79 551.58,641.06 551.67,640.33 551.77,639.59 551.87,638.85 551.97,638.11 552.07,637.36 552.17,636.62 552.27,635.86 552.38,635.11 552.48,634.35 552.59,633.59 552.69,632.82 552.80,632.05 552.91,631.28 553.02,630.50 553.13,629.72 553.24,628.93 553.35,628.15 553.46,627.35 553.58,626.56 553.69,625.76 553.81,624.96 553.92,624.15 554.04,623.34 554.16,622.52 554.28,621.70 554.40,620.88 554.52,620.05 554.64,619.22 554.76,618.39 554.89,617.55 555.01,616.71 555.14,615.86 555.26,615.01 555.39,614.16 555.52,613.30 555.65,612.44 555.78,611.57 555.91,610.70 556.04,609.82 556.17,608.95 556.30,608.06 556.44,607.17 556.57,606.28 556.71,605.39 556.84,604.48 556.98,603.58 557.12,602.67 557.26,601.76 557.39,600.84 557.53,599.91 557.68,598.99 557.82,598.05 557.96,597.12 558.10,596.18 558.24,595.23 558.39,594.28 558.53,593.32 558.68,592.36 558.83,591.40 558.97,590.43 559.12,589.45 559.27,588.47 559.42,587.49 559.57,586.50 559.71,585.51 559.86,584.51 560.01,583.50 560.17,582.50 560.32,581.48 560.47,580.46 560.62,579.44 560.77,578.41 560.92,577.38 561.08,576.34 561.23,575.30 561.38,574.25 561.54,573.19 561.69,572.13 561.84,571.07 562.00,569.99 562.16,568.92 562.31,567.83 562.47,566.74 562.63,565.65 562.78,564.55 562.94,563.44 563.10,562.33 563.26,561.21 563.42,560.08 563.58,558.95 563.75,557.81 563.91,556.66 564.07,555.51 564.24,554.35 564.40,553.18 564.57,552.00 564.74,550.82 564.90,549.63 565.07,548.43 565.24,547.23 565.41,546.02 565.59,544.80 565.76,543.57 565.93,542.33 566.11,541.09 566.29,539.84 566.46,538.58 566.64,537.31 566.82,536.03 567.00,534.74 567.19,533.44 567.37,532.14 567.56,530.82 567.74,529.50 567.93,528.17 568.12,526.83 568.31,525.48 568.50,524.12 568.68,522.75 568.87,521.38 569.06,519.99 569.25,518.60 569.43,517.20 569.62,515.79 569.81,514.36 570.00,512.93 570.18,511.49 570.37,510.04 570.56,508.58 570.75,507.11 570.93,505.63 571.12,504.14 571.31,502.64 571.50,501.13 571.69,499.60 571.88,498.06 572.07,496.52 572.26,494.96 572.44,493.39 572.63,491.80 572.82,490.21 573.01,488.60 573.21,486.98 573.40,485.34 573.59,483.70 573.78,482.04 573.97,480.36 574.16,478.67 574.36,476.97 574.55,475.25 574.74,473.52 574.94,471.77 575.13,470.01 575.33,468.23 575.53,466.43 575.72,464.62 575.92,462.79 576.12,460.95 576.32,459.09 576.52,457.20 576.72,455.31 576.92,453.39 577.12,451.45 577.32,449.50 577.52,447.53 577.72,445.54 577.92,443.54 578.11,441.51 578.30,439.48 578.49,437.42 578.67,435.35 578.85,433.26 579.03,431.15 579.20,429.02 579.38,426.87 579.54,424.70 579.71,422.51 579.87,420.30 580.03,418.07 580.18,415.82 580.34,413.54 580.48,411.25 580.63,408.92 580.77,406.58 580.91,404.21 581.05,401.82 581.18,399.40 581.31,396.95 581.43,394.48 581.56,391.98 581.68,389.45 581.80,386.89 581.91,384.30 582.02,381.69 582.13,379.04 582.24,376.36 582.35,373.64 582.45,370.89 582.55,368.11 582.65,365.29 582.75,362.44 582.84,359.55 582.94,356.62 583.03,353.64 583.13,350.63 583.22,347.58 583.32,344.49 583.41,341.35 583.51,338.16 583.61,334.93 583.71,331.65 583.81,328.32 583.92,324.93 584.03,321.50 584.15,318.02 584.26,314.48 584.37,310.90 584.48,307.27 584.59,303.59 584.69,299.85 584.80,296.06 584.91,292.21 585.02,288.31 585.14,284.35 585.25,280.33 585.38,276.25 585.50,272.10 585.63,267.90 585.77,263.62 585.92,259.27 586.07,254.86 586.24,250.37 586.42,245.81 586.61,241.17 586.82,236.46 587.05,231.66 587.29,226.78 587.56,221.81 587.84,216.76 588.15,211.61 588.49,206.37 588.86,201.03 589.26,195.60 589.69,190.05 590.16,184.40 590.67,178.64 591.22,172.77 591.82,166.78 592.47,160.66 593.17,154.42 593.92,148.04 594.74,141.53 595.61,134.87 596.56,128.07 597.58,121.12 598.67,114.00 599.85,106.72 601.11,99.27 602.46,91.64 603.91,83.82 605.47,75.80 607.13,67.59 608.91,59.15 610.81,50.50" fill="none" stroke="#000080" stroke-width="1" /><polyline points="600.41,749.43 600.45,749.07 600.49,748.71 600.53,748.35 600.57,747.99 600.61,747.63 600.65,747.26 600.70,746.90 600.74,746.53 600.78,746.16 600.83,745.79 600.87,745.42 600.92,745.05 600.96,744.68 601.01,744.30 601.05,743.93 601.10,743.55 601.15,743.17 601.20,742.80 601.25,742.42 601.30,742.04 601.35,741.65 601.40,741.27 601.45,740.89 601.50,740.50 601.55,740.11 601.61,739.72 601.66,739.34 601.71,738.94 601.77,738.55 601.83,738.16 601.88,737.76 601.94,737.37 602.00,736.97 602.05,736.57 602.11,736.17 602.17,735.77 602.23,735.37 602.29,734.97 602.36,734.56 602.42,734.16 602.48,733.75 602.54,733.34 602.61,732.93 602.67,732.52 602.74,732.10 602.80,731.69 602.87,731.27 602.94,730.86 603.01,730.44 603.08,730.02 603.14,729.60 603.22,729.17 603.29,728.75 603.36,728.32 603.43,727.90 603.50,727.47 603.58,727.04 603.65,726.61 603.73,726.17 603.80,725.74 603.88,725.30 603.96,724.87 604.03,724.43 604.11,723.99 604.19,723.55 604.27,723.10 604.35,722.66 604.44,722.21 604.52,721.76 604.60,721.31 604.69,720.86 604.77,720.41 604.86,719.96 604.94,719.50 605.03,719.04 605.12,718.58 605.21,718.12 605.30,717.66 605.39,717.19 605.49,716.73 605.58,716.26 605.68,715.79 605.77,715.31 605.87,714.84 605.97,714.36 606.07,713.88 606.17,713.40 606.27,712.92 606.37,712.44 606.48,711.95 606.58,711.46 606.69,710.98 606.79,710.48 606.90,709.99 607.01,709.50 607.11,709.00 607.22,708.50 607.33,708.01 607.44,707.50 607.56,707.00 607.67,706.50 607.78,705.99 607.89,705.49 608.01,704.98 608.12,704.47 608.24,703.95 608.36,703.44 608.47,702.93 608.59,702.41 608.71,701.89 608.83,701.37 608.94,700.85 609.06,700.33 609.18,699.81 609.30,699.28 609.42,698.75 609.54,698.23 609.66,697.70 609.79,697.17 609.91,696.64 610.03,696.10 610.15,695.57 610.27,695.04 610.39,694.50 610.52,693.96 610.64,693.42 610.76,692.88 610.89,692.34 611.01,691.80 611.14,691.26 611.26,690.71 611.39,690.16 611.51,689.61 611.64,689.06 611.77,688.51 611.89,687.96 612.02,687.40 612.15,686.84 612.28,686.29 612.41,685.73 612.54,685.16 612.67,684.60 612.80,684.03 612.93,683.47 613.07,682.90 613.20,682.33 613.33,681.75 613.47,681.18 613.60,680.60 613.74,680.03 613.88,679.44 614.01,678.86 614.15,678.28 614.29,677.69 614.43,677.10 614.57,676.51 614.72,675.92 614.86,675.33 615.00,674.73 615.15,674.13 615.30,673.53 615.44,672.93 615.59,672.32 615.74,671.71 615.89,671.10 616.04,670.49 616.19,669.87 616.35,669.26 616.50,668.64 616.66,668.01 616.81,667.39 616.97,666.76 617.13,666.13 617.29,665.50 617.45,664.86 617.62,664.23 617.78,663.59 617.94,662.95 618.11,662.30 618.28,661.66 618.44,661.01 618.61,660.36 618.78,659.70 618.95,659.05 619.12,658.39 619.30,657.73 619.47,657.06 619.64,656.40 619.82,655.73 619.99,655.06 620.17,654.39 620.35,653.71 620.53,653.03 620.71,652.35 620.89,651.67 621.08,650.98 621.26,650.29 621.45,649.60 621.64,648.90 621.83,648.20 622.02,647.50 622.21,646.80 622.40,646.09 622.59,645.38 622.79,644.67 622.99,643.95 623.18,643.23 623.38,642.51 623.58,641.79 623.79,641.06 623.99,640.33 624.20,639.59 624.40,638.85 624.61,638.11 624.82,637.36 625.04,636.62 625.25,635.86 625.47,635.11 625.68,634.35 625.90,633.59 626.12,632.82 626.35,632.05 626.57,631.28 626.80,630.50 627.03,629.72 627.26,628.93 627.49,628.15 627.72,627.35 627.96,626.56 628.20,625.76 628.44,624.96 628.68,624.15 628.92,623.34 629.17,622.52 629.41,621.70 629.66,620.88 629.91,620.05 630.16,619.22 630.42,618.39 630.68,617.55 630.93,616.71 631.19,615.86 631.46,615.01 631.72,614.16 631.98,613.30 632.25,612.44 632.52,611.57 632.79,610.70 633.07,609.82 633.34,608.95 633.62,608.06 633.90,607.17 634.18,606.28 634.46,605.39 634.75,604.48 635.04,603.58 635.33,602.67 635.62,601.76 635.91,600.84 636.21,599.91 636.51,598.99 636.81,598.05 637.11,597.12 637.41,596.18 637.72,595.23 638.03,594.28 638.34,593.32 638.65,592.36 638.97,591.40 639.28,590.43 639.60,589.45 639.92,588.47 640.25,587.49 640.57,586.50 640.90,585.51 641.23,584.51 641.56,583.50 641.89,582.50 642.23,581.48 642.57,580.46 642.91,579.44 643.25,578.41 643.59,577.38 643.94,576.34 644.29,575.30 644.64,574.25 644.99,573.19 645.34,572.13 645.70,571.07 646.06,569.99 646.43,568.92 646.79,567.83 647.16,566.74 647.53,565.65 647.90,564.55 648.28,563.44 648.66,562.33 649.04,561.21 649.43,560.08 649.82,558.95 650.21,557.81 650.60,556.66 651.00,555.51 651.40,554.35 651.80,553.18 652.21,552.00 652.62,550.82 653.04,549.63 653.46,548.43 653.88,547.23 654.31,546.02 654.74,544.80 655.17,543.57 655.61,542.33 656.05,541.09 656.50,539.84 656.95,538.58 657.40,537.31 657.86,536.03 658.33,534.74 658.79,533.44 659.27,532.14 659.75,530.82 660.23,529.50 660.72,528.17 661.21,526.83" fill="none" stroke="#000080" stroke-width="1" /><line x1="121.50" y1="50.00" x2="121.50" y2="749.50" stroke="#004a00" stroke-width="1" /><line x1="181.50" y1="50.00" x2="181.50" y2="749.50" stroke="#004a00" stroke-width="1" /><line x1="241.50" y1="50.00" x2="241.50" y2="749.50" stroke="#004a00" stroke-width="1" /><line x1="301.50" y1="50.00" x2="301.50" y2="749.50" stroke="#004a00" stroke-width="1" /><line x1="361.50" y1="50.00" x2="361.50" y2="749.50" stroke="#004a00" stroke-width="1" /><line x1="421.50" y1="50.00" x2="421.50" y2="749.50" stroke="#004a00" stroke-width="1" /><line x1="481.50" y1="50.00" x2="481.50" y2="749.50" stroke="#004a00" stroke-width="1" /><line x1="541.50" y1="50.00" x2="541.50" y2="749.50" stroke="#004a00" stroke-width="1" /><line x1="601.50" y1="50.00" x2="601.50" y2="749.50" stroke="#004a00" stroke-width="1" /><line x1="91.50" y1="50.50" x2="61.50" y2="80.50" stroke="#fff" stroke-width="1" /><line x1="151.50" y1="50.50" x2="61.50" y2="140.50" stroke="#fff" stroke-width="1" /><line x1="211.50" y1="50.50" x2="61.50" y2="200.50" stroke="#fff" stroke-width="1" /><line x1="271.50" y1="50.50" x2="61.50" y2="260.50" stroke="#fff" stroke-width="1" /><line x1="331.50" y1="50.50" x2="61.50" y2="320.50" stroke="#fff" stroke-width="1" /><line x1="391.50" y1="50.50" x2="61.50" y2="380.50" stroke="#fff" stroke-width="1" /><line x1="451.50" y1="50.50" x2="61.50" y2="440.50" stroke="#fff" stroke-width="1" /><line x1="511.50" y1="50.50" x2="61.50" y2="500.50" stroke="#fff" stroke-width="1" /><line x1="571.50" y1="50.50" x2="61.50" y2="560.50" stroke="#fff" stroke-width="1" /><line x1="631.50" y1="50.50" x2="61.50" y2="620.50" stroke="#fff" stroke-width="1" /><line x1="661.50" y1="80.50" x2="61.50" y2="680.50" stroke="#fff" stroke-width="1" /><line x1="661.50" y1="140.50" x2="61.50" y2="740.50" stroke="#fff" stroke-width="1" /><line x1="661.50" y1="200.50" x2="112.50" y2="749.50" stroke="#fff" stroke-width="1" /><line x1="661.50" y1="260.50" x2="172.50" y2="749.50" stroke="#fff" stroke-width="1" /><line x1="661.50" y1="320.50" x2="232.50" y2="749.50" stroke="#fff" stroke-width="1" /><line x1="661.50" y1="380.50" x2="292.50" y2="749.50" stroke="#fff" stroke-width="1" /><line x1="661.50" y1="440.50" x2="352.50" y2="749.50" stroke="#fff" stroke-width="1" /><line x1="661.50" y1="500.50" x2="412.50" y2="749.50" stroke="#fff" stroke-width="1" /><line x1="661.50" y1="560.50" x2="472.50" y2="749.50" stroke="#fff" stroke-width="1" /><line x1="661.50" y1="620.50" x2="532.50" y2="749.50" stroke="#fff" stroke-width="1" /><line x1="661.50" y1="680.50" x2="592.50" y2="749.50" stroke="#fff" stroke-width="1" /><line x1="661.50" y1="740.50" x2="652.50" y2="749.50" stroke="#fff" stroke-width="1" /></g><g><rect x="56" y="50" width="611" height="1" fill="#fff"/><rect x="56" y="321" width="611" height="1" fill="#fff"/><rect x="56" y="449" width="611" height="1" fill="#fff"/><rect x="56" y="529" width="611" height="1" fill="#fff"/><rect x="56" y="586" width="611" height="1" fill="#fff"/><rect x="56" y="630" width="611" height="1" fill="#fff"/><rect x="56" y="665" width="611" height="1" fill="#fff"/><rect x="56" y="694" width="611" height="1" fill="#fff"/><rect x="56" y="719" width="611" height="1" fill="#fff"/><rect x="56" y="740" width="606" height="1" fill="#fff"/></g><rect x="61" y="50" width="1" height="705" fill="#fff"/><rect x="661" y="50" width="1" height="705" fill="#fff"/><rect x="61" y="749" width="601" height="1" fill="#fff"/><text x="52.5" y="54.5" fill="#fff" font-size="12" text-anchor="end" font-weight="normal" >100</text><text x="670.0" y="54.5" fill="#fff" font-size="12" text-anchor="start" font-weight="normal" textLength="46.6" lengthAdjust="spacingAndGlyphs" >16090m</text><text x="52.5" y="325.5" fill="#fff" font-size="12" text-anchor="end" font-weight="normal" >200</text><text x="670.0" y="325.5" fill="#fff" font-size="12" text-anchor="start" font-weight="normal" textLength="44.7" lengthAdjust="spacingAndGlyphs" >11711m</text><text x="52.5" y="453.5" fill="#fff" font-size="12" text-anchor="end" font-weight="normal" >300</text><text x="670.0" y="453.5" fill="#fff" font-size="12" text-anchor="start" font-weight="normal" textLength="39.4" lengthAdjust="spacingAndGlyphs" >9120m</text><text x="52.5" y="533.5" fill="#fff" font-size="12" text-anchor="end" font-weight="normal" >400</text><text x="670.0" y="533.5" fill="#fff" font-size="12" text-anchor="start" font-weight="normal" textLength="39.4" lengthAdjust="spacingAndGlyphs" >7178m</text><text x="52.5" y="590.5" fill="#fff" font-size="12" text-anchor="end" font-weight="normal" >500</text><text x="670.0" y="590.5" fill="#fff" font-size="12" text-anchor="start" font-weight="normal" textLength="39.4" lengthAdjust="spacingAndGlyphs" >5587m</text><text x="52.5" y="634.5" fill="#fff" font-size="12" text-anchor="end" font-weight="normal" >600</text><text x="670.0" y="634.5" fill="#fff" font-size="12" text-anchor="start" font-weight="normal" textLength="39.4" lengthAdjust="spacingAndGlyphs" >4232m</text><text x="52.5" y="669.5" fill="#fff" font-size="12" text-anchor="end" font-weight="normal" >700</text><text x="670.0" y="669.5" fill="#fff" font-size="12" text-anchor="start" font-weight="normal" textLength="39.4" lengthAdjust="spacingAndGlyphs" >3048m</text><text x="52.5" y="698.5" fill="#fff" font-size="12" text-anchor="end" font-weight="normal" >800</text><text x="670.0" y="698.5" fill="#fff" font-size="12" text-anchor="start" font-weight="normal" textLength="39.4" lengthAdjust="spacingAndGlyphs" >1992m</text><text x="52.5" y="723.5" fill="#fff" font-size="12" text-anchor="end" font-weight="normal" >900</text><text x="670.0" y="723.5" fill="#fff" font-size="12" text-anchor="start" font-weight="normal" textLength="39.4" lengthAdjust="spacingAndGlyphs" >1036m</text><text x="52.5" y="744.5" fill="#fff" font-size="12" text-anchor="end" font-weight="normal" >1000</text><text x="62.5" y="28.7" fill="#fff" font-size="16.4" text-anchor="start" font-weight="bold" textLength="242.5" lengthAdjust="spacingAndGlyphs" >Station: 06610 Payerne (LSMP)</text><text x="329.0" y="28.7" fill="#fff" font-size="16.4" text-anchor="start" font-weight="bold" textLength="129.0" lengthAdjust="spacingAndGlyphs" >Date: 25.03.2025</text><text x="481.0" y="28.7" fill="#fff" font-size="16.4" text-anchor="start" font-weight="bold" textLength="91.0" lengthAdjust="spacingAndGlyphs" >Time: 1200Z</text><text x="894.5" y="39.6" fill="#fff" font-size="12.7" text-anchor="start" font-weight="normal" >Parameter</text><rect x="894.5" y="42" width="59.5" height="1" fill="#fff"/><text x="1124.0" y="39.6" fill="#fff" font-size="12.7" text-anchor="end" font-weight="normal" >Value LCL</text><rect x="1064.2" y="42" width="59.8" height="1" fill="#fff"/><text x="1214.0" y="39.6" fill="#fff" font-size="12.7" text-anchor="end" font-weight="normal" >Value CCL</text><rect x="1152.2" y="42" width="61.8" height="1" fill="#fff"/><text x="1230.3" y="39.6" fill="#fff" font-size="12.7" text-anchor="start" font-weight="normal" >Unit</text><rect x="1230.3" y="42" width="22.7" height="1" fill="#fff"/><text x="894.5" y="61.3" fill="#fff" font-size="12.7" text-anchor="start" font-weight="normal" word-spacing="0.9">Convective Temperature:</text><text x="1124.0" y="61.3" fill="#00ff00" font-size="12.7" text-anchor="end" font-weight="normal" >12.96</text><text x="1230.3" y="61.3" fill="#fff" font-size="12.7" text-anchor="start" font-weight="normal" word-spacing="1.2">[°C]</text><text x="894.5" y="78.4" fill="#fff" font-size="12.7" text-anchor="start" font-weight="normal" word-spacing="0.9">Snowfall Height:</text><text x="1124.0" y="78.4" fill="#ffffff" font-size="12.7" text-anchor="end" font-weight="normal" >1970.20</text><text x="1230.3" y="78.4" fill="#fff" font-size="12.7" text-anchor="start" font-weight="normal" word-spacing="1.2">[m]</text><text x="894.5" y="123.7" fill="#fff" font-size="12.7" text-anchor="start" font-weight="normal" word-spacing="0.9">Lifted Index:</text><text x="1124.0" y="123.7" fill="#ff0000" font-size="12.7" text-anchor="end" font-weight="normal" >-0.52</text><text x="1214.0" y="123.7" fill="#ffff00" font-size="12.7" text-anchor="end" font-weight="normal" >-0.11</text><text x="1230.3" y="123.7" fill="#fff" font-size="12.7" text-anchor="start" font-weight="normal" word-spacing="1.2">[°C]</text><text x="894.5" y="140.5" fill="#fff" font-size="12.7" text-anchor="start" font-weight="normal" word-spacing="0.9">CAPE ML:</text><text x="1124.0" y="140.5" fill="#ff0000" font-size="12.7" text-anchor="end" font-weight="normal" >222.26</text><text x="1214.0" y="140.5" fill="#00ff00" font-size="12.7" text-anchor="end" font-weight="normal" >166.31</text><text x="1230.3" y="140.5" fill="#fff" font-size="12.7" text-anchor="start" font-weight="normal" word-spacing="1.2">[J/kg]</text><text x="894.5" y="157.7" fill="#fff" font-size="12.7" text-anchor="start" font-weight="normal" word-spacing="0.9">CINH | LSI (LCL: 861mB):</text><text x="1124.0" y="157.7" fill="#ff0000" font-size="12.7" text-anchor="end" font-weight="normal" >8.43</text><text x="1124.0" y="157.7" fill="#ff0000" font-size="12.7" text-anchor="start" font-weight="normal" >,</text><text x="1137.0" y="157.7" fill="#ff0000" font-size="12.7" text-anchor="start" font-weight="normal" >-1.67</text><text x="1230.3" y="157.7" fill="#fff" font-size="12.7" text-anchor="start" font-weight="normal" word-spacing="1.2">[J/kg], [°C]</text><text x="894.5" y="174.6" fill="#fff" font-size="12.7" text-anchor="start" font-weight="normal" word-spacing="0.9">CAPE SFC:</text><text x="1124.0" y="174.6" fill="#00ff00" font-size="12.7" text-anchor="end" font-weight="normal" >360.37</text><text x="1214.0" y="174.6" fill="#00ff00" font-size="12.7" text-anchor="end" font-weight="normal" >211.22</text><text x="1230.3" y="174.6" fill="#fff" font-size="12.7" text-anchor="start" font-weight="normal" word-spacing="1.2">[J/kg]</text><text x="894.5" y="191.6" fill="#fff" font-size="12.7" text-anchor="start" font-weight="normal" word-spacing="0.9">CAPE MU | CINH MU:</text><text x="1124.0" y="191.6" fill="#00ff00" font-size="12.7" text-anchor="end" font-weight="normal" >360.37</text><text x="1124.0" y="191.6" fill="#00ff00" font-size="12.7" text-anchor="start" font-weight="normal" >,</text><text x="1137.0" y="191.6" fill="#ff0000" font-size="12.7" text-anchor="start" font-weight="normal" >0.00</text><text x="1230.3" y="191.6" fill="#fff" font-size="12.7" text-anchor="start" font-weight="normal" word-spacing="1.2">[J/kg]</text><text x="894.5" y="208.8" fill="#fff" font-size="12.7" text-anchor="start" font-weight="normal" word-spacing="0.9">3km SFC CAPE | IL CAPE:</text><text x="1124.0" y="208.8" fill="#ff0000" font-size="12.7" text-anchor="end" font-weight="normal" >175.44</text><text x="1124.0" y="208.8" fill="#ff0000" font-size="12.7" text-anchor="start" font-weight="normal" >,</text><text x="1137.0" y="208.8" fill="#00ff00" font-size="12.7" text-anchor="start" font-weight="normal" >166.35</text><text x="1230.3" y="208.8" fill="#fff" font-size="12.7" text-anchor="start" font-weight="normal" word-spacing="1.2">[J/kg]</text><text x="894.5" y="225.6" fill="#fff" font-size="12.7" text-anchor="start" font-weight="normal" word-spacing="0.9">DCAPE (LFS = 766mB):</text><text x="1124.0" y="225.6" fill="#00ff00" font-size="12.7" text-anchor="end" font-weight="normal" >106.16</text><text x="1230.3" y="225.6" fill="#fff" font-size="12.7" text-anchor="start" font-weight="normal" word-spacing="1.2">[J/kg]</text><text x="894.5" y="242.5" fill="#fff" font-size="12.7" text-anchor="start" font-weight="normal" word-spacing="0.9">850-600 Lapse Rate:</text><text x="1124.0" y="242.5" fill="#ffff00" font-size="12.7" text-anchor="end" font-weight="normal" >18.04</text><text x="1230.3" y="242.5" fill="#fff" font-size="12.7" text-anchor="start" font-weight="normal" word-spacing="1.2">[°C]</text><text x="894.5" y="259.8" fill="#fff" font-size="12.7" text-anchor="start" font-weight="normal" word-spacing="0.9">FM Hail Size | SHIP | LHP:</text><text x="1124.0" y="259.8" fill="#ffff00" font-size="12.7" text-anchor="end" font-weight="normal" >0.6 - 1.3</text><text x="1124.0" y="259.8" fill="#ffff00" font-size="12.7" text-anchor="start" font-weight="normal" >,</text><text x="1137.0" y="259.8" fill="#00ff00" font-size="12.7" text-anchor="start" font-weight="normal" >0.29,</text><text x="1172.3" y="259.8" fill="#00ff00" font-size="12.7" text-anchor="start" font-weight="normal" >0.00</text><text x="1230.3" y="259.8" fill="#fff" font-size="12.7" text-anchor="start" font-weight="normal" word-spacing="1.2">[cm], [1], [1]</text><text x="894.5" y="276.7" fill="#fff" font-size="12.7" text-anchor="start" font-weight="normal" word-spacing="0.9">Estofex Exp. Hail Param:</text><text x="1124.0" y="276.7" fill="#ff0000" font-size="12.7" text-anchor="end" font-weight="normal" >3.07</text><text x="1230.3" y="276.7" fill="#fff" font-size="12.7" text-anchor="start" font-weight="normal" word-spacing="1.2">[cm]</text><text x="894.5" y="293.9" fill="#fff" font-size="12.7" text-anchor="start" font-weight="normal" word-spacing="0.9">Max. Hail Size (OLD, MU, IL):</text><text x="1124.0" y="293.9" fill="#00ff00" font-size="12.7" text-anchor="end" font-weight="normal" >0.50</text><text x="1124.0" y="293.9" fill="#00ff00" font-size="12.7" text-anchor="start" font-weight="normal" >,</text><text x="1137.0" y="293.9" fill="#ffff00" font-size="12.7" text-anchor="start" font-weight="normal" >1.56,</text><text x="1172.3" y="293.9" fill="#ffff00" font-size="12.7" text-anchor="start" font-weight="normal" >1.49</text><text x="1230.3" y="293.9" fill="#fff" font-size="12.7" text-anchor="start" font-weight="normal" word-spacing="1.2">[cm]</text><text x="894.5" y="313.7" fill="#fff" font-size="12.7" text-anchor="start" font-weight="normal" word-spacing="0.9">LCL / CCL (AGL):</text><text x="1124.0" y="313.7" fill="#ff0000" font-size="12.7" text-anchor="end" font-weight="normal" >906.68</text><text x="1214.0" y="313.7" fill="#ff0000" font-size="12.7" text-anchor="end" font-weight="normal" >836.90</text><text x="1230.3" y="313.7" fill="#fff" font-size="12.7" text-anchor="start" font-weight="normal" word-spacing="1.2">[m]</text><text x="894.5" y="330.6" fill="#fff" font-size="12.7" text-anchor="start" font-weight="normal" word-spacing="0.9">Convective Height:</text><text x="1124.0" y="330.6" fill="#ffff00" font-size="12.7" text-anchor="end" font-weight="normal" >4.54</text><text x="1214.0" y="330.6" fill="#ffff00" font-size="12.7" text-anchor="end" font-weight="normal" >4.39</text><text x="1230.3" y="330.6" fill="#fff" font-size="12.7" text-anchor="start" font-weight="normal" word-spacing="1.2">[km]</text><text x="894.5" y="375.6" fill="#fff" font-size="12.7" text-anchor="start" font-weight="normal" word-spacing="0.9">Showalter Index:</text><text x="1124.0" y="375.6" fill="#ff0000" font-size="12.7" text-anchor="end" font-weight="normal" >0.65</text><text x="1230.3" y="375.6" fill="#fff" font-size="12.7" text-anchor="start" font-weight="normal" word-spacing="1.2">[°C]</text><text x="894.5" y="392.4" fill="#fff" font-size="12.7" text-anchor="start" font-weight="normal" word-spacing="0.9">Modified Thompson Index:</text><text x="1124.0" y="392.4" fill="#ff0000" font-size="12.7" text-anchor="end" font-weight="normal" >36.77</text><text x="1230.3" y="392.4" fill="#fff" font-size="12.7" text-anchor="start" font-weight="normal" word-spacing="1.2">[°C]</text><text x="894.5" y="409.8" fill="#fff" font-size="12.7" text-anchor="start" font-weight="normal" word-spacing="0.9">Total Totals Index:</text><text x="1124.0" y="409.8" fill="#ff0000" font-size="12.7" text-anchor="end" font-weight="normal" >55.20</text><text x="1230.3" y="409.8" fill="#fff" font-size="12.7" text-anchor="start" font-weight="normal" word-spacing="1.2">[°C]</text><text x="894.5" y="426.7" fill="#fff" font-size="12.7" text-anchor="start" font-weight="normal" word-spacing="0.9">KO Index:</text><text x="1124.0" y="426.7" fill="#ffff00" font-size="12.7" text-anchor="end" font-weight="normal" >-7.52</text><text x="1230.3" y="426.7" fill="#fff" font-size="12.7" text-anchor="start" font-weight="normal" word-spacing="1.2">[1]</text><text x="894.5" y="443.9" fill="#fff" font-size="12.7" text-anchor="start" font-weight="normal" word-spacing="0.9">Craven SigSvr / 1000:</text><text x="1124.0" y="443.9" fill="#ffff00" font-size="12.7" text-anchor="end" font-weight="normal" >3.86</text><text x="1230.3" y="443.9" fill="#fff" font-size="12.7" text-anchor="start" font-weight="normal" word-spacing="1.2">[m^3/s^3]</text><text x="894.5" y="460.7" fill="#fff" font-size="12.7" text-anchor="start" font-weight="normal" word-spacing="0.9">SCP RM (new, old):</text><text x="1124.0" y="460.7" fill="#00ff00" font-size="12.7" text-anchor="end" font-weight="normal" >0.00</text><text x="1124.0" y="460.7" fill="#00ff00" font-size="12.7" text-anchor="start" font-weight="normal" >,</text><text x="1137.0" y="460.7" fill="#00ff00" font-size="12.7" text-anchor="start" font-weight="normal" >0.00</text><text x="1230.3" y="460.7" fill="#fff" font-size="12.7" text-anchor="start" font-weight="normal" word-spacing="1.2">[1]</text><text x="894.5" y="477.5" fill="#fff" font-size="12.7" text-anchor="start" font-weight="normal" word-spacing="0.9">STP (new, old):</text><text x="1124.0" y="477.5" fill="#00ff00" font-size="12.7" text-anchor="end" font-weight="normal" >0.00</text><text x="1124.0" y="477.5" fill="#00ff00" font-size="12.7" text-anchor="start" font-weight="normal" >,</text><text x="1137.0" y="477.5" fill="#00ff00" font-size="12.7" text-anchor="start" font-weight="normal" >0.00</text><text x="1230.3" y="477.5" fill="#fff" font-size="12.7" text-anchor="start" font-weight="normal" word-spacing="1.2">[1]</text><text x="894.5" y="494.9" fill="#fff" font-size="12.7" text-anchor="start" font-weight="normal" word-spacing="0.9">SB STP (fix) | CWASP:</text><text x="1124.0" y="494.9" fill="#00ff00" font-size="12.7" text-anchor="end" font-weight="normal" >0.00</text><text x="1124.0" y="494.9" fill="#00ff00" font-size="12.7" text-anchor="start" font-weight="normal" >,</text><text x="1137.0" y="494.9" fill="#00ff00" font-size="12.7" text-anchor="start" font-weight="normal" >23.23</text><text x="1230.3" y="494.9" fill="#fff" font-size="12.7" text-anchor="start" font-weight="normal" word-spacing="1.2">[1], [%]</text><text x="894.5" y="511.7" fill="#fff" font-size="12.7" text-anchor="start" font-weight="normal" word-spacing="0.9">DCP | MMP | MSP:</text><text x="1124.0" y="511.7" fill="#00ff00" font-size="12.7" text-anchor="end" font-weight="normal" >0.03</text><text x="1124.0" y="511.7" fill="#00ff00" font-size="12.7" text-anchor="start" font-weight="normal" >,</text><text x="1137.0" y="511.7" fill="#ff0000" font-size="12.7" text-anchor="start" font-weight="normal" >78.46,</text><text x="1179.4" y="511.7" fill="#00ff00" font-size="12.7" text-anchor="start" font-weight="normal" >37.34</text><text x="1230.3" y="511.7" fill="#fff" font-size="12.7" text-anchor="start" font-weight="normal" word-spacing="1.2">[1], [%], [%]</text><text x="894.5" y="528.9" fill="#fff" font-size="12.7" text-anchor="start" font-weight="normal" word-spacing="0.9">MB Comp | SHERBE:</text><text x="1124.0" y="528.9" fill="#00ff00" font-size="12.7" text-anchor="end" font-weight="normal" >0.00</text><text x="1124.0" y="528.9" fill="#00ff00" font-size="12.7" text-anchor="start" font-weight="normal" >,</text><text x="1137.0" y="528.9" fill="#00ff00" font-size="12.7" text-anchor="start" font-weight="normal" >0.10</text><text x="1230.3" y="528.9" fill="#fff" font-size="12.7" text-anchor="start" font-weight="normal" word-spacing="1.2">[1], [1]</text><text x="894.5" y="545.8" fill="#fff" font-size="12.7" text-anchor="start" font-weight="normal" word-spacing="0.9">Exp. Supercell Index CH:</text><text x="1124.0" y="545.8" fill="#00ff00" font-size="12.7" text-anchor="end" font-weight="normal" >0.40</text><text x="1230.3" y="545.8" fill="#fff" font-size="12.7" text-anchor="start" font-weight="normal" word-spacing="1.2">[1]</text><text x="894.5" y="562.7" fill="#fff" font-size="12.7" text-anchor="start" font-weight="normal" word-spacing="0.9">SWISS 12 Index:</text><text x="1124.0" y="562.7" fill="#ff0000" font-size="12.7" text-anchor="end" font-weight="normal" >-1.64</text><text x="1230.3" y="562.7" fill="#fff" font-size="12.7" text-anchor="start" font-weight="normal" word-spacing="1.2">[1]</text><text x="894.5" y="579.5" fill="#fff" font-size="12.7" text-anchor="start" font-weight="normal" word-spacing="0.9">Precipitable Water:</text><text x="1124.0" y="579.5" fill="#00ff00" font-size="12.7" text-anchor="end" font-weight="normal" >15.96</text><text x="1230.3" y="579.5" fill="#fff" font-size="12.7" text-anchor="start" font-weight="normal" word-spacing="1.2">[mm]</text><text x="894.5" y="624.2" fill="#fff" font-size="12.7" text-anchor="start" font-weight="normal" word-spacing="0.9">Storm Direction | Motion:</text><text x="1124.0" y="624.2" fill="#ffffff" font-size="12.7" text-anchor="end" font-weight="normal" >68.13</text><text x="1124.0" y="624.2" fill="#ffffff" font-size="12.7" text-anchor="start" font-weight="normal" >,</text><text x="1137.0" y="624.2" fill="#ffff00" font-size="12.7" text-anchor="start" font-weight="normal" >12.45</text><text x="1230.3" y="624.2" fill="#fff" font-size="12.7" text-anchor="start" font-weight="normal" word-spacing="1.2">[°], [knt]</text><text x="894.5" y="641.4" fill="#fff" font-size="12.7" text-anchor="start" font-weight="normal" word-spacing="0.9">500m Critical Angle:</text><text x="1124.0" y="641.4" fill="#00ff00" font-size="12.7" text-anchor="end" font-weight="normal" >155.88</text><text x="1230.3" y="641.4" fill="#fff" font-size="12.7" text-anchor="start" font-weight="normal" word-spacing="1.2">[°]</text><text x="894.5" y="661.6" fill="#fff" font-size="12.7" text-anchor="start" font-weight="normal" word-spacing="0.9">SR Wind Sfc-2km:</text><text x="1124.0" y="661.6" fill="#00ff00" font-size="12.7" text-anchor="end" font-weight="normal" >5.38</text><text x="1230.3" y="661.6" fill="#fff" font-size="12.7" text-anchor="start" font-weight="normal" word-spacing="1.2">[knt]</text><text x="894.5" y="678.4" fill="#fff" font-size="12.7" text-anchor="start" font-weight="normal" word-spacing="0.9">SR Wind 4km-6km:</text><text x="1124.0" y="678.4" fill="#00ff00" font-size="12.7" text-anchor="end" font-weight="normal" >11.16</text><text x="1230.3" y="678.4" fill="#fff" font-size="12.7" text-anchor="start" font-weight="normal" word-spacing="1.2">[knt]</text><text x="894.5" y="695.4" fill="#fff" font-size="12.7" text-anchor="start" font-weight="normal" word-spacing="0.9">SR Wind 9km-11km:</text><text x="1124.0" y="695.4" fill="#00ff00" font-size="12.7" text-anchor="end" font-weight="normal" >37.83</text><text x="1230.3" y="695.4" fill="#fff" font-size="12.7" text-anchor="start" font-weight="normal" word-spacing="1.2">[knt] HP</text><text x="894.5" y="715.6" fill="#fff" font-size="12.7" text-anchor="start" font-weight="normal" word-spacing="0.9">Effective Shear 6000:</text><text x="1124.0" y="715.6" fill="#ffff00" font-size="12.7" text-anchor="end" font-weight="normal" >33.73</text><text x="1230.3" y="715.6" fill="#fff" font-size="12.7" text-anchor="start" font-weight="normal" word-spacing="1.2">[knt]</text><text x="894.5" y="735.4" fill="#fff" font-size="12.7" text-anchor="start" font-weight="normal" word-spacing="0.9">Bulk Richardson Number:</text><text x="1124.0" y="735.4" fill="#ffff00" font-size="12.7" text-anchor="end" font-weight="normal" >44.99</text><text x="1214.0" y="735.4" fill="#ffff00" font-size="12.7" text-anchor="end" font-weight="normal" >33.67</text><text x="1230.3" y="735.4" fill="#fff" font-size="12.7" text-anchor="start" font-weight="normal" word-spacing="1.2">[1]</text><text x="894.5" y="755.1" fill="#fff" font-size="12.7" text-anchor="start" font-weight="normal" word-spacing="0.9">3km Effective SRH:</text><text x="1124.0" y="755.1" fill="#00ff00" font-size="12.7" text-anchor="end" font-weight="normal" >7.10</text><text x="1230.3" y="755.1" fill="#fff" font-size="12.7" text-anchor="start" font-weight="normal" word-spacing="1.2">[m^2/s^2]</text><text x="894.5" y="772.5" fill="#fff" font-size="12.7" text-anchor="start" font-weight="normal" word-spacing="0.9">Max 3km SRH (0-2km) | AGL:</text><text x="1124.0" y="772.5" fill="#00ff00" font-size="12.7" text-anchor="end" font-weight="normal" >19.57</text><text x="1124.0" y="772.5" fill="#00ff00" font-size="12.7" text-anchor="start" font-weight="normal" >,</text><text x="1137.0" y="772.5" fill="#00ff00" font-size="12.7" text-anchor="start" font-weight="normal" >1989.00</text><text x="1230.3" y="772.5" fill="#fff" font-size="12.7" text-anchor="start" font-weight="normal" word-spacing="1.2">[m^2/s^2], [m]</text><text x="894.5" y="792.4" fill="#fff" font-size="12.7" text-anchor="start" font-weight="normal" word-spacing="0.9">3km Energy Helicity Index:</text><text x="1124.0" y="792.4" fill="#00ff00" font-size="12.7" text-anchor="end" font-weight="normal" >0.01</text><text x="1214.0" y="792.4" fill="#00ff00" font-size="12.7" text-anchor="end" font-weight="normal" >0.01</text><text x="1230.3" y="792.4" fill="#fff" font-size="12.7" text-anchor="start" font-weight="normal" word-spacing="1.2">[1]</text><text x="894.5" y="809.6" fill="#fff" font-size="12.7" text-anchor="start" font-weight="normal" word-spacing="0.9">3km Vorticity Gen. Pot.:</text><text x="1124.0" y="809.6" fill="#00ff00" font-size="12.7" text-anchor="end" font-weight="normal" >0.01</text><text x="1214.0" y="809.6" fill="#00ff00" font-size="12.7" text-anchor="end" font-weight="normal" >0.01</text><text x="1230.3" y="809.6" fill="#fff" font-size="12.7" text-anchor="start" font-weight="normal" word-spacing="1.2">[m/s^2]</text><text x="894.5" y="103.5" fill="#fff" font-size="12.7" text-anchor="start" font-weight="normal" textLength="258.5" lengthAdjust="spacingAndGlyphs" >Parcels: Using 50mB mean layer LCL + CCL</text><rect x="894.5" y="106" width="258.5" height="1" fill="#fff"/><text x="894.5" y="355.8" fill="#fff" font-size="12.7" text-anchor="start" font-weight="normal" word-spacing="0.9">Convective Indices</text><rect x="894.5" y="358" width="105.5" height="1" fill="#fff"/><text x="894.5" y="604.8" fill="#fff" font-size="12.7" text-anchor="start" font-weight="normal" word-spacing="0.9">Wind Parameters</text><rect x="894.5" y="607" width="100.5" height="1" fill="#fff"/><rect x="729" y="827" width="16" height="8" fill="#ff0000"/><text x="753.4" y="835.6" fill="#ff0000" font-size="12.7" text-anchor="start" font-weight="normal" word-spacing="1">Temperature Profile</text><rect x="729" y="847" width="16" height="8" fill="#00ffff"/><text x="753.4" y="855.6" fill="#00ffff" font-size="12.7" text-anchor="start" font-weight="normal" word-spacing="1">Dewpoint Profile</text><rect x="729" y="867" width="16" height="8" fill="#00ff00"/><text x="753.4" y="875.6" fill="#00ff00" font-size="12.7" text-anchor="start" font-weight="normal" word-spacing="1">OBS Windspeed Profile</text><rect x="729" y="887" width="16" height="8" fill="#ff0080"/><text x="753.4" y="895.6" fill="#ff0080" font-size="12.7" text-anchor="start" font-weight="normal" word-spacing="1">SR Windspeed Profile</text><rect x="729" y="907" width="16" height="8" fill="#c8c800"/><text x="753.4" y="915.6" fill="#c8c800" font-size="12.7" text-anchor="start" font-weight="normal" word-spacing="1">Sfc-3km Storm Relative Helicity Profile</text><rect x="729" y="927" width="16" height="8" fill="#404000"/><text x="753.4" y="935.6" fill="#404000" font-size="12.7" text-anchor="start" font-weight="normal" word-spacing="1">Effective Layer (CAPE &gt;= 100 J/kg)</text><rect x="1079" y="827" width="16" height="8" fill="#00ff00"/><text x="1103.7" y="835.6" fill="#00ff00" font-size="12.7" text-anchor="start" font-weight="normal" word-spacing="0.6">No / Non Severe Thunderstorms</text><rect x="1079" y="847" width="16" height="8" fill="#ffff00"/><text x="1103.7" y="855.6" fill="#ffff00" font-size="12.7" text-anchor="start" font-weight="normal" word-spacing="0.6">Scattered / Moderate Thunderstorms</text><rect x="1079" y="867" width="16" height="8" fill="#ff0000"/><text x="1103.7" y="875.6" fill="#ff0000" font-size="12.7" text-anchor="start" font-weight="normal" word-spacing="0.6">Widespread / Severe Thunderstorms</text><rect x="61" y="750" width="1" height="5" fill="#fff"/><text x="68.2" y="768.0" fill="#fff" font-size="12" text-anchor="end" font-weight="normal" >-50</text><rect x="61" y="789" width="1" height="4" fill="#fff"/><text x="61.5" y="806.0" fill="#fff" font-size="12" text-anchor="middle" font-weight="normal" >0</text><rect x="61" y="826" width="1" height="4" fill="#fff"/><text x="61.5" y="842.8" fill="#fff" font-size="12" text-anchor="middle" font-weight="normal" >0</text><rect x="121" y="750" width="1" height="5" fill="#fff"/><text x="128.2" y="768.0" fill="#fff" font-size="12" text-anchor="end" font-weight="normal" >-40</text><rect x="121" y="789" width="1" height="4" fill="#fff"/><text x="121.5" y="806.0" fill="#fff" font-size="12" text-anchor="middle" font-weight="normal" >10</text><rect x="121" y="826" width="1" height="4" fill="#fff"/><text x="121.5" y="842.8" fill="#fff" font-size="12" text-anchor="middle" font-weight="normal" >300</text><rect x="181" y="750" width="1" height="5" fill="#fff"/><text x="188.2" y="768.0" fill="#fff" font-size="12" text-anchor="end" font-weight="normal" >-30</text><rect x="181" y="789" width="1" height="4" fill="#fff"/><text x="181.5" y="806.0" fill="#fff" font-size="12" text-anchor="middle" font-weight="normal" >20</text><rect x="181" y="826" width="1" height="4" fill="#fff"/><text x="181.5" y="842.8" fill="#fff" font-size="12" text-anchor="middle" font-weight="normal" >600</text><rect x="241" y="750" width="1" height="5" fill="#fff"/><text x="248.2" y="768.0" fill="#fff" font-size="12" text-anchor="end" font-weight="normal" >-20</text><rect x="241" y="789" width="1" height="4" fill="#fff"/><text x="241.5" y="806.0" fill="#fff" font-size="12" text-anchor="middle" font-weight="normal" >30</text><rect x="241" y="826" width="1" height="4" fill="#fff"/><text x="241.5" y="842.8" fill="#fff" font-size="12" text-anchor="middle" font-weight="normal" >900</text><rect x="301" y="750" width="1" height="5" fill="#fff"/><text x="308.2" y="768.0" fill="#fff" font-size="12" text-anchor="end" font-weight="normal" >-10</text><rect x="301" y="789" width="1" height="4" fill="#fff"/><text x="301.5" y="806.0" fill="#fff" font-size="12" text-anchor="middle" font-weight="normal" >40</text><rect x="301" y="826" width="1" height="4" fill="#fff"/><text x="301.5" y="842.8" fill="#fff" font-size="12" text-anchor="middle" font-weight="normal" >1200</text><rect x="361" y="750" width="1" height="5" fill="#fff"/><text x="361.5" y="768.0" fill="#fff" font-size="12" text-anchor="middle" font-weight="normal" >0</text><rect x="361" y="789" width="1" height="4" fill="#fff"/><text x="361.5" y="806.0" fill="#fff" font-size="12" text-anchor="middle" font-weight="normal" >50</text><rect x="361" y="826" width="1" height="4" fill="#fff"/><text x="361.5" y="842.8" fill="#fff" font-size="12" text-anchor="middle" font-weight="normal" >1500</text><rect x="421" y="750" width="1" height="5" fill="#fff"/><text x="421.5" y="768.0" fill="#fff" font-size="12" text-anchor="middle" font-weight="normal" >10</text><rect x="421" y="789" width="1" height="4" fill="#fff"/><text x="421.5" y="806.0" fill="#fff" font-size="12" text-anchor="middle" font-weight="normal" >60</text><rect x="421" y="826" width="1" height="4" fill="#fff"/><text x="421.5" y="842.8" fill="#fff" font-size="12" text-anchor="middle" font-weight="normal" >1800</text><rect x="481" y="750" width="1" height="5" fill="#fff"/><text x="481.5" y="768.0" fill="#fff" font-size="12" text-anchor="middle" font-weight="normal" >20</text><rect x="481" y="789" width="1" height="4" fill="#fff"/><text x="481.5" y="806.0" fill="#fff" font-size="12" text-anchor="middle" font-weight="normal" >70</text><rect x="481" y="826" width="1" height="4" fill="#fff"/><text x="481.5" y="842.8" fill="#fff" font-size="12" text-anchor="middle" font-weight="normal" >2100</text><rect x="541" y="750" width="1" height="5" fill="#fff"/><text x="541.5" y="768.0" fill="#fff" font-size="12" text-anchor="middle" font-weight="normal" >30</text><rect x="541" y="789" width="1" height="4" fill="#fff"/><text x="541.5" y="806.0" fill="#fff" font-size="12" text-anchor="middle" font-weight="normal" >80</text><rect x="541" y="826" width="1" height="4" fill="#fff"/><text x="541.5" y="842.8" fill="#fff" font-size="12" text-anchor="middle" font-weight="normal" >2400</text><rect x="601" y="750" width="1" height="5" fill="#fff"/><text x="601.5" y="768.0" fill="#fff" font-size="12" text-anchor="middle" font-weight="normal" >40</text><rect x="601" y="789" width="1" height="4" fill="#fff"/><text x="601.5" y="806.0" fill="#fff" font-size="12" text-anchor="middle" font-weight="normal" >90</text><rect x="601" y="826" width="1" height="4" fill="#fff"/><text x="601.5" y="842.8" fill="#fff" font-size="12" text-anchor="middle" font-weight="normal" >2700</text><rect x="661" y="750" width="1" height="5" fill="#fff"/><text x="661.5" y="768.0" fill="#fff" font-size="12" text-anchor="middle" font-weight="normal" >50</text><rect x="661" y="789" width="1" height="4" fill="#fff"/><text x="661.5" y="806.0" fill="#fff" font-size="12" text-anchor="middle" font-weight="normal" >100</text><rect x="661" y="826" width="1" height="4" fill="#fff"/><text x="661.5" y="842.8" fill="#fff" font-size="12" text-anchor="middle" font-weight="normal" >3000</text><rect x="61" y="864" width="1" height="4" fill="#fff"/><text x="71.5" y="879.4" fill="#fff" font-size="12" text-anchor="end" font-weight="normal" >-100</text><rect x="136" y="864" width="1" height="4" fill="#fff"/><text x="143.2" y="879.4" fill="#fff" font-size="12" text-anchor="end" font-weight="normal" >-50</text><rect x="211" y="864" width="1" height="4" fill="#fff"/><text x="211.5" y="879.4" fill="#fff" font-size="12" text-anchor="middle" font-weight="normal" >0</text><rect x="286" y="864" width="1" height="4" fill="#fff"/><text x="286.5" y="879.4" fill="#fff" font-size="12" text-anchor="middle" font-weight="normal" >50</text><rect x="361" y="864" width="1" height="4" fill="#fff"/><text x="361.5" y="879.4" fill="#fff" font-size="12" text-anchor="middle" font-weight="normal" >100</text><rect x="436" y="864" width="1" height="4" fill="#fff"/><text x="436.5" y="879.4" fill="#fff" font-size="12" text-anchor="middle" font-weight="normal" >150</text><rect x="511" y="864" width="1" height="4" fill="#fff"/><text x="511.5" y="879.4" fill="#fff" font-size="12" text-anchor="middle" font-weight="normal" >200</text><rect x="586" y="864" width="1" height="4" fill="#fff"/><text x="586.5" y="879.4" fill="#fff" font-size="12" text-anchor="middle" font-weight="normal" >250</text><rect x="661" y="864" width="1" height="4" fill="#fff"/><text x="661.5" y="879.4" fill="#fff" font-size="12" text-anchor="middle" font-weight="normal" >300</text><text x="273.3" y="781.0" fill="#fff" font-size="12.3" text-anchor="start" font-weight="normal" textLength="175.5" lengthAdjust="spacingAndGlyphs" xml:space="preserve">Temperature, Dewpoint  [ °C ]</text><text x="308.6" y="819.2" fill="#fff" font-size="12.3" text-anchor="start" font-weight="normal" textLength="104.7" lengthAdjust="spacingAndGlyphs" xml:space="preserve">Windspeed  [ knt ]</text><text x="291.9" y="857.0" fill="#fff" font-size="12.3" text-anchor="start" font-weight="normal" textLength="137.5" lengthAdjust="spacingAndGlyphs" xml:space="preserve">CAPE, CINH * 5  [ J/kg ]</text><text x="257.1" y="893.0" fill="#fff" font-size="12.3" text-anchor="start" font-weight="normal" textLength="207.0" lengthAdjust="spacingAndGlyphs" xml:space="preserve">Storm Relative Helicity  [ m^2/s^2 ]</text><text x="747.2" y="31.9" fill="#00ff00" font-size="13" text-anchor="start" font-weight="bold" textLength="27.4" lengthAdjust="spacingAndGlyphs" >OBS</text><text x="818.7" y="31.9" fill="#ff0080" font-size="13" text-anchor="start" font-weight="bold" textLength="16.3" lengthAdjust="spacingAndGlyphs" >SR</text><defs><clipPath id="chart"><rect x="61" y="50" width="601" height="700"/></clipPath></defs><g clip-path="url(#chart)" shape-rendering="crispEdges"><rect x="168" y="50" width="5" height="1" fill="#fff"/><rect x="170" y="48" width="1" height="5" fill="#fff"/><rect x="226" y="76" width="5" height="1" fill="#fff"/><rect x="228" y="74" width="1" height="5" fill="#fff"/><rect x="166" y="101" width="5" height="1" fill="#fff"/><rect x="168" y="99" width="1" height="5" fill="#fff"/><rect x="198" y="112" width="5" height="1" fill="#fff"/><rect x="200" y="110" width="1" height="5" fill="#fff"/><rect x="146" y="145" width="5" height="1" fill="#fff"/><rect x="148" y="143" width="1" height="5" fill="#fff"/><rect x="161" y="218" width="5" height="1" fill="#fff"/><rect x="163" y="216" width="1" height="5" fill="#fff"/><rect x="173" y="223" width="5" height="1" fill="#fff"/><rect x="175" y="221" width="1" height="5" fill="#fff"/><rect x="165" y="233" width="5" height="1" fill="#fff"/><rect x="167" y="231" width="1" height="5" fill="#fff"/><rect x="180" y="249" width="5" height="1" fill="#fff"/><rect x="182" y="247" width="1" height="5" fill="#fff"/><rect x="107" y="273" width="5" height="1" fill="#fff"/><rect x="109" y="271" width="1" height="5" fill="#fff"/><rect x="119" y="279" width="5" height="1" fill="#fff"/><rect x="121" y="277" width="1" height="5" fill="#fff"/><rect x="196" y="290" width="5" height="1" fill="#fff"/><rect x="198" y="288" width="1" height="5" fill="#fff"/><rect x="177" y="312" width="5" height="1" fill="#fff"/><rect x="179" y="310" width="1" height="5" fill="#fff"/><rect x="150" y="321" width="5" height="1" fill="#fff"/><rect x="152" y="319" width="1" height="5" fill="#fff"/><rect x="176" y="358" width="5" height="1" fill="#fff"/><rect x="178" y="356" width="1" height="5" fill="#fff"/><rect x="256" y="374" width="5" height="1" fill="#fff"/><rect x="258" y="372" width="1" height="5" fill="#fff"/><rect x="328" y="393" width="5" height="1" fill="#fff"/><rect x="330" y="391" width="1" height="5" fill="#fff"/><rect x="370" y="414" width="5" height="1" fill="#fff"/><rect x="372" y="412" width="1" height="5" fill="#fff"/><rect x="410" y="435" width="5" height="1" fill="#fff"/><rect x="412" y="433" width="1" height="5" fill="#fff"/><rect x="398" y="449" width="5" height="1" fill="#fff"/><rect x="400" y="447" width="1" height="5" fill="#fff"/><rect x="392" y="469" width="5" height="1" fill="#fff"/><rect x="394" y="467" width="1" height="5" fill="#fff"/><rect x="352" y="487" width="5" height="1" fill="#fff"/><rect x="354" y="485" width="1" height="5" fill="#fff"/><rect x="370" y="511" width="5" height="1" fill="#fff"/><rect x="372" y="509" width="1" height="5" fill="#fff"/><rect x="322" y="530" width="5" height="1" fill="#fff"/><rect x="324" y="528" width="1" height="5" fill="#fff"/><rect x="317" y="531" width="5" height="1" fill="#fff"/><rect x="319" y="529" width="1" height="5" fill="#fff"/><rect x="313" y="537" width="5" height="1" fill="#fff"/><rect x="315" y="535" width="1" height="5" fill="#fff"/><rect x="296" y="543" width="5" height="1" fill="#fff"/><rect x="298" y="541" width="1" height="5" fill="#fff"/><rect x="250" y="550" width="5" height="1" fill="#fff"/><rect x="252" y="548" width="1" height="5" fill="#fff"/><rect x="214" y="565" width="5" height="1" fill="#fff"/><rect x="216" y="563" width="1" height="5" fill="#fff"/><rect x="145" y="574" width="5" height="1" fill="#fff"/><rect x="147" y="572" width="1" height="5" fill="#fff"/><rect x="131" y="585" width="5" height="1" fill="#fff"/><rect x="133" y="583" width="1" height="5" fill="#fff"/><rect x="125" y="586" width="5" height="1" fill="#fff"/><rect x="127" y="584" width="1" height="5" fill="#fff"/><rect x="109" y="599" width="5" height="1" fill="#fff"/><rect x="111" y="597" width="1" height="5" fill="#fff"/><rect x="105" y="600" width="5" height="1" fill="#fff"/><rect x="107" y="598" width="1" height="5" fill="#fff"/><rect x="128" y="607" width="5" height="1" fill="#fff"/><rect x="130" y="605" width="1" height="5" fill="#fff"/><rect x="127" y="619" width="5" height="1" fill="#fff"/><rect x="129" y="617" width="1" height="5" fill="#fff"/><rect x="98" y="620" width="5" height="1" fill="#fff"/><rect x="100" y="618" width="1" height="5" fill="#fff"/><rect x="115" y="630" width="5" height="1" fill="#fff"/><rect x="117" y="628" width="1" height="5" fill="#fff"/><rect x="84" y="635" width="5" height="1" fill="#fff"/><rect x="86" y="633" width="1" height="5" fill="#fff"/><rect x="68" y="654" width="5" height="1" fill="#fff"/><rect x="70" y="652" width="1" height="5" fill="#fff"/><rect x="72" y="663" width="5" height="1" fill="#fff"/><rect x="74" y="661" width="1" height="5" fill="#fff"/><rect x="88" y="677" width="5" height="1" fill="#fff"/><rect x="90" y="675" width="1" height="5" fill="#fff"/><rect x="88" y="681" width="5" height="1" fill="#fff"/><rect x="90" y="679" width="1" height="5" fill="#fff"/><rect x="105" y="685" width="5" height="1" fill="#fff"/><rect x="107" y="683" width="1" height="5" fill="#fff"/><rect x="68" y="700" width="5" height="1" fill="#fff"/><rect x="70" y="698" width="1" height="5" fill="#fff"/><rect x="96" y="702" width="5" height="1" fill="#fff"/><rect x="98" y="700" width="1" height="5" fill="#fff"/><rect x="93" y="709" width="5" height="1" fill="#fff"/><rect x="95" y="707" width="1" height="5" fill="#fff"/><rect x="114" y="720" width="5" height="1" fill="#fff"/><rect x="116" y="718" width="1" height="5" fill="#fff"/><rect x="119" y="725" width="5" height="1" fill="#fff"/><rect x="121" y="723" width="1" height="5" fill="#fff"/><rect x="102" y="732" width="5" height="1" fill="#fff"/><rect x="104" y="730" width="1" height="5" fill="#fff"/><rect x="168" y="50" width="5" height="1" fill="#fff"/><rect x="170" y="48" width="1" height="5" fill="#fff"/><rect x="226" y="76" width="5" height="1" fill="#fff"/><rect x="228" y="74" width="1" height="5" fill="#fff"/><rect x="191" y="101" width="5" height="1" fill="#fff"/><rect x="193" y="99" width="1" height="5" fill="#fff"/><rect x="209" y="112" width="5" height="1" fill="#fff"/><rect x="211" y="110" width="1" height="5" fill="#fff"/><rect x="185" y="145" width="5" height="1" fill="#fff"/><rect x="187" y="143" width="1" height="5" fill="#fff"/><rect x="191" y="218" width="5" height="1" fill="#fff"/><rect x="193" y="216" width="1" height="5" fill="#fff"/><rect x="203" y="223" width="5" height="1" fill="#fff"/><rect x="205" y="221" width="1" height="5" fill="#fff"/><rect x="215" y="233" width="5" height="1" fill="#fff"/><rect x="217" y="231" width="1" height="5" fill="#fff"/><rect x="209" y="249" width="5" height="1" fill="#fff"/><rect x="211" y="247" width="1" height="5" fill="#fff"/><rect x="155" y="273" width="5" height="1" fill="#fff"/><rect x="157" y="271" width="1" height="5" fill="#fff"/><rect x="166" y="279" width="5" height="1" fill="#fff"/><rect x="168" y="277" width="1" height="5" fill="#fff"/><rect x="234" y="290" width="5" height="1" fill="#fff"/><rect x="236" y="288" width="1" height="5" fill="#fff"/><rect x="234" y="312" width="5" height="1" fill="#fff"/><rect x="236" y="310" width="1" height="5" fill="#fff"/><rect x="203" y="321" width="5" height="1" fill="#fff"/><rect x="205" y="319" width="1" height="5" fill="#fff"/><rect x="245" y="358" width="5" height="1" fill="#fff"/><rect x="247" y="356" width="1" height="5" fill="#fff"/><rect x="323" y="374" width="5" height="1" fill="#fff"/><rect x="325" y="372" width="1" height="5" fill="#fff"/><rect x="395" y="393" width="5" height="1" fill="#fff"/><rect x="397" y="391" width="1" height="5" fill="#fff"/><rect x="443" y="414" width="5" height="1" fill="#fff"/><rect x="445" y="412" width="1" height="5" fill="#fff"/><rect x="479" y="435" width="5" height="1" fill="#fff"/><rect x="481" y="433" width="1" height="5" fill="#fff"/><rect x="467" y="449" width="5" height="1" fill="#fff"/><rect x="469" y="447" width="1" height="5" fill="#fff"/><rect x="461" y="469" width="5" height="1" fill="#fff"/><rect x="463" y="467" width="1" height="5" fill="#fff"/><rect x="419" y="487" width="5" height="1" fill="#fff"/><rect x="421" y="485" width="1" height="5" fill="#fff"/><rect x="437" y="511" width="5" height="1" fill="#fff"/><rect x="439" y="509" width="1" height="5" fill="#fff"/><rect x="388" y="530" width="5" height="1" fill="#fff"/><rect x="390" y="528" width="1" height="5" fill="#fff"/><rect x="382" y="531" width="5" height="1" fill="#fff"/><rect x="384" y="529" width="1" height="5" fill="#fff"/><rect x="377" y="537" width="5" height="1" fill="#fff"/><rect x="379" y="535" width="1" height="5" fill="#fff"/><rect x="364" y="543" width="5" height="1" fill="#fff"/><rect x="366" y="541" width="1" height="5" fill="#fff"/><rect x="317" y="550" width="5" height="1" fill="#fff"/><rect x="319" y="548" width="1" height="5" fill="#fff"/><rect x="275" y="565" width="5" height="1" fill="#fff"/><rect x="277" y="563" width="1" height="5" fill="#fff"/><rect x="215" y="574" width="5" height="1" fill="#fff"/><rect x="217" y="572" width="1" height="5" fill="#fff"/><rect x="154" y="585" width="5" height="1" fill="#fff"/><rect x="156" y="583" width="1" height="5" fill="#fff"/><rect x="149" y="586" width="5" height="1" fill="#fff"/><rect x="151" y="584" width="1" height="5" fill="#fff"/><rect x="125" y="599" width="5" height="1" fill="#fff"/><rect x="127" y="597" width="1" height="5" fill="#fff"/><rect x="143" y="607" width="5" height="1" fill="#fff"/><rect x="145" y="605" width="1" height="5" fill="#fff"/><rect x="130" y="619" width="5" height="1" fill="#fff"/><rect x="132" y="617" width="1" height="5" fill="#fff"/><rect x="125" y="623" width="5" height="1" fill="#fff"/><rect x="127" y="621" width="1" height="5" fill="#fff"/><rect x="130" y="630" width="5" height="1" fill="#fff"/><rect x="132" y="628" width="1" height="5" fill="#fff"/><rect x="124" y="635" width="5" height="1" fill="#fff"/><rect x="126" y="633" width="1" height="5" fill="#fff"/><rect x="124" y="648" width="5" height="1" fill="#fff"/><rect x="126" y="646" width="1" height="5" fill="#fff"/><rect x="143" y="655" width="5" height="1" fill="#fff"/><rect x="145" y="653" width="1" height="5" fill="#fff"/><rect x="137" y="662" width="5" height="1" fill="#fff"/><rect x="139" y="660" width="1" height="5" fill="#fff"/><rect x="155" y="677" width="5" height="1" fill="#fff"/><rect x="157" y="675" width="1" height="5" fill="#fff"/><rect x="142" y="681" width="5" height="1" fill="#fff"/><rect x="144" y="679" width="1" height="5" fill="#fff"/><rect x="168" y="685" width="5" height="1" fill="#fff"/><rect x="170" y="683" width="1" height="5" fill="#fff"/><rect x="162" y="686" width="5" height="1" fill="#fff"/><rect x="164" y="684" width="1" height="5" fill="#fff"/><rect x="138" y="700" width="5" height="1" fill="#fff"/><rect x="140" y="698" width="1" height="5" fill="#fff"/><rect x="119" y="702" width="5" height="1" fill="#fff"/><rect x="121" y="700" width="1" height="5" fill="#fff"/><rect x="113" y="707" width="5" height="1" fill="#fff"/><rect x="115" y="705" width="1" height="5" fill="#fff"/><rect x="101" y="709" width="5" height="1" fill="#fff"/><rect x="103" y="707" width="1" height="5" fill="#fff"/><rect x="101" y="719" width="5" height="1" fill="#fff"/><rect x="103" y="717" width="1" height="5" fill="#fff"/><rect x="113" y="725" width="5" height="1" fill="#fff"/><rect x="115" y="723" width="1" height="5" fill="#fff"/><rect x="102" y="732" width="5" height="1" fill="#fff"/><rect x="104" y="730" width="1" height="5" fill="#fff"/><rect x="650" y="76" width="5" height="1" fill="#fff"/><rect x="652" y="74" width="1" height="5" fill="#fff"/><rect x="631" y="101" width="5" height="1" fill="#fff"/><rect x="633" y="99" width="1" height="5" fill="#fff"/><rect x="622" y="112" width="5" height="1" fill="#fff"/><rect x="624" y="110" width="1" height="5" fill="#fff"/><rect x="599" y="145" width="5" height="1" fill="#fff"/><rect x="601" y="143" width="1" height="5" fill="#fff"/><rect x="553" y="218" width="5" height="1" fill="#fff"/><rect x="555" y="216" width="1" height="5" fill="#fff"/><rect x="547" y="223" width="5" height="1" fill="#fff"/><rect x="549" y="221" width="1" height="5" fill="#fff"/><rect x="537" y="233" width="5" height="1" fill="#fff"/><rect x="539" y="231" width="1" height="5" fill="#fff"/><rect x="522" y="249" width="5" height="1" fill="#fff"/><rect x="524" y="247" width="1" height="5" fill="#fff"/><rect x="504" y="273" width="5" height="1" fill="#fff"/><rect x="506" y="271" width="1" height="5" fill="#fff"/><rect x="501" y="279" width="5" height="1" fill="#fff"/><rect x="503" y="277" width="1" height="5" fill="#fff"/><rect x="478" y="290" width="5" height="1" fill="#fff"/><rect x="480" y="288" width="1" height="5" fill="#fff"/><rect x="458" y="312" width="5" height="1" fill="#fff"/><rect x="460" y="310" width="1" height="5" fill="#fff"/><rect x="449" y="321" width="5" height="1" fill="#fff"/><rect x="451" y="319" width="1" height="5" fill="#fff"/><rect x="408" y="358" width="5" height="1" fill="#fff"/><rect x="410" y="356" width="1" height="5" fill="#fff"/><rect x="389" y="374" width="5" height="1" fill="#fff"/><rect x="391" y="372" width="1" height="5" fill="#fff"/><rect x="364" y="393" width="5" height="1" fill="#fff"/><rect x="366" y="391" width="1" height="5" fill="#fff"/><rect x="355" y="414" width="5" height="1" fill="#fff"/><rect x="357" y="412" width="1" height="5" fill="#fff"/><rect x="352" y="435" width="5" height="1" fill="#fff"/><rect x="354" y="433" width="1" height="5" fill="#fff"/><rect x="350" y="449" width="5" height="1" fill="#fff"/><rect x="352" y="447" width="1" height="5" fill="#fff"/><rect x="352" y="469" width="5" height="1" fill="#fff"/><rect x="354" y="467" width="1" height="5" fill="#fff"/><rect x="355" y="487" width="5" height="1" fill="#fff"/><rect x="357" y="485" width="1" height="5" fill="#fff"/><rect x="356" y="511" width="5" height="1" fill="#fff"/><rect x="358" y="509" width="1" height="5" fill="#fff"/><rect x="359" y="531" width="5" height="1" fill="#fff"/><rect x="361" y="529" width="1" height="5" fill="#fff"/><rect x="360" y="537" width="5" height="1" fill="#fff"/><rect x="362" y="535" width="1" height="5" fill="#fff"/><rect x="362" y="550" width="5" height="1" fill="#fff"/><rect x="364" y="548" width="1" height="5" fill="#fff"/><rect x="363" y="565" width="5" height="1" fill="#fff"/><rect x="365" y="563" width="1" height="5" fill="#fff"/><rect x="365" y="574" width="5" height="1" fill="#fff"/><rect x="367" y="572" width="1" height="5" fill="#fff"/><rect x="373" y="600" width="5" height="1" fill="#fff"/><rect x="375" y="598" width="1" height="5" fill="#fff"/><rect x="377" y="622" width="5" height="1" fill="#fff"/><rect x="379" y="620" width="1" height="5" fill="#fff"/><rect x="382" y="635" width="5" height="1" fill="#fff"/><rect x="384" y="633" width="1" height="5" fill="#fff"/><rect x="387" y="644" width="5" height="1" fill="#fff"/><rect x="389" y="642" width="1" height="5" fill="#fff"/><rect x="384" y="654" width="5" height="1" fill="#fff"/><rect x="386" y="652" width="1" height="5" fill="#fff"/><rect x="386" y="662" width="5" height="1" fill="#fff"/><rect x="388" y="660" width="1" height="5" fill="#fff"/><rect x="395" y="678" width="5" height="1" fill="#fff"/><rect x="397" y="676" width="1" height="5" fill="#fff"/><rect x="396" y="684" width="5" height="1" fill="#fff"/><rect x="398" y="682" width="1" height="5" fill="#fff"/><rect x="405" y="698" width="5" height="1" fill="#fff"/><rect x="407" y="696" width="1" height="5" fill="#fff"/><rect x="416" y="710" width="5" height="1" fill="#fff"/><rect x="418" y="708" width="1" height="5" fill="#fff"/><rect x="434" y="724" width="5" height="1" fill="#fff"/><rect x="436" y="722" width="1" height="5" fill="#fff"/><rect x="452" y="732" width="5" height="1" fill="#fff"/><rect x="454" y="730" width="1" height="5" fill="#fff"/><rect x="531" y="50" width="5" height="1" fill="#fff"/><rect x="533" y="48" width="1" height="5" fill="#fff"/><rect x="508" y="76" width="5" height="1" fill="#fff"/><rect x="510" y="74" width="1" height="5" fill="#fff"/><rect x="485" y="101" width="5" height="1" fill="#fff"/><rect x="487" y="99" width="1" height="5" fill="#fff"/><rect x="475" y="112" width="5" height="1" fill="#fff"/><rect x="477" y="110" width="1" height="5" fill="#fff"/><rect x="446" y="145" width="5" height="1" fill="#fff"/><rect x="448" y="143" width="1" height="5" fill="#fff"/><rect x="381" y="218" width="5" height="1" fill="#fff"/><rect x="383" y="216" width="1" height="5" fill="#fff"/><rect x="376" y="223" width="5" height="1" fill="#fff"/><rect x="378" y="221" width="1" height="5" fill="#fff"/><rect x="367" y="233" width="5" height="1" fill="#fff"/><rect x="369" y="231" width="1" height="5" fill="#fff"/><rect x="353" y="249" width="5" height="1" fill="#fff"/><rect x="355" y="247" width="1" height="5" fill="#fff"/><rect x="335" y="273" width="5" height="1" fill="#fff"/><rect x="337" y="271" width="1" height="5" fill="#fff"/><rect x="329" y="279" width="5" height="1" fill="#fff"/><rect x="331" y="277" width="1" height="5" fill="#fff"/><rect x="316" y="290" width="5" height="1" fill="#fff"/><rect x="318" y="288" width="1" height="5" fill="#fff"/><rect x="298" y="312" width="5" height="1" fill="#fff"/><rect x="300" y="310" width="1" height="5" fill="#fff"/><rect x="291" y="321" width="5" height="1" fill="#fff"/><rect x="293" y="319" width="1" height="5" fill="#fff"/><rect x="272" y="358" width="5" height="1" fill="#fff"/><rect x="274" y="356" width="1" height="5" fill="#fff"/><rect x="263" y="374" width="5" height="1" fill="#fff"/><rect x="265" y="372" width="1" height="5" fill="#fff"/><rect x="291" y="393" width="5" height="1" fill="#fff"/><rect x="293" y="391" width="1" height="5" fill="#fff"/><rect x="296" y="414" width="5" height="1" fill="#fff"/><rect x="298" y="412" width="1" height="5" fill="#fff"/><rect x="296" y="435" width="5" height="1" fill="#fff"/><rect x="298" y="433" width="1" height="5" fill="#fff"/><rect x="318" y="449" width="5" height="1" fill="#fff"/><rect x="320" y="447" width="1" height="5" fill="#fff"/><rect x="325" y="469" width="5" height="1" fill="#fff"/><rect x="327" y="467" width="1" height="5" fill="#fff"/><rect x="293" y="487" width="5" height="1" fill="#fff"/><rect x="295" y="485" width="1" height="5" fill="#fff"/><rect x="323" y="511" width="5" height="1" fill="#fff"/><rect x="325" y="509" width="1" height="5" fill="#fff"/><rect x="290" y="530" width="5" height="1" fill="#fff"/><rect x="292" y="528" width="1" height="5" fill="#fff"/><rect x="284" y="531" width="5" height="1" fill="#fff"/><rect x="286" y="529" width="1" height="5" fill="#fff"/><rect x="312" y="537" width="5" height="1" fill="#fff"/><rect x="314" y="535" width="1" height="5" fill="#fff"/><rect x="291" y="543" width="5" height="1" fill="#fff"/><rect x="293" y="541" width="1" height="5" fill="#fff"/><rect x="250" y="550" width="5" height="1" fill="#fff"/><rect x="252" y="548" width="1" height="5" fill="#fff"/><rect x="245" y="565" width="5" height="1" fill="#fff"/><rect x="247" y="563" width="1" height="5" fill="#fff"/><rect x="249" y="574" width="5" height="1" fill="#fff"/><rect x="251" y="572" width="1" height="5" fill="#fff"/><rect x="249" y="585" width="5" height="1" fill="#fff"/><rect x="251" y="583" width="1" height="5" fill="#fff"/><rect x="244" y="586" width="5" height="1" fill="#fff"/><rect x="246" y="584" width="1" height="5" fill="#fff"/><rect x="202" y="599" width="5" height="1" fill="#fff"/><rect x="204" y="597" width="1" height="5" fill="#fff"/><rect x="228" y="600" width="5" height="1" fill="#fff"/><rect x="230" y="598" width="1" height="5" fill="#fff"/><rect x="282" y="607" width="5" height="1" fill="#fff"/><rect x="284" y="605" width="1" height="5" fill="#fff"/><rect x="331" y="620" width="5" height="1" fill="#fff"/><rect x="333" y="618" width="1" height="5" fill="#fff"/><rect x="336" y="624" width="5" height="1" fill="#fff"/><rect x="338" y="622" width="1" height="5" fill="#fff"/><rect x="355" y="624" width="5" height="1" fill="#fff"/><rect x="357" y="622" width="1" height="5" fill="#fff"/><rect x="356" y="635" width="5" height="1" fill="#fff"/><rect x="358" y="633" width="1" height="5" fill="#fff"/><rect x="349" y="640" width="5" height="1" fill="#fff"/><rect x="351" y="638" width="1" height="5" fill="#fff"/><rect x="362" y="647" width="5" height="1" fill="#fff"/><rect x="364" y="645" width="1" height="5" fill="#fff"/><rect x="362" y="651" width="5" height="1" fill="#fff"/><rect x="364" y="649" width="1" height="5" fill="#fff"/><rect x="384" y="655" width="5" height="1" fill="#fff"/><rect x="386" y="653" width="1" height="5" fill="#fff"/><rect x="379" y="662" width="5" height="1" fill="#fff"/><rect x="381" y="660" width="1" height="5" fill="#fff"/><rect x="376" y="678" width="5" height="1" fill="#fff"/><rect x="378" y="676" width="1" height="5" fill="#fff"/><rect x="395" y="680" width="5" height="1" fill="#fff"/><rect x="397" y="678" width="1" height="5" fill="#fff"/><rect x="388" y="685" width="5" height="1" fill="#fff"/><rect x="390" y="683" width="1" height="5" fill="#fff"/><rect x="405" y="700" width="5" height="1" fill="#fff"/><rect x="407" y="698" width="1" height="5" fill="#fff"/><rect x="416" y="710" width="5" height="1" fill="#fff"/><rect x="418" y="708" width="1" height="5" fill="#fff"/><rect x="406" y="725" width="5" height="1" fill="#fff"/><rect x="408" y="723" width="1" height="5" fill="#fff"/><rect x="406" y="732" width="5" height="1" fill="#fff"/><rect x="408" y="730" width="1" height="5" fill="#fff"/><rect x="220" y="656" width="5" height="1" fill="#fff"/><rect x="222" y="654" width="1" height="5" fill="#fff"/><rect x="221" y="663" width="5" height="1" fill="#fff"/><rect x="223" y="661" width="1" height="5" fill="#fff"/><rect x="217" y="677" width="5" height="1" fill="#fff"/><rect x="219" y="675" width="1" height="5" fill="#fff"/><rect x="215" y="685" width="5" height="1" fill="#fff"/><rect x="217" y="683" width="1" height="5" fill="#fff"/><rect x="214" y="700" width="5" height="1" fill="#fff"/><rect x="216" y="698" width="1" height="5" fill="#fff"/><rect x="201" y="709" width="5" height="1" fill="#fff"/><rect x="203" y="707" width="1" height="5" fill="#fff"/><rect x="210" y="720" width="5" height="1" fill="#fff"/><rect x="212" y="718" width="1" height="5" fill="#fff"/><rect x="217" y="725" width="5" height="1" fill="#fff"/><rect x="219" y="723" width="1" height="5" fill="#fff"/><rect x="209" y="731" width="5" height="1" fill="#fff"/><rect x="211" y="729" width="1" height="5" fill="#fff"/><rect x="60" y="686" width="5" height="1" fill="#fff"/><rect x="62" y="684" width="1" height="5" fill="#fff"/><rect x="67" y="700" width="5" height="1" fill="#fff"/><rect x="69" y="698" width="1" height="5" fill="#fff"/><rect x="74" y="706" width="5" height="1" fill="#fff"/><rect x="76" y="704" width="1" height="5" fill="#fff"/><rect x="81" y="708" width="5" height="1" fill="#fff"/><rect x="83" y="706" width="1" height="5" fill="#fff"/><rect x="86" y="719" width="5" height="1" fill="#fff"/><rect x="88" y="717" width="1" height="5" fill="#fff"/><rect x="84" y="725" width="5" height="1" fill="#fff"/><rect x="86" y="723" width="1" height="5" fill="#fff"/><rect x="131" y="732" width="5" height="1" fill="#fff"/><rect x="133" y="730" width="1" height="5" fill="#fff"/><rect x="60" y="677" width="5" height="1" fill="#fff"/><rect x="62" y="675" width="1" height="5" fill="#fff"/><rect x="67" y="699" width="5" height="1" fill="#fff"/><rect x="69" y="697" width="1" height="5" fill="#fff"/><rect x="71" y="707" width="5" height="1" fill="#fff"/><rect x="73" y="705" width="1" height="5" fill="#fff"/><rect x="76" y="719" width="5" height="1" fill="#fff"/><rect x="78" y="717" width="1" height="5" fill="#fff"/><rect x="74" y="724" width="5" height="1" fill="#fff"/><rect x="76" y="722" width="1" height="5" fill="#fff"/><rect x="60" y="732" width="5" height="1" fill="#fff"/><rect x="62" y="730" width="1" height="5" fill="#fff"/><polyline points="62.3,677.9 69.8,699.2 73.8,707.1 78.5,719.7 76.6,724.5 62.3,732.4" fill="none" stroke="#ff8000" stroke-width="1"/><polyline points="62.3,687.0 69.8,700.8 76.2,706.7 83.3,708.7 88.4,719.7 86.4,725.3 133.8,732.4" fill="none" stroke="#ffff00" stroke-width="1"/><polyline points="223.0,656.5 223.6,663.1 219.8,677.8 217.9,685.4 216.7,700.1 203.4,709.4 212.9,720.4 219.8,725.4 211.6,731.7" fill="none" stroke="#c8c800" stroke-width="1"/><polyline points="533.9,51.0 510.6,76.3 487.4,101.2 477.4,112.5 448.1,145.6 383.4,218.3 378.3,223.4 369.9,233.5 355.2,249.4 337.3,273.4 331.3,279.7 318.4,290.4 300.2,312.1 293.1,321.3 274.4,358.3 265.6,374.4 293.1,393.4 298.2,414.7 298.2,435.5 320.5,449.4 327.8,469.6 295.8,487.1 325.8,511.3 292.6,530.2 286.6,531.3 314.7,537.6 293.4,543.9 252.4,550.2 247.6,565.7 251.5,574.5 251.5,585.7 246.8,586.4 205.0,599.5 230.2,600.3 284.0,607.4 333.7,620.5 338.5,624.0 357.5,624.9 358.4,635.3 351.8,640.0 364.1,647.7 365.0,651.4 386.8,655.2 381.1,662.8 378.3,678.0 397.2,680.8 390.6,685.5 407.7,700.7 418.0,710.2 408.6,725.3 408.6,732.0" fill="none" stroke="#00ffff" stroke-width="1"/><polyline points="666.0,62.0 652.3,76.3 633.4,101.2 624.4,112.3 601.3,145.4 555.5,218.1 549.2,223.4 539.2,233.5 524.4,249.4 506.2,273.4 503.1,279.7 480.2,290.4 460.8,312.1 451.3,321.5 410.5,358.2 391.1,374.4 366.0,393.2 357.1,414.7 355.0,435.5 352.6,449.4 354.9,469.6 357.3,487.1 358.9,511.3 361.3,531.3 362.9,537.6 364.4,550.2 365.2,565.7 367.6,574.7 375.5,600.3 379.6,622.0 384.9,635.3 389.7,644.8 386.8,654.3 388.7,662.8 397.2,678.0 398.2,684.6 407.7,698.8 419.0,710.2 436.0,724.4 455.0,732.0" fill="none" stroke="#ff0000" stroke-width="1"/><polyline points="365.1,51.0 346.8,94.9 330.3,149.8 320.3,190.0 312.2,232.4 308.3,251.3 304.3,279.7 303.6,311.3 303.6,340.0 302.9,371.0 307.8,400.0 311.6,428.4 317.3,449.2 325.8,475.8 332.5,494.7 341.9,523.1 353.3,551.5 363.8,576.3 374.9,600.0 387.6,630.6 401.8,664.7 410.3,691.2 416.0,710.2" fill="none" stroke="#ffc0ff" stroke-width="1"/><polyline points="368.1,51.0 349.8,94.9 333.3,149.8 323.3,190.0 315.2,232.4 311.3,251.3 307.3,279.7 306.6,311.3 306.6,340.0 305.9,371.0 310.8,400.0 314.6,428.4 320.3,449.2 328.8,475.8 335.5,494.7 344.9,523.1 356.3,551.5 366.8,576.3 377.9,600.0 390.6,630.6 404.8,664.7 413.3,691.2 419.0,710.2 436.0,724.4 455.0,732.0" fill="none" stroke="#ff00ff" stroke-width="1"/><polyline points="170.0,51.0 229.0,76.4 193.8,101.7 211.4,112.6 187.4,145.4 193.1,218.9 205.7,223.7 217.6,233.5 211.7,249.4 157.6,273.4 169.0,279.2 236.1,290.5 236.1,312.1 205.7,321.5 247.3,358.4 325.6,374.8 397.4,393.4 445.9,414.7 481.6,435.5 469.7,449.4 463.6,469.6 421.6,487.2 439.4,511.3 390.5,530.2 385.0,531.3 379.4,537.6 366.8,543.9 319.5,550.2 277.6,565.7 217.6,574.5 156.6,585.7 151.8,586.4 127.2,599.7 145.3,607.6 132.6,619.7 127.4,623.4 132.6,630.3 126.3,635.5 126.3,648.2 145.3,655.5 139.5,662.4 157.4,677.1 144.2,681.3 170.3,685.3 164.0,686.0 140.1,700.0 121.2,702.4 115.6,707.1 103.4,709.1 103.4,719.7 115.6,725.7 104.6,732.4" fill="none" stroke="#00ff00" stroke-width="1"/><polyline points="170.0,51.0 228.5,76.4 168.5,101.7 200.0,112.6 148.8,145.4 163.1,218.9 175.3,223.7 167.5,233.5 182.5,249.4 109.5,273.4 121.3,279.2 198.3,290.5 179.4,312.1 152.9,321.5 178.9,358.6 258.3,374.4 330.6,393.4 372.7,414.7 412.0,435.5 400.7,449.4 394.6,469.6 354.4,487.2 372.3,511.3 324.2,530.2 319.5,531.3 315.5,537.6 298.9,543.9 252.4,550.2 216.8,565.7 147.6,574.3 133.8,585.7 127.7,586.4 111.1,599.5 107.3,600.3 130.0,607.6 129.5,619.2 100.0,621.0 117.4,630.3 86.3,635.5 70.5,655.0 74.2,663.4 90.4,677.5 90.4,681.4 107.7,685.4 70.6,700.4 98.7,702.4 95.1,709.5 116.4,720.1 121.2,725.3 104.6,732.4" fill="none" stroke="#ff0080" stroke-width="1"/></g><rect x="61" y="710" width="565" height="1" fill="#ff00ff"/><rect x="628.5" y="701.5" width="27" height="17" fill="#000" stroke="#ff00ff" stroke-width="1"/><text x="629.7" y="715.0" fill="#ff00ff" font-size="12.5" text-anchor="start" font-weight="normal" textLength="22.4" lengthAdjust="spacingAndGlyphs" >LCL</text><rect x="67.5" y="607.5" width="43" height="17" fill="#000" stroke="#ffff00" stroke-width="1"/><text x="71.6" y="620.8" fill="#ffff00" font-size="12.5" text-anchor="start" font-weight="normal" textLength="34.7" lengthAdjust="spacingAndGlyphs" >CAPE</text><rect x="67.5" y="636.5" width="57" height="17" fill="#000" stroke="#ff8000" stroke-width="1"/><text x="71.4" y="649.7" fill="#e07000" font-size="12.5" text-anchor="start" font-weight="normal" textLength="49.4" lengthAdjust="spacingAndGlyphs" >CINH * 5</text><rect x="219.0" y="649.5" width="7" height="7" fill="#c8c800"/><text x="222.5" y="656.0" fill="#000" font-size="7.5" text-anchor="middle" font-weight="bold" >3</text><rect x="212.0" y="678.0" width="7" height="7" fill="#c8c800"/><text x="215.5" y="684.5" fill="#000" font-size="7.5" text-anchor="middle" font-weight="bold" >2</text><rect x="207.0" y="704.0" width="7" height="7" fill="#c8c800"/><text x="210.5" y="710.5" fill="#000" font-size="7.5" text-anchor="middle" font-weight="bold" >1</text><rect x="761" y="40" width="1" height="730" fill="#00ff00"/><rect x="826" y="40" width="1" height="730" fill="#ff0080"/><g shape-rendering="crispEdges"><line x1="761.50" y1="76.50" x2="758.30" y2="47.20" stroke="#fff" stroke-width="1" /><line x1="761.50" y1="101.50" x2="768.80" y2="73.00" stroke="#fff" stroke-width="1" /><line x1="761.50" y1="112.50" x2="763.00" y2="82.90" stroke="#fff" stroke-width="1" /><line x1="761.50" y1="145.40" x2="774.90" y2="119.20" stroke="#fff" stroke-width="1" /><line x1="761.50" y1="218.80" x2="770.30" y2="190.30" stroke="#fff" stroke-width="1" /><line x1="761.50" y1="233.70" x2="775.50" y2="208.40" stroke="#fff" stroke-width="1" /><line x1="761.50" y1="247.90" x2="768.40" y2="221.80" stroke="#fff" stroke-width="1" /><line x1="761.50" y1="274.00" x2="779.50" y2="251.40" stroke="#fff" stroke-width="1" /><line x1="761.50" y1="278.70" x2="778.70" y2="256.60" stroke="#fff" stroke-width="1" /><line x1="761.50" y1="290.50" x2="768.40" y2="271.60" stroke="#fff" stroke-width="1" /><line x1="761.50" y1="311.00" x2="778.70" y2="288.60" stroke="#fff" stroke-width="1" /><line x1="761.50" y1="321.30" x2="777.90" y2="297.20" stroke="#fff" stroke-width="1" /><line x1="761.50" y1="358.50" x2="783.90" y2="339.20" stroke="#fff" stroke-width="1" /><line x1="761.50" y1="374.30" x2="783.00" y2="354.20" stroke="#fff" stroke-width="1" /><line x1="761.50" y1="393.20" x2="781.80" y2="372.40" stroke="#fff" stroke-width="1" /><line x1="761.50" y1="414.20" x2="785.80" y2="398.90" stroke="#fff" stroke-width="1" /><line x1="761.50" y1="435.50" x2="783.00" y2="416.30" stroke="#fff" stroke-width="1" /><line x1="761.50" y1="449.40" x2="783.00" y2="430.00" stroke="#fff" stroke-width="1" /><line x1="761.50" y1="469.50" x2="783.00" y2="450.00" stroke="#fff" stroke-width="1" /><line x1="761.50" y1="487.10" x2="780.70" y2="470.80" stroke="#fff" stroke-width="1" /><line x1="761.50" y1="511.40" x2="781.80" y2="491.30" stroke="#fff" stroke-width="1" /><line x1="761.50" y1="529.70" x2="781.80" y2="509.50" stroke="#fff" stroke-width="1" /><line x1="761.50" y1="531.90" x2="780.70" y2="516.60" stroke="#fff" stroke-width="1" /><line x1="761.50" y1="543.00" x2="783.40" y2="524.50" stroke="#fff" stroke-width="1" /><line x1="761.50" y1="550.80" x2="782.60" y2="530.00" stroke="#fff" stroke-width="1" /><line x1="761.50" y1="564.70" x2="779.50" y2="543.40" stroke="#fff" stroke-width="1" /><line x1="761.50" y1="574.20" x2="784.50" y2="557.20" stroke="#fff" stroke-width="1" /><line x1="761.50" y1="582.90" x2="771.60" y2="559.20" stroke="#fff" stroke-width="1" /><line x1="761.50" y1="599.50" x2="774.70" y2="573.40" stroke="#fff" stroke-width="1" /><line x1="761.50" y1="617.60" x2="776.30" y2="597.90" stroke="#fff" stroke-width="1" /><line x1="761.50" y1="627.60" x2="783.80" y2="616.60" stroke="#fff" stroke-width="1" /><line x1="761.50" y1="638.70" x2="784.60" y2="622.50" stroke="#fff" stroke-width="1" /><line x1="761.50" y1="645.10" x2="786.00" y2="631.30" stroke="#fff" stroke-width="1" /><line x1="761.50" y1="648.80" x2="786.00" y2="634.00" stroke="#fff" stroke-width="1" /><line x1="761.50" y1="655.20" x2="788.80" y2="644.20" stroke="#fff" stroke-width="1" /><line x1="761.50" y1="662.60" x2="789.70" y2="656.50" stroke="#fff" stroke-width="1" /><line x1="761.50" y1="665.40" x2="788.80" y2="658.90" stroke="#fff" stroke-width="1" /><line x1="761.50" y1="679.20" x2="785.10" y2="661.30" stroke="#fff" stroke-width="1" /><line x1="761.50" y1="685.60" x2="782.70" y2="665.90" stroke="#fff" stroke-width="1" /><line x1="761.50" y1="699.40" x2="779.60" y2="680.10" stroke="#fff" stroke-width="1" /><line x1="761.50" y1="709.60" x2="787.00" y2="686.20" stroke="#fff" stroke-width="1" /><line x1="761.50" y1="708.60" x2="787.90" y2="696.10" stroke="#fff" stroke-width="1" /><line x1="761.50" y1="725.20" x2="770.40" y2="693.90" stroke="#fff" stroke-width="1" /><line x1="761.50" y1="732.60" x2="779.60" y2="710.10" stroke="#fff" stroke-width="1" /><line x1="826.50" y1="76.80" x2="811.10" y2="52.40" stroke="#fff" stroke-width="1" /><line x1="826.50" y1="101.30" x2="816.60" y2="74.20" stroke="#fff" stroke-width="1" /><line x1="826.50" y1="112.70" x2="813.00" y2="86.30" stroke="#fff" stroke-width="1" /><line x1="826.50" y1="145.50" x2="821.30" y2="116.30" stroke="#fff" stroke-width="1" /><line x1="826.50" y1="218.80" x2="818.50" y2="190.30" stroke="#fff" stroke-width="1" /><line x1="826.50" y1="223.60" x2="829.70" y2="204.50" stroke="#fff" stroke-width="1" /><line x1="826.50" y1="233.50" x2="820.00" y2="205.00" stroke="#fff" stroke-width="1" /><line x1="826.50" y1="249.50" x2="818.50" y2="221.40" stroke="#fff" stroke-width="1" /><line x1="826.50" y1="274.70" x2="820.50" y2="245.00" stroke="#fff" stroke-width="1" /><line x1="826.50" y1="279.50" x2="819.00" y2="250.00" stroke="#fff" stroke-width="1" /><line x1="826.50" y1="290.50" x2="826.00" y2="262.00" stroke="#fff" stroke-width="1" /><line x1="826.50" y1="312.60" x2="834.70" y2="283.90" stroke="#fff" stroke-width="1" /><line x1="826.50" y1="321.50" x2="834.00" y2="293.00" stroke="#fff" stroke-width="1" /><line x1="826.50" y1="358.50" x2="843.90" y2="335.30" stroke="#fff" stroke-width="1" /><line x1="826.50" y1="374.30" x2="843.90" y2="351.00" stroke="#fff" stroke-width="1" /><line x1="826.50" y1="393.20" x2="844.50" y2="370.80" stroke="#fff" stroke-width="1" /><line x1="826.50" y1="414.20" x2="849.70" y2="398.00" stroke="#fff" stroke-width="1" /><line x1="826.50" y1="435.50" x2="845.80" y2="414.20" stroke="#fff" stroke-width="1" /><line x1="826.50" y1="449.40" x2="845.80" y2="428.00" stroke="#fff" stroke-width="1" /><line x1="826.50" y1="469.50" x2="846.90" y2="448.20" stroke="#fff" stroke-width="1" /><line x1="826.50" y1="487.10" x2="841.80" y2="470.80" stroke="#fff" stroke-width="1" /><line x1="826.50" y1="511.40" x2="844.50" y2="489.30" stroke="#fff" stroke-width="1" /><line x1="826.50" y1="530.00" x2="844.50" y2="507.60" stroke="#fff" stroke-width="1" /><line x1="826.50" y1="534.70" x2="843.90" y2="514.20" stroke="#fff" stroke-width="1" /><line x1="826.50" y1="542.60" x2="845.50" y2="522.10" stroke="#fff" stroke-width="1" /><line x1="826.50" y1="550.50" x2="843.40" y2="526.80" stroke="#fff" stroke-width="1" /><line x1="826.50" y1="564.70" x2="839.50" y2="539.20" stroke="#fff" stroke-width="1" /><line x1="826.50" y1="574.20" x2="844.50" y2="551.30" stroke="#fff" stroke-width="1" /><line x1="826.50" y1="586.00" x2="811.80" y2="560.80" stroke="#fff" stroke-width="1" /><line x1="826.50" y1="600.30" x2="803.20" y2="581.30" stroke="#fff" stroke-width="1" /><line x1="826.50" y1="607.40" x2="804.00" y2="590.80" stroke="#fff" stroke-width="1" /><line x1="826.50" y1="618.40" x2="804.00" y2="601.00" stroke="#fff" stroke-width="1" /><line x1="826.50" y1="623.00" x2="804.40" y2="604.60" stroke="#fff" stroke-width="1" /><line x1="826.50" y1="630.40" x2="805.40" y2="612.00" stroke="#fff" stroke-width="1" /><line x1="826.50" y1="639.60" x2="798.90" y2="628.50" stroke="#fff" stroke-width="1" /><line x1="826.50" y1="645.10" x2="797.10" y2="641.40" stroke="#fff" stroke-width="1" /><line x1="826.50" y1="650.60" x2="797.10" y2="646.00" stroke="#fff" stroke-width="1" /><line x1="826.50" y1="655.20" x2="855.10" y2="648.20" stroke="#fff" stroke-width="1" /><line x1="826.50" y1="675.50" x2="820.10" y2="653.40" stroke="#fff" stroke-width="1" /><line x1="826.50" y1="677.30" x2="835.70" y2="650.60" stroke="#fff" stroke-width="1" /><line x1="826.50" y1="666.30" x2="856.00" y2="670.30" stroke="#fff" stroke-width="1" /><line x1="826.50" y1="669.00" x2="840.30" y2="687.50" stroke="#fff" stroke-width="1" /><line x1="826.50" y1="695.70" x2="832.00" y2="662.60" stroke="#fff" stroke-width="1" /><line x1="826.50" y1="701.30" x2="800.80" y2="688.00" stroke="#fff" stroke-width="1" /><line x1="826.50" y1="706.80" x2="798.90" y2="696.10" stroke="#fff" stroke-width="1" /><line x1="826.50" y1="709.60" x2="798.00" y2="715.10" stroke="#fff" stroke-width="1" /><line x1="826.50" y1="720.60" x2="798.90" y2="714.20" stroke="#fff" stroke-width="1" /><line x1="826.50" y1="725.20" x2="800.80" y2="714.20" stroke="#fff" stroke-width="1" /><line x1="826.50" y1="732.20" x2="797.10" y2="729.30" stroke="#fff" stroke-width="1" /><line x1="762.50" y1="393.20" x2="782.80" y2="372.40" stroke="#fff" stroke-width="1" /><line x1="762.50" y1="529.70" x2="782.80" y2="509.50" stroke="#fff" stroke-width="1" /><line x1="762.50" y1="582.90" x2="772.60" y2="559.20" stroke="#fff" stroke-width="1" /><line x1="762.50" y1="599.50" x2="775.70" y2="573.40" stroke="#fff" stroke-width="1" /><line x1="762.50" y1="617.60" x2="777.30" y2="597.90" stroke="#fff" stroke-width="1" /><line x1="762.50" y1="638.70" x2="785.60" y2="622.50" stroke="#fff" stroke-width="1" /><line x1="826.50" y1="394.20" x2="844.50" y2="371.80" stroke="#fff" stroke-width="1" /><line x1="826.50" y1="531.00" x2="844.50" y2="508.60" stroke="#fff" stroke-width="1" /><line x1="826.50" y1="587.00" x2="811.80" y2="561.80" stroke="#fff" stroke-width="1" /><line x1="826.50" y1="619.40" x2="804.00" y2="602.00" stroke="#fff" stroke-width="1" /><line x1="826.50" y1="624.00" x2="804.40" y2="605.60" stroke="#fff" stroke-width="1" /><line x1="826.50" y1="640.60" x2="798.90" y2="629.50" stroke="#fff" stroke-width="1" /></g></svg></body></html>
